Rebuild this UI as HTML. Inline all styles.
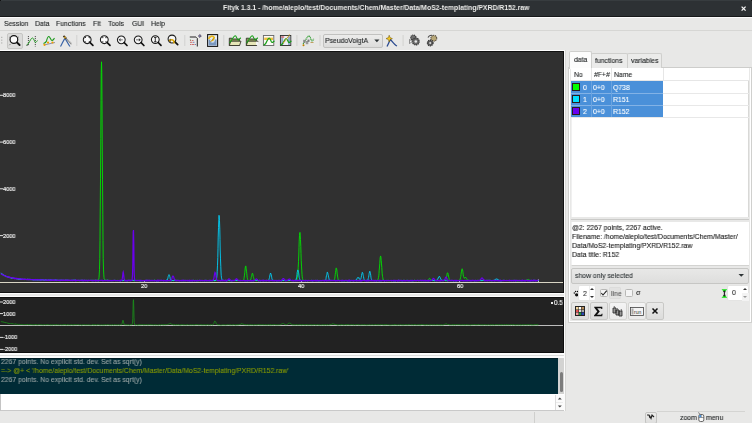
<!DOCTYPE html>
<html><head><meta charset="utf-8">
<style>
*{margin:0;padding:0;box-sizing:border-box}
html,body{-webkit-font-smoothing:antialiased;width:752px;height:423px;overflow:hidden;background:#e8e8e7;font-family:"Liberation Sans",sans-serif;font-size:7.4px;color:#1e2122}
.a{position:absolute}
.yl{position:absolute;white-space:nowrap;line-height:1;font-size:5.9px;color:#f6f6f6;-webkit-text-stroke:0.15px #f6f6f6;transform:scaleX(0.95);transform-origin:0 0;will-change:transform}
.t{position:absolute;white-space:nowrap;line-height:1;will-change:transform;-webkit-text-stroke:0.12px currentColor;transform:scaleX(0.927);transform-origin:0 0;margin-top:-0.55px}
</style></head><body>
<!-- title bar -->
<div class="a" style="left:0;top:0;width:752px;height:16px;background:#2d3134"></div>
<div class="a" style="left:0;top:0;width:752px;height:1px;background:#373c3f"></div>
<div class="a" style="left:0;top:0;width:1px;height:1px;background:#111"></div>
<div class="a" style="left:751px;top:0;width:1px;height:1px;background:#111"></div>
<div class="a" style="left:0;top:16px;width:752px;height:1px;background:#17191a"></div>
<div class="a" style="left:0;top:17px;width:752px;height:1px;background:#fbfbfb"></div>
<div class="t" style="left:222.7px;top:4.8px;font-weight:bold;font-size:7.3px;color:#eeeeec;-webkit-text-stroke:0;transform:scaleX(0.94)">Fityk 1.3.1 - /home/aleplo/test/Documents/Chem/Master/Data/MoS2-templating/PXRD/R152.raw</div>
<svg class="a" style="left:740px;top:5px" width="7" height="7" viewBox="0 0 7 7"><path d="M1.6,1.6 L5.6,5.6 M5.6,1.6 L1.6,5.6" stroke="#f4f4f4" stroke-width="1.3"/></svg>

<!-- menu bar -->
<div class="a" style="left:0;top:30px;width:752px;height:1px;background:#d6d6d4"></div>
<div class="t" style="left:3.8px;top:20.5px">Session</div>
<div class="t" style="left:35px;top:20.5px">Data</div>
<div class="t" style="left:56px;top:20.5px">Functions</div>
<div class="t" style="left:92.6px;top:20.5px">Fit</div>
<div class="t" style="left:107.9px;top:20.5px">Tools</div>
<div class="t" style="left:131.8px;top:20.5px">GUI</div>
<div class="t" style="left:150.8px;top:20.5px">Help</div>

<!-- toolbar -->
<div class="a" style="left:0;top:50px;width:564px;height:1px;background:#fdfdfd"></div>
<!-- grip -->
<svg class="a" style="left:0;top:35px" width="4" height="12"><g fill="#a8a8a6"><rect x="1.2" y="1.8" width="1.1" height="1.1"/><rect x="1.2" y="4.6" width="1.1" height="1.1"/><rect x="1.2" y="7.4" width="1.1" height="1.1"/></g></svg>
<!-- pressed zoom button -->
<div class="a" style="left:7px;top:33px;width:16px;height:16px;background:#dcdcdb;border:1px solid #c6c6c4;border-radius:2px"></div>
<svg class="a" style="left:0;top:30px" width="450" height="20">
 <defs>
  <g id="mag"><circle cx="0" cy="0" r="3.9" fill="#f6f6f6" stroke="#1a1a1a" stroke-width="1.05"/><path d="M2.9,2.9 L5.7,5.7" stroke="#111" stroke-width="1.7" stroke-linecap="round"/></g>
 </defs>
 <!-- 1 zoom -->
 <circle cx="13.9" cy="9.5" r="3.85" fill="#fbfbfb" stroke="#111" stroke-width="1.2"/>
 <path d="M17,12.5 L19.6,15" stroke="#111" stroke-width="1.9" stroke-linecap="round"/>
 <path d="M9.3,7.2 L10.6,7.6 M18.7,7 L17.6,7.6 M9.3,15.2 L10.3,14.2" stroke="#555" stroke-width="0.8"/>
 <!-- 2 sine w/ dashed -->
 <path d="M28.4,6 V15.5 M35.3,6 V16.5" stroke="#333" stroke-width="0.9" stroke-dasharray="1.1,0.9"/>
 <path d="M26.5,15 L28.5,13.5 C30,11 31,8 32.5,8 C34,8 34.5,12.5 35.5,12.5 C36.3,12.5 36.8,11 37.5,10.5" fill="none" stroke="#1c9a1c" stroke-width="0.95"/>
 <path d="M26.5,15.5 L28,15" stroke="#444" stroke-width="0.8"/>
 <!-- 3 peak with dots -->
 <path d="M43.5,13.5 C45,13 46,12.5 46.5,11 C47,9 47.7,6.5 48.8,6.5 C50,6.5 50.8,10.5 52,10.5 C53,10.5 53.8,9 54.5,8.2" fill="none" stroke="#1c9a1c" stroke-width="1.1"/>
 <path d="M44,15 L55,12.5" stroke="#6a6a90" stroke-width="0.7"/>
 <circle cx="44.5" cy="14.8" r="1.15" fill="#f0a000"/><circle cx="48" cy="12.6" r="1.1" fill="#f0a000"/><circle cx="52.5" cy="12.5" r="1.1" fill="#f0a000"/>
 <!-- 4 lambda pencil -->
 <path d="M60.5,16.5 C62,14 63.5,10 65,8.5 C66.5,10 68,14 70,16.5" fill="none" stroke="#3a64a8" stroke-width="1.2"/>
 <path d="M65,7.5 L71.5,14.2" stroke="#777" stroke-width="1.6" stroke-dasharray="0.8,0.5"/>
 <path d="M63.5,5.8 L66.2,8.6" stroke="#3a2a10" stroke-width="1.8"/>
 <circle cx="65" cy="7.5" r="0.9" fill="#e0b030"/>
 <!-- sep -->
 <rect x="76.3" y="5" width="1" height="11" fill="#d2d2d0"/>
 <!-- magnifiers -->
 <use href="#mag" x="87.2" y="9.7"/>
 <path d="M85,7.6 h1.5 v-1.2 h1.4 v1.2 h1.5 v1.4 h-1.5 v1.2 h-1.4 v-1.2 h-1.5z" fill="#fff"/>
 <path d="M84.5,8 L86,7.2 M90,8 L88.5,7.2 M84.5,11.4 L86,12.2 M90,11.4 L88.5,12.2" stroke="#333" stroke-width="1"/>
 <use href="#mag" x="104.3" y="9.7"/>
 <path d="M101.5,9 h5.6 v1.4 h-5.6z M103.6,7 h1.4 v5.4 h-1.4z" fill="#fff"/>
 <path d="M101.8,7.6 h1.6 M105.2,7.6 h1.6 M101.8,11.8 h1.6 M105.2,11.8 h1.6" stroke="#444" stroke-width="0.9"/>
 <use href="#mag" x="121.3" y="9.8"/>
 <path d="M118.6,9.8 L120.6,8.2 V11.4Z" fill="#333"/><path d="M120.5,9.8 H122.8" stroke="#888" stroke-width="1.2"/>
 <use href="#mag" x="138.2" y="9.8"/>
 <path d="M140.8,9.8 L138.8,8.2 V11.4Z" fill="#333"/><path d="M136,9.8 H138.9" stroke="#888" stroke-width="1.2"/>
 <use href="#mag" x="155.3" y="9.6"/>
 <path d="M155.3,7 V12.2 M154,7.4 H156.6 M154,11.8 H156.6" stroke="#222" stroke-width="0.9"/>
 <use href="#mag" x="172" y="9"/>
 <path d="M169.5,11.5 C170,9.5 172.5,9.3 173.8,11 L174,13.5" fill="none" stroke="#e0a800" stroke-width="1.5"/>
 <path d="M168.5,10.5 L170.5,9 L170.3,12Z" fill="#e0a800" stroke="#222" stroke-width="0.4"/>
 <!-- sep -->
 <rect x="184.3" y="5" width="1" height="11" fill="#d2d2d0"/>
 <!-- list icon -->
 <path d="M189.8,7 H196 M197.3,8.2 V16.5" stroke="#222" stroke-width="1"/>
 <path d="M196.2,7.2 L197.2,8.2" stroke="#222" stroke-width="0.8"/>
 <path d="M190,10.5 h1.2 M192,10.5 h1.5 M190,12.3 h2.5 M190,14.5 h1.5 M192,14.5 h2.5" stroke="#c86464" stroke-width="0.9"/>
 <path d="M193,12.3 h1.5 M195,14.5 h1" stroke="#6a7ab8" stroke-width="0.9"/>
 <path d="M190.4,9.5 v0.8" stroke="#3a9a3a" stroke-width="0.8"/>
 <path d="M198.4,6 L199.9,4.6 L201.3,5.9 L199.9,7.4Z" fill="#9080c8" stroke="#333" stroke-width="0.7"/>
 <!-- doc w arrow -->
 <rect x="207.6" y="4.6" width="10" height="11.8" fill="#e8eef6" stroke="#1a1a1a" stroke-width="1.1"/>
 <rect x="208.6" y="9.5" width="8" height="6" fill="#7a98c0"/>
 <circle cx="212.5" cy="10.5" r="2.3" fill="#d8e4f2"/>
 <path d="M208.6,9 C209.5,5.8 212.8,5.5 214.2,7.5 L212.3,11" fill="none" stroke="#e8b820" stroke-width="1.7"/>
 <path d="M210.5,12 L214,8.2" stroke="#c09010" stroke-width="1"/>
 <!-- sep -->
 <rect x="223.3" y="5" width="1" height="11" fill="#d2d2d0"/>
 <!-- folder 1 -->
 <path d="M229.3,15.5 V8.2 h2.5 l0.8,0.8 h6.8 v6.5z" fill="#8c9460" stroke="#2a2a20" stroke-width="0.8"/>
 <path d="M229.3,15.5 L230.8,11.2 H241 L239.6,15.5z" fill="#e6e6b8" stroke="#2a2a20" stroke-width="0.8"/>
 <path d="M229.5,13 L232,9.5 C233.5,7 234.5,5.8 235.3,5.8 C236.5,5.8 237,10 238.2,10 C239,10 239.8,8.5 240.8,7.8" fill="none" stroke="#16a016" stroke-width="1.1"/>
 <!-- folder 2 -->
 <path d="M246.3,15.5 V8.2 h2.5 l0.8,0.8 h6.8 v6.5z" fill="#8c9460" stroke="#2a2a20" stroke-width="0.8"/>
 <path d="M246.3,15.5 L247.8,11.2 H258 L256.6,15.5z" fill="#e6e6b8" stroke="#2a2a20" stroke-width="0.8"/>
 <path d="M246.5,13 L249,9.5 C250.5,7 251.5,5.8 252.3,5.8 C253.5,5.8 254,10 255.2,10 C256,10 256.8,8.5 257.8,7.8" fill="none" stroke="#16a016" stroke-width="1.1"/>
 <rect x="256" y="11.8" width="2.3" height="3.2" fill="#f4f4f4"/>
 <!-- frame -->
 <rect x="263.4" y="5.5" width="10.4" height="10" fill="#fbfbf6" stroke="#666" stroke-width="0.9"/>
 <rect x="264.2" y="7.6" width="8.8" height="2.4" fill="#f0c040"/>
 <path d="M263.6,15.3 L265.5,13.8 C267,11.5 268,8 269.2,8 C270.5,8 271,12.5 272,12.5 C272.8,12.5 273.5,11.5 274.5,11" fill="none" stroke="#16a016" stroke-width="1.2"/>
 <!-- frame pencil -->
 <rect x="280.4" y="5.5" width="10.4" height="10" fill="#eef0f6" stroke="#2a2a2a" stroke-width="0.9"/>
 <rect x="281.2" y="6.3" width="2" height="8.6" fill="#90a8c8"/><rect x="288" y="6.3" width="2" height="8.6" fill="#90a8c8"/>
 <rect x="281.2" y="6.3" width="3" height="1.4" fill="#e07070"/>
 <path d="M280.6,15.3 L282.5,13.8 C284,11.5 285,8.5 286.2,8.5 C287.5,8.5 288,12.5 289,12.5 C289.8,12.5 290.5,11.5 291.5,11" fill="none" stroke="#16a016" stroke-width="1.2"/>
 <path d="M283.3,13 L289.8,4.5" stroke="#c89a20" stroke-width="1.3" stroke-dasharray="1,0.6"/>
 <!-- sep -->
 <rect x="296.4" y="5" width="1" height="11" fill="#d2d2d0"/>
 <!-- curve with gear -->
 <path d="M303,14 C305,12 307,6 309,6 C310.5,6 311,11 312,11 C312.8,11 313.3,9.5 313.8,8.8" fill="none" stroke="#2a9a2a" stroke-width="1.1" stroke-dasharray="1.2,0.5"/>
 <rect x="303.2" y="9.8" width="2.3" height="3" fill="#8a8a8a"/><rect x="305.8" y="11" width="2.5" height="3.2" fill="#999"/><rect x="307.5" y="9.6" width="2" height="2.2" fill="#777"/>
 <circle cx="303.5" cy="15.3" r="1" fill="#c08000"/>
 <path d="M310.5,12.5 h3" stroke="#c0a060" stroke-width="1"/>
 <!-- sep -->
 <rect x="319.5" y="5" width="1" height="11" fill="#d2d2d0"/>
 <!-- lambda star -->
 <path d="M387,16.5 C388.5,13.5 389.5,11 390.5,9.5 C392,11 394.5,15 397,16" fill="none" stroke="#2a4a90" stroke-width="1.3"/>
 <path d="M389.2,5.2 L390,7.6 L392.4,8.6 L390,9.6 L389.2,12 L388.4,9.6 L386,8.6 L388.4,7.6Z" fill="#f4c820" stroke="#6a5000" stroke-width="0.5"/>
 <!-- sep -->
 <rect x="402.6" y="5" width="1" height="11" fill="#d2d2d0"/>
 <!-- gears -->
 <circle cx="413.3" cy="7.6" r="2.6" fill="#707070" stroke="#3a3a3a" stroke-width="1.2" stroke-dasharray="1.1,0.7"/>
 <circle cx="415.8" cy="11.5" r="3.4" fill="#6a6a6a" stroke="#3a3a3a" stroke-width="1.3" stroke-dasharray="1.2,0.7"/>
 <circle cx="415.8" cy="11.5" r="1.3" fill="#e8e8e8"/>
 <path d="M409.5,9.5 L412.5,11.5 L409.5,13.5Z" fill="#f0f0f0" stroke="#333" stroke-width="0.5"/>
 <!-- gears 2 -->
 <circle cx="433.8" cy="8.3" r="2.9" fill="#b8a878" stroke="#5a5040" stroke-width="1.2" stroke-dasharray="1.1,0.7"/>
 <circle cx="430.2" cy="13" r="2.8" fill="#606060" stroke="#303030" stroke-width="1.3" stroke-dasharray="1.1,0.7"/>
 <circle cx="430.2" cy="13" r="1" fill="#ddd"/>
 <path d="M428,7.5 C429,5.5 431,5 432.5,5.5" fill="none" stroke="#444" stroke-width="1.1"/>
</svg>
<!-- combo -->
<div class="a" style="left:323px;top:33.5px;width:60px;height:14px;background:linear-gradient(#ececeb,#dcdcdb);border:1px solid #c2c2c0;border-radius:2px"></div>
<div class="t" style="left:325px;top:37.5px">PseudoVoigtA</div>
<svg class="a" style="left:374px;top:39px" width="6" height="4"><path d="M0.3,0.5 L5.5,0.5 L2.9,3.2Z" fill="#2e3436"/></svg>


<!-- main plot -->
<div class="a" style="left:0;top:51px;width:564px;height:242px;background:#111;"></div>
<div class="a" style="left:0;top:52px;width:563px;height:240px;background:#303030"></div>
<div class="a" style="left:564px;top:50px;width:1px;height:361px;background:#fbfbfb"></div>
<div class="a" style="left:565px;top:50px;width:1px;height:361px;background:#d8d8d6"></div>
<div class="a" style="left:0;top:293px;width:564px;height:1px;background:#fbfbfb"></div>
<div class="a" style="left:0;top:296px;width:564px;height:1px;background:#fbfbfb"></div>
<svg class="a" style="left:0;top:0" width="564" height="423">
  <!-- y ticks -->
  <g stroke="#e0e0e0" stroke-width="1">
    <path d="M0,95.3 H3 M0,142.1 H3 M0,188.8 H3 M0,235.6 H3"/>
  </g>
  <line x1="0" y1="282.5" x2="563" y2="282.5" stroke="#d8d4c4" stroke-width="1"/>
  <path d="M144.5,280 V282 M301.5,280 V282 M459.5,280 V282 M538.5,279.5 V282" stroke="#ddd" stroke-width="1"/>
  <path d="M1.0,273.8 L1.2,273.9 L1.5,274.3 L1.8,274.2 L2.0,274.6 L2.2,274.6 L2.5,274.7 L2.8,275.0 L3.0,274.9 L3.2,275.2 L3.5,275.2 L3.8,275.3 L4.0,275.6 L4.2,275.9 L4.5,275.7 L4.8,275.9 L5.0,276.1 L5.2,276.4 L5.5,276.3 L5.8,276.3 L6.0,276.7 L6.2,276.4 L6.5,276.8 L6.8,276.6 L7.0,276.7 L7.2,276.7 L7.5,276.9 L7.8,277.2 L8.0,277.0 L8.2,277.2 L8.5,277.3 L8.8,277.3 L9.0,277.4 L9.2,277.3 L9.5,277.3 L9.8,277.5 L10.0,277.7 L10.2,277.7 L10.5,277.7 L10.8,277.8 L11.0,277.8 L11.2,277.8 L11.5,278.1 L11.8,278.1 L12.0,277.9 L12.2,278.1 L12.5,278.1 L12.8,278.3 L13.0,278.3 L13.2,278.2 L13.5,278.5 L13.8,278.2 L14.0,278.3 L14.2,278.5 L14.5,278.3 L14.8,278.5 L15.0,278.3 L15.2,278.6 L15.5,278.7 L15.8,278.6 L16.0,278.8 L16.2,278.6 L16.5,278.8 L16.8,278.8 L17.0,278.8 L17.2,278.8 L17.5,278.9 L17.8,279.0 L18.0,278.8 L18.2,278.9 L18.5,278.7 L18.8,279.0 L19.0,279.0 L19.2,279.2 L19.5,279.1 L19.8,278.9 L20.0,279.0 L20.2,279.1 L20.5,278.9 L20.8,279.1 L21.0,279.0 L21.2,279.0 L21.5,279.0 L21.8,279.3 L22.0,279.0 L22.2,279.1 L22.5,279.2 L22.8,279.4 L23.0,279.1 L23.2,279.3 L23.5,279.3 L23.8,279.5 L24.0,279.5 L24.2,279.5 L24.5,279.3 L24.8,279.3 L25.0,279.3 L25.2,279.5 L25.5,279.6 L25.8,279.3 L26.0,279.3 L26.2,279.3 L26.5,279.4 L26.8,279.5 L27.0,279.5 L27.2,279.4 L27.5,279.3 L27.8,279.5 L28.0,279.5 L28.2,279.6 L28.5,279.7 L28.8,279.6 L29.0,279.6 L29.2,279.6 L29.5,279.7 L29.8,279.4 L30.0,279.8 L30.2,279.7 L30.5,279.8 L30.8,279.8 L31.0,279.6 L31.2,279.6 L31.5,279.5 L31.8,279.7 L32.0,279.5 L32.2,279.5 L32.5,279.6 L32.8,279.6 L33.0,279.7 L33.2,279.6 L33.5,279.5 L33.8,279.6 L34.0,279.6 L34.2,279.7 L34.5,279.6 L34.8,279.9 L35.0,279.8 L35.2,279.7 L35.5,279.7 L35.8,279.8 L36.0,279.8 L36.2,279.7 L36.5,280.0 L36.8,280.0 L37.0,279.8 L37.2,279.9 L37.5,279.7 L37.8,279.7 L38.0,279.8 L38.2,279.8 L38.5,280.0 L38.8,279.8 L39.0,279.7 L39.2,280.1 L39.5,279.9 L39.8,279.8 L40.0,279.9 L40.2,279.7 L40.5,280.0 L40.8,280.1 L41.0,280.1 L41.2,280.0 L41.5,279.9 L41.8,279.9 L42.0,279.8 L42.2,280.1 L42.5,280.0 L42.8,280.1 L43.0,279.9 L43.2,279.9 L43.5,280.1 L43.8,280.2 L44.0,280.2 L44.2,280.1 L44.5,280.2 L44.8,280.1 L45.0,279.9 L45.2,280.0 L45.5,280.0 L45.8,279.9 L46.0,279.9 L46.2,280.0 L46.5,280.0 L46.8,280.1 L47.0,280.3 L47.2,280.1 L47.5,280.3 L47.8,280.3 L48.0,280.3 L48.2,280.0 L48.5,280.0 L48.8,280.0 L49.0,280.0 L49.2,280.0 L49.5,280.2 L49.8,280.3 L50.0,280.3 L50.2,280.1 L50.5,280.2 L50.8,280.3 L51.0,280.0 L51.2,280.2 L51.5,280.3 L51.8,280.3 L52.0,280.3 L52.2,280.2 L52.5,280.0 L52.8,280.3 L53.0,280.1 L53.2,280.3 L53.5,280.4 L53.8,280.1 L54.0,280.1 L54.2,280.4 L54.5,280.3 L54.8,280.1 L55.0,280.0 L55.2,280.1 L55.5,280.4 L55.8,280.3 L56.0,280.1 L56.2,280.3 L56.5,280.4 L56.8,280.3 L57.0,280.2 L57.2,280.2 L57.5,280.1 L57.8,280.0 L58.0,280.4 L58.2,280.3 L58.5,280.3 L58.8,280.4 L59.0,280.2 L59.2,280.4 L59.5,280.4 L59.8,280.1 L60.0,280.2 L60.2,280.2 L60.5,280.2 L60.8,280.3 L61.0,280.2 L61.2,280.2 L61.5,280.1 L61.8,280.4 L62.0,280.2 L62.2,280.3 L62.5,280.3 L62.8,280.4 L63.0,280.3 L63.2,280.5 L63.5,280.3 L63.8,280.3 L64.0,280.3 L64.2,280.1 L64.5,280.3 L64.8,280.2 L65.0,280.1 L65.2,280.4 L65.5,280.2 L65.8,280.3 L66.0,280.4 L66.2,280.3 L66.5,280.3 L66.8,280.3 L67.0,280.3 L67.2,280.4 L67.5,280.2 L67.8,280.4 L68.0,280.2 L68.2,280.2 L68.5,280.4 L68.8,280.3 L69.0,280.4 L69.2,280.4 L69.5,280.5 L69.8,280.3 L70.0,280.4 L70.2,280.4 L70.5,280.4 L70.8,280.4 L71.0,280.3 L71.2,280.4 L71.5,280.4 L71.8,280.5 L72.0,280.4 L72.2,280.5 L72.5,280.5 L72.8,280.3 L73.0,280.4 L73.2,280.6 L73.5,280.5 L73.8,280.2 L74.0,280.2 L74.2,280.4 L74.5,280.2 L74.8,280.3 L75.0,280.2 L75.2,280.5 L75.5,280.5 L75.8,280.5 L76.0,280.3 L76.2,280.5 L76.5,280.5 L76.8,280.3 L77.0,280.5 L77.2,280.6 L77.5,280.3 L77.8,280.6 L78.0,280.4 L78.2,280.4 L78.5,280.6 L78.8,280.5 L79.0,280.3 L79.2,280.4 L79.5,280.4 L79.8,280.3 L80.0,280.3 L80.2,280.3 L80.5,280.5 L80.8,280.2 L81.0,280.4 L81.2,280.4 L81.5,280.2 L81.8,280.3 L82.0,280.5 L82.2,280.4 L82.5,280.2 L82.8,280.6 L83.0,280.5 L83.2,280.6 L83.5,280.3 L83.8,280.3 L84.0,280.2 L84.2,280.5 L84.5,280.3 L84.8,280.3 L85.0,280.4 L85.2,280.6 L85.5,280.6 L85.8,280.3 L86.0,280.3 L86.2,280.6 L86.5,280.5 L86.8,280.5 L87.0,280.3 L87.2,280.2 L87.5,280.5 L87.8,280.4 L88.0,280.3 L88.2,280.6 L88.5,280.5 L88.8,280.5 L89.0,280.3 L89.2,280.6 L89.5,280.2 L89.8,280.6 L90.0,280.4 L90.2,280.4 L90.5,280.4 L90.8,280.6 L91.0,280.3 L91.2,280.3 L91.5,280.4 L91.8,280.3 L92.0,280.2 L92.2,280.3 L92.5,280.2 L92.8,280.3 L93.0,280.3 L93.2,280.3 L93.5,280.5 L93.8,280.3 L94.0,280.4 L94.2,280.2 L94.5,280.3 L94.8,280.1 L95.0,280.2 L95.2,280.1 L95.5,280.4 L95.8,280.3 L96.0,280.1 L96.2,280.2 L96.5,280.4 L96.8,280.0 L97.0,280.3 L97.2,280.1 L97.5,280.0 L97.8,280.1 L98.0,279.8 L98.2,279.8 L98.5,279.6 L98.8,279.1 L99.0,277.6 L99.2,275.0 L99.5,269.3 L99.8,258.6 L100.0,240.7 L100.2,214.0 L100.5,178.8 L100.8,138.7 L101.0,100.3 L101.2,72.4 L101.5,61.8 L101.8,72.2 L102.0,100.3 L102.2,139.0 L102.5,179.2 L102.8,214.2 L103.0,240.7 L103.2,258.5 L103.5,269.1 L103.8,274.9 L104.0,277.6 L104.2,278.9 L104.5,279.4 L104.8,280.0 L105.0,280.1 L105.2,280.0 L105.5,280.0 L105.8,280.3 L106.0,280.1 L106.2,280.1 L106.5,280.0 L106.8,280.2 L107.0,280.3 L107.2,280.3 L107.5,280.2 L107.8,280.3 L108.0,280.2 L108.2,280.3 L108.5,280.2 L108.8,280.3 L109.0,280.2 L109.2,280.2 L109.5,280.3 L109.8,280.3 L110.0,280.5 L110.2,280.4 L110.5,280.5 L110.8,280.5 L111.0,280.5 L111.2,280.6 L111.5,280.4 L111.8,280.4 L112.0,280.7 L112.2,280.3 L112.5,280.6 L112.8,280.5 L113.0,280.3 L113.2,280.6 L113.5,280.6 L113.8,280.5 L114.0,280.6 L114.2,280.6 L114.5,280.4 L114.8,280.5 L115.0,280.5 L115.2,280.6 L115.5,280.6 L115.8,280.6 L116.0,280.5 L116.2,280.7 L116.5,280.6 L116.8,280.6 L117.0,280.4 L117.2,280.3 L117.5,280.4 L117.8,280.5 L118.0,280.4 L118.2,280.7 L118.5,280.5 L118.8,280.6 L119.0,280.6 L119.2,280.6 L119.5,280.5 L119.8,280.3 L120.0,280.7 L120.2,280.6 L120.5,280.5 L120.8,280.5 L121.0,280.6 L121.2,280.4 L121.5,280.6 L121.8,280.4 L122.0,280.4 L122.2,280.4 L122.5,280.6 L122.8,280.4 L123.0,280.6 L123.2,280.7 L123.5,280.5 L123.8,280.5 L124.0,280.5 L124.2,280.6 L124.5,280.7 L124.8,280.6 L125.0,280.6 L125.2,280.4 L125.5,280.4 L125.8,280.5 L126.0,280.6 L126.2,280.5 L126.5,280.6 L126.8,280.4 L127.0,280.4 L127.2,280.5 L127.5,280.6 L127.8,280.6 L128.0,280.6 L128.2,280.5 L128.5,280.6 L128.8,280.5 L129.0,280.5 L129.2,280.4 L129.5,280.7 L129.8,280.4 L130.0,280.7 L130.2,280.7 L130.5,280.4 L130.8,280.5 L131.0,280.7 L131.2,280.7 L131.5,280.5 L131.8,280.5 L132.0,280.4 L132.2,280.7 L132.5,280.4 L132.8,280.6 L133.0,280.4 L133.2,280.6 L133.5,280.7 L133.8,280.4 L134.0,280.7 L134.2,280.6 L134.5,280.7 L134.8,280.6 L135.0,280.5 L135.2,280.7 L135.5,280.6 L135.8,280.4 L136.0,280.4 L136.2,280.6 L136.5,280.5 L136.8,280.5 L137.0,280.4 L137.2,280.5 L137.5,280.5 L137.8,280.7 L138.0,280.4 L138.2,280.7 L138.5,280.7 L138.8,280.4 L139.0,280.7 L139.2,280.7 L139.5,280.7 L139.8,280.5 L140.0,280.5 L140.2,280.5 L140.5,280.8 L140.8,280.6 L141.0,280.5 L141.2,280.5 L141.5,280.5 L141.8,280.4 L142.0,280.4 L142.2,280.7 L142.5,280.5 L142.8,280.7 L143.0,280.5 L143.2,280.5 L143.5,280.6 L143.8,280.5 L144.0,280.5 L144.2,280.8 L144.5,280.7 L144.8,280.7 L145.0,280.6 L145.2,280.7 L145.5,280.8 L145.8,280.6 L146.0,280.7 L146.2,280.4 L146.5,280.7 L146.8,280.6 L147.0,280.7 L147.2,280.6 L147.5,280.5 L147.8,280.4 L148.0,280.7 L148.2,280.4 L148.5,280.6 L148.8,280.5 L149.0,280.5 L149.2,280.7 L149.5,280.8 L149.8,280.5 L150.0,280.6 L150.2,280.5 L150.5,280.6 L150.8,280.5 L151.0,280.4 L151.2,280.4 L151.5,280.5 L151.8,280.7 L152.0,280.6 L152.2,280.5 L152.5,280.7 L152.8,280.8 L153.0,280.6 L153.2,280.4 L153.5,280.5 L153.8,280.4 L154.0,280.5 L154.2,280.4 L154.5,280.5 L154.8,280.5 L155.0,280.6 L155.2,280.7 L155.5,280.7 L155.8,280.5 L156.0,280.5 L156.2,280.6 L156.5,280.5 L156.8,280.5 L157.0,280.4 L157.2,280.5 L157.5,280.8 L157.8,280.4 L158.0,280.6 L158.2,280.6 L158.5,280.7 L158.8,280.5 L159.0,280.5 L159.2,280.5 L159.5,280.5 L159.8,280.6 L160.0,280.8 L160.2,280.7 L160.5,280.7 L160.8,280.4 L161.0,280.4 L161.2,280.7 L161.5,280.7 L161.8,280.6 L162.0,280.6 L162.2,280.4 L162.5,280.5 L162.8,280.8 L163.0,280.7 L163.2,280.7 L163.5,280.8 L163.8,280.5 L164.0,280.4 L164.2,280.4 L164.5,280.6 L164.8,280.7 L165.0,280.8 L165.2,280.7 L165.5,280.6 L165.8,280.7 L166.0,280.6 L166.2,280.6 L166.5,280.4 L166.8,280.7 L167.0,280.5 L167.2,280.8 L167.5,280.6 L167.8,280.5 L168.0,280.4 L168.2,280.5 L168.5,280.6 L168.8,280.7 L169.0,280.4 L169.2,280.4 L169.5,280.6 L169.8,280.6 L170.0,280.5 L170.2,280.5 L170.5,280.6 L170.8,280.4 L171.0,280.5 L171.2,280.6 L171.5,280.8 L171.8,280.6 L172.0,280.7 L172.2,280.6 L172.5,280.5 L172.8,280.5 L173.0,280.8 L173.2,280.7 L173.5,280.5 L173.8,280.4 L174.0,280.6 L174.2,280.7 L174.5,280.6 L174.8,280.5 L175.0,280.7 L175.2,280.8 L175.5,280.5 L175.8,280.4 L176.0,280.5 L176.2,280.6 L176.5,280.7 L176.8,280.5 L177.0,280.7 L177.2,280.7 L177.5,280.6 L177.8,280.5 L178.0,280.8 L178.2,280.5 L178.5,280.7 L178.8,280.5 L179.0,280.5 L179.2,280.7 L179.5,280.5 L179.8,280.8 L180.0,280.6 L180.2,280.5 L180.5,280.5 L180.8,280.6 L181.0,280.7 L181.2,280.8 L181.5,280.5 L181.8,280.5 L182.0,280.5 L182.2,280.8 L182.5,280.4 L182.8,280.4 L183.0,280.4 L183.2,280.6 L183.5,280.8 L183.8,280.7 L184.0,280.7 L184.2,280.8 L184.5,280.8 L184.8,280.5 L185.0,280.5 L185.2,280.8 L185.5,280.7 L185.8,280.4 L186.0,280.7 L186.2,280.5 L186.5,280.5 L186.8,280.5 L187.0,280.5 L187.2,280.4 L187.5,280.5 L187.8,280.5 L188.0,280.8 L188.2,280.4 L188.5,280.8 L188.8,280.5 L189.0,280.5 L189.2,280.7 L189.5,280.7 L189.8,280.6 L190.0,280.4 L190.2,280.6 L190.5,280.5 L190.8,280.8 L191.0,280.5 L191.2,280.5 L191.5,280.8 L191.8,280.4 L192.0,280.6 L192.2,280.7 L192.5,280.7 L192.8,280.4 L193.0,280.4 L193.2,280.4 L193.5,280.8 L193.8,280.5 L194.0,280.7 L194.2,280.8 L194.5,280.5 L194.8,280.5 L195.0,280.8 L195.2,280.6 L195.5,280.5 L195.8,280.7 L196.0,280.5 L196.2,280.5 L196.5,280.4 L196.8,280.7 L197.0,280.8 L197.2,280.6 L197.5,280.8 L197.8,280.4 L198.0,280.5 L198.2,280.6 L198.5,280.8 L198.8,280.8 L199.0,280.5 L199.2,280.5 L199.5,280.6 L199.8,280.6 L200.0,280.8 L200.2,280.5 L200.5,280.7 L200.8,280.7 L201.0,280.7 L201.2,280.7 L201.5,280.6 L201.8,280.5 L202.0,280.5 L202.2,280.5 L202.5,280.7 L202.8,280.4 L203.0,280.5 L203.2,280.7 L203.5,280.5 L203.8,280.4 L204.0,280.4 L204.2,280.6 L204.5,280.5 L204.8,280.8 L205.0,280.7 L205.2,280.8 L205.5,280.5 L205.8,280.4 L206.0,280.4 L206.2,280.6 L206.5,280.7 L206.8,280.6 L207.0,280.5 L207.2,280.6 L207.5,280.6 L207.8,280.7 L208.0,280.7 L208.2,280.7 L208.5,280.7 L208.8,280.4 L209.0,280.7 L209.2,280.5 L209.5,280.6 L209.8,280.5 L210.0,280.7 L210.2,280.5 L210.5,280.5 L210.8,280.5 L211.0,280.5 L211.2,280.7 L211.5,280.6 L211.8,280.5 L212.0,280.6 L212.2,280.8 L212.5,280.6 L212.8,280.5 L213.0,280.7 L213.2,280.7 L213.5,280.8 L213.8,280.4 L214.0,280.6 L214.2,280.7 L214.5,280.7 L214.8,280.8 L215.0,280.4 L215.2,280.5 L215.5,280.4 L215.8,280.5 L216.0,280.8 L216.2,280.6 L216.5,280.8 L216.8,280.5 L217.0,280.7 L217.2,280.6 L217.5,280.5 L217.8,280.7 L218.0,280.8 L218.2,280.4 L218.5,280.6 L218.8,280.6 L219.0,280.5 L219.2,280.5 L219.5,280.5 L219.8,280.5 L220.0,280.5 L220.2,280.6 L220.5,280.7 L220.8,280.5 L221.0,280.4 L221.2,280.5 L221.5,280.7 L221.8,280.5 L222.0,280.5 L222.2,280.5 L222.5,280.7 L222.8,280.6 L223.0,280.4 L223.2,280.4 L223.5,280.6 L223.8,280.6 L224.0,280.7 L224.2,280.4 L224.5,280.5 L224.8,280.7 L225.0,280.6 L225.2,280.5 L225.5,280.5 L225.8,280.8 L226.0,280.5 L226.2,280.6 L226.5,280.5 L226.8,280.6 L227.0,280.7 L227.2,280.8 L227.5,280.5 L227.8,280.5 L228.0,280.7 L228.2,280.5 L228.5,280.4 L228.8,280.8 L229.0,280.6 L229.2,280.7 L229.5,280.6 L229.8,280.7 L230.0,280.6 L230.2,280.5 L230.5,280.4 L230.8,280.6 L231.0,280.7 L231.2,280.8 L231.5,280.4 L231.8,280.6 L232.0,280.5 L232.2,280.6 L232.5,280.5 L232.8,280.5 L233.0,280.6 L233.2,280.8 L233.5,280.4 L233.8,280.6 L234.0,280.7 L234.2,280.8 L234.5,280.5 L234.8,280.4 L235.0,280.8 L235.2,280.8 L235.5,280.6 L235.8,280.4 L236.0,280.8 L236.2,280.5 L236.5,280.8 L236.8,280.6 L237.0,280.7 L237.2,280.5 L237.5,280.7 L237.8,280.5 L238.0,280.5 L238.2,280.7 L238.5,280.7 L238.8,280.5 L239.0,280.5 L239.2,280.5 L239.5,280.6 L239.8,280.5 L240.0,280.4 L240.2,280.5 L240.5,280.7 L240.8,280.7 L241.0,280.4 L241.2,280.6 L241.5,280.7 L241.8,280.4 L242.0,280.7 L242.2,280.4 L242.5,280.6 L242.8,280.5 L243.0,280.5 L243.2,280.2 L243.5,280.0 L243.8,279.5 L244.0,278.5 L244.2,277.2 L244.5,275.2 L244.8,272.8 L245.0,270.0 L245.2,268.0 L245.5,266.4 L245.8,265.9 L246.0,267.0 L246.2,268.9 L246.5,271.2 L246.8,273.7 L247.0,276.0 L247.2,277.6 L247.5,278.8 L247.8,279.7 L248.0,280.0 L248.2,280.3 L248.5,280.5 L248.8,280.3 L249.0,280.6 L249.2,280.4 L249.5,280.6 L249.8,280.6 L250.0,280.4 L250.2,280.1 L250.5,279.9 L250.8,279.4 L251.0,278.9 L251.2,277.5 L251.5,276.6 L251.8,275.3 L252.0,274.2 L252.2,273.5 L252.5,273.2 L252.8,274.1 L253.0,274.9 L253.2,276.4 L253.5,277.6 L253.8,278.4 L254.0,279.4 L254.2,280.0 L254.5,280.0 L254.8,280.3 L255.0,280.6 L255.2,280.4 L255.5,280.7 L255.8,280.5 L256.0,280.7 L256.2,280.4 L256.5,280.6 L256.8,280.7 L257.0,280.5 L257.2,280.5 L257.5,280.6 L257.8,280.5 L258.0,280.4 L258.2,280.5 L258.5,280.5 L258.8,280.8 L259.0,280.7 L259.2,280.7 L259.5,280.5 L259.8,280.7 L260.0,280.4 L260.2,280.6 L260.5,280.6 L260.8,280.5 L261.0,280.7 L261.2,280.6 L261.5,280.6 L261.8,280.7 L262.0,280.4 L262.2,280.8 L262.5,280.6 L262.8,280.6 L263.0,280.7 L263.2,280.5 L263.5,280.8 L263.8,280.6 L264.0,280.5 L264.2,280.7 L264.5,280.6 L264.8,280.5 L265.0,280.7 L265.2,280.4 L265.5,280.7 L265.8,280.5 L266.0,280.6 L266.2,280.8 L266.5,280.6 L266.8,280.7 L267.0,280.5 L267.2,280.4 L267.5,280.4 L267.8,280.5 L268.0,280.6 L268.2,280.6 L268.5,280.6 L268.8,280.8 L269.0,280.4 L269.2,280.5 L269.5,280.7 L269.8,280.4 L270.0,280.4 L270.2,280.5 L270.5,280.4 L270.8,280.5 L271.0,280.5 L271.2,280.6 L271.5,280.6 L271.8,280.5 L272.0,280.6 L272.2,280.6 L272.5,280.4 L272.8,280.8 L273.0,280.5 L273.2,280.5 L273.5,280.4 L273.8,280.6 L274.0,280.7 L274.2,280.7 L274.5,280.6 L274.8,280.5 L275.0,280.4 L275.2,280.7 L275.5,280.6 L275.8,280.5 L276.0,280.7 L276.2,280.6 L276.5,280.8 L276.8,280.7 L277.0,280.5 L277.2,280.8 L277.5,280.4 L277.8,280.6 L278.0,280.6 L278.2,280.5 L278.5,280.4 L278.8,280.7 L279.0,280.4 L279.2,280.6 L279.5,280.8 L279.8,280.4 L280.0,280.5 L280.2,280.6 L280.5,280.6 L280.8,280.6 L281.0,280.7 L281.2,280.5 L281.5,280.5 L281.8,280.5 L282.0,280.4 L282.2,280.7 L282.5,280.7 L282.8,280.7 L283.0,280.4 L283.2,280.7 L283.5,280.7 L283.8,280.6 L284.0,280.7 L284.2,280.6 L284.5,280.5 L284.8,280.4 L285.0,280.5 L285.2,280.4 L285.5,280.5 L285.8,280.7 L286.0,280.7 L286.2,280.7 L286.5,280.7 L286.8,280.5 L287.0,280.6 L287.2,280.6 L287.5,280.7 L287.8,280.6 L288.0,280.5 L288.2,280.6 L288.5,280.8 L288.8,280.5 L289.0,280.7 L289.2,280.4 L289.5,280.5 L289.8,280.5 L290.0,280.7 L290.2,280.7 L290.5,280.7 L290.8,280.5 L291.0,280.7 L291.2,280.5 L291.5,280.5 L291.8,280.7 L292.0,280.6 L292.2,280.6 L292.5,280.6 L292.8,280.7 L293.0,280.5 L293.2,280.7 L293.5,280.6 L293.8,280.7 L294.0,280.5 L294.2,280.6 L294.5,280.5 L294.8,280.4 L295.0,280.4 L295.2,280.5 L295.5,280.3 L295.8,280.6 L296.0,280.3 L296.2,280.1 L296.5,280.0 L296.8,280.1 L297.0,279.4 L297.2,278.5 L297.5,277.1 L297.8,274.9 L298.0,271.9 L298.2,267.4 L298.5,261.7 L298.8,255.0 L299.0,247.6 L299.2,241.1 L299.5,235.6 L299.8,232.7 L300.0,232.4 L300.2,235.0 L300.5,239.6 L300.8,246.5 L301.0,253.6 L301.2,260.5 L301.5,266.1 L301.8,270.9 L302.0,274.4 L302.2,276.7 L302.5,278.6 L302.8,279.5 L303.0,279.9 L303.2,280.3 L303.5,280.4 L303.8,280.3 L304.0,280.3 L304.2,280.3 L304.5,280.6 L304.8,280.4 L305.0,280.4 L305.2,280.5 L305.5,280.3 L305.8,280.4 L306.0,280.4 L306.2,280.6 L306.5,280.5 L306.8,280.5 L307.0,280.7 L307.2,280.5 L307.5,280.7 L307.8,280.6 L308.0,280.4 L308.2,280.5 L308.5,280.5 L308.8,280.7 L309.0,280.5 L309.2,280.6 L309.5,280.6 L309.8,280.5 L310.0,280.7 L310.2,280.4 L310.5,280.7 L310.8,280.4 L311.0,280.4 L311.2,280.5 L311.5,280.7 L311.8,280.8 L312.0,280.4 L312.2,280.6 L312.5,280.6 L312.8,280.7 L313.0,280.5 L313.2,280.6 L313.5,280.5 L313.8,280.7 L314.0,280.5 L314.2,280.8 L314.5,280.5 L314.8,280.5 L315.0,280.7 L315.2,280.6 L315.5,280.4 L315.8,280.6 L316.0,280.4 L316.2,280.7 L316.5,280.7 L316.8,280.7 L317.0,280.6 L317.2,280.5 L317.5,280.5 L317.8,280.5 L318.0,280.7 L318.2,280.4 L318.5,280.7 L318.8,280.4 L319.0,280.5 L319.2,280.5 L319.5,280.8 L319.8,280.6 L320.0,280.5 L320.2,280.7 L320.5,280.5 L320.8,280.6 L321.0,280.6 L321.2,280.7 L321.5,280.7 L321.8,280.6 L322.0,280.5 L322.2,280.5 L322.5,280.5 L322.8,280.7 L323.0,280.7 L323.2,280.7 L323.5,280.5 L323.8,280.6 L324.0,280.7 L324.2,280.6 L324.5,280.4 L324.8,280.6 L325.0,280.7 L325.2,280.5 L325.5,280.5 L325.8,280.5 L326.0,280.7 L326.2,280.7 L326.5,280.5 L326.8,280.5 L327.0,280.5 L327.2,280.5 L327.5,280.6 L327.8,280.5 L328.0,280.5 L328.2,280.5 L328.5,280.8 L328.8,280.7 L329.0,280.4 L329.2,280.8 L329.5,280.4 L329.8,280.5 L330.0,280.8 L330.2,280.7 L330.5,280.7 L330.8,280.6 L331.0,280.5 L331.2,280.6 L331.5,280.4 L331.8,280.5 L332.0,280.5 L332.2,280.4 L332.5,280.5 L332.8,280.7 L333.0,280.6 L333.2,280.5 L333.5,280.5 L333.8,280.4 L334.0,280.1 L334.2,279.9 L334.5,279.2 L334.8,278.3 L335.0,276.8 L335.2,274.7 L335.5,272.6 L335.8,270.5 L336.0,268.7 L336.2,267.9 L336.5,268.4 L336.8,269.8 L337.0,271.8 L337.2,273.9 L337.5,276.1 L337.8,277.7 L338.0,278.9 L338.2,279.6 L338.5,280.0 L338.8,280.4 L339.0,280.3 L339.2,280.5 L339.5,280.7 L339.8,280.6 L340.0,280.6 L340.2,280.5 L340.5,280.5 L340.8,280.6 L341.0,280.6 L341.2,280.5 L341.5,280.6 L341.8,280.8 L342.0,280.5 L342.2,280.6 L342.5,280.7 L342.8,280.5 L343.0,280.6 L343.2,280.8 L343.5,280.4 L343.8,280.6 L344.0,280.5 L344.2,280.7 L344.5,280.8 L344.8,280.6 L345.0,280.4 L345.2,280.6 L345.5,280.6 L345.8,280.7 L346.0,280.6 L346.2,280.6 L346.5,280.7 L346.8,280.6 L347.0,280.6 L347.2,280.8 L347.5,280.5 L347.8,280.7 L348.0,280.6 L348.2,280.7 L348.5,280.4 L348.8,280.8 L349.0,280.5 L349.2,280.4 L349.5,280.5 L349.8,280.6 L350.0,280.4 L350.2,280.6 L350.5,280.6 L350.8,280.7 L351.0,280.5 L351.2,280.5 L351.5,280.5 L351.8,280.7 L352.0,280.8 L352.2,280.6 L352.5,280.5 L352.8,280.7 L353.0,280.6 L353.2,280.5 L353.5,280.4 L353.8,280.7 L354.0,280.7 L354.2,280.6 L354.5,280.6 L354.8,280.6 L355.0,280.5 L355.2,280.8 L355.5,280.5 L355.8,280.7 L356.0,280.7 L356.2,280.7 L356.5,280.6 L356.8,280.5 L357.0,280.6 L357.2,280.4 L357.5,280.7 L357.8,280.5 L358.0,280.7 L358.2,280.5 L358.5,280.5 L358.8,280.5 L359.0,280.6 L359.2,280.5 L359.5,280.4 L359.8,280.7 L360.0,280.5 L360.2,280.5 L360.5,280.5 L360.8,280.6 L361.0,280.6 L361.2,280.6 L361.5,280.7 L361.8,280.5 L362.0,280.8 L362.2,280.7 L362.5,280.4 L362.8,280.7 L363.0,280.8 L363.2,280.7 L363.5,280.4 L363.8,280.7 L364.0,280.6 L364.2,280.4 L364.5,280.4 L364.8,280.8 L365.0,280.7 L365.2,280.5 L365.5,280.4 L365.8,280.4 L366.0,280.5 L366.2,280.7 L366.5,280.5 L366.8,280.5 L367.0,280.8 L367.2,280.7 L367.5,280.5 L367.8,280.7 L368.0,280.6 L368.2,280.7 L368.5,280.7 L368.8,280.7 L369.0,280.7 L369.2,280.7 L369.5,280.5 L369.8,280.7 L370.0,280.6 L370.2,280.7 L370.5,280.6 L370.8,280.7 L371.0,280.6 L371.2,280.5 L371.5,280.5 L371.8,280.4 L372.0,280.6 L372.2,280.4 L372.5,280.6 L372.8,280.4 L373.0,280.6 L373.2,280.6 L373.5,280.6 L373.8,280.7 L374.0,280.4 L374.2,280.7 L374.5,280.5 L374.8,280.6 L375.0,280.6 L375.2,280.7 L375.5,280.5 L375.8,280.5 L376.0,280.7 L376.2,280.4 L376.5,280.6 L376.8,280.5 L377.0,280.3 L377.2,280.4 L377.5,280.3 L377.8,280.1 L378.0,279.4 L378.2,278.9 L378.5,277.5 L378.8,275.8 L379.0,273.5 L379.2,270.2 L379.5,267.0 L379.8,263.3 L380.0,259.9 L380.2,257.6 L380.5,256.1 L380.8,256.3 L381.0,257.9 L381.2,260.7 L381.5,263.9 L381.8,267.6 L382.0,271.0 L382.2,273.9 L382.5,276.3 L382.8,277.7 L383.0,279.1 L383.2,279.6 L383.5,280.0 L383.8,280.2 L384.0,280.4 L384.2,280.7 L384.5,280.6 L384.8,280.6 L385.0,280.5 L385.2,280.5 L385.5,280.5 L385.8,280.6 L386.0,280.6 L386.2,280.7 L386.5,280.4 L386.8,280.7 L387.0,280.7 L387.2,280.6 L387.5,280.4 L387.8,280.5 L388.0,280.4 L388.2,280.5 L388.5,280.7 L388.8,280.6 L389.0,280.6 L389.2,280.7 L389.5,280.7 L389.8,280.6 L390.0,280.6 L390.2,280.6 L390.5,280.7 L390.8,280.6 L391.0,280.7 L391.2,280.5 L391.5,280.7 L391.8,280.6 L392.0,280.7 L392.2,280.4 L392.5,280.5 L392.8,280.4 L393.0,280.7 L393.2,280.8 L393.5,280.7 L393.8,280.5 L394.0,280.7 L394.2,280.7 L394.5,280.6 L394.8,280.5 L395.0,280.5 L395.2,280.6 L395.5,280.5 L395.8,280.6 L396.0,280.6 L396.2,280.8 L396.5,280.4 L396.8,280.6 L397.0,280.4 L397.2,280.4 L397.5,280.7 L397.8,280.6 L398.0,280.8 L398.2,280.6 L398.5,280.4 L398.8,280.5 L399.0,280.6 L399.2,280.8 L399.5,280.8 L399.8,280.6 L400.0,280.6 L400.2,280.4 L400.5,280.7 L400.8,280.5 L401.0,280.5 L401.2,280.4 L401.5,280.4 L401.8,280.7 L402.0,280.4 L402.2,280.8 L402.5,280.4 L402.8,280.7 L403.0,280.4 L403.2,280.4 L403.5,280.7 L403.8,280.5 L404.0,280.7 L404.2,280.5 L404.5,280.4 L404.8,280.7 L405.0,280.7 L405.2,280.7 L405.5,280.7 L405.8,280.4 L406.0,280.6 L406.2,280.7 L406.5,280.6 L406.8,280.8 L407.0,280.5 L407.2,280.8 L407.5,280.7 L407.8,280.4 L408.0,280.4 L408.2,280.7 L408.5,280.7 L408.8,280.4 L409.0,280.5 L409.2,280.7 L409.5,280.5 L409.8,280.7 L410.0,280.6 L410.2,280.4 L410.5,280.5 L410.8,280.6 L411.0,280.6 L411.2,280.7 L411.5,280.5 L411.8,280.7 L412.0,280.5 L412.2,280.7 L412.5,280.6 L412.8,280.6 L413.0,280.6 L413.2,280.7 L413.5,280.8 L413.8,280.7 L414.0,280.6 L414.2,280.5 L414.5,280.4 L414.8,280.8 L415.0,280.7 L415.2,280.7 L415.5,280.5 L415.8,280.6 L416.0,280.8 L416.2,280.7 L416.5,280.6 L416.8,280.5 L417.0,280.6 L417.2,280.8 L417.5,280.5 L417.8,280.7 L418.0,280.6 L418.2,280.8 L418.5,280.7 L418.8,280.5 L419.0,280.4 L419.2,280.5 L419.5,280.6 L419.8,280.6 L420.0,280.7 L420.2,280.8 L420.5,280.4 L420.8,280.7 L421.0,280.7 L421.2,280.7 L421.5,280.6 L421.8,280.5 L422.0,280.7 L422.2,280.7 L422.5,280.7 L422.8,280.8 L423.0,280.5 L423.2,280.4 L423.5,280.6 L423.8,280.7 L424.0,280.5 L424.2,280.7 L424.5,280.8 L424.8,280.5 L425.0,280.6 L425.2,280.7 L425.5,280.6 L425.8,280.5 L426.0,280.5 L426.2,280.7 L426.5,280.7 L426.8,280.6 L427.0,280.4 L427.2,280.6 L427.5,280.5 L427.8,280.2 L428.0,280.1 L428.2,279.9 L428.5,279.6 L428.8,279.0 L429.0,278.7 L429.2,278.6 L429.5,278.4 L429.8,278.5 L430.0,278.8 L430.2,279.4 L430.5,279.6 L430.8,280.0 L431.0,280.2 L431.2,280.4 L431.5,280.3 L431.8,280.4 L432.0,280.8 L432.2,280.5 L432.5,280.4 L432.8,280.6 L433.0,280.7 L433.2,280.5 L433.5,280.6 L433.8,280.5 L434.0,280.6 L434.2,280.4 L434.5,280.4 L434.8,280.8 L435.0,280.7 L435.2,280.6 L435.5,280.6 L435.8,280.5 L436.0,280.7 L436.2,280.6 L436.5,280.8 L436.8,280.7 L437.0,280.7 L437.2,280.8 L437.5,280.5 L437.8,280.4 L438.0,280.5 L438.2,280.5 L438.5,280.4 L438.8,280.4 L439.0,280.6 L439.2,280.7 L439.5,280.6 L439.8,280.8 L440.0,280.8 L440.2,280.4 L440.5,280.6 L440.8,280.5 L441.0,280.4 L441.2,280.8 L441.5,280.5 L441.8,280.6 L442.0,280.6 L442.2,280.8 L442.5,280.7 L442.8,280.5 L443.0,280.6 L443.2,280.4 L443.5,280.8 L443.8,280.8 L444.0,280.5 L444.2,280.4 L444.5,280.5 L444.8,280.5 L445.0,280.6 L445.2,280.5 L445.5,280.3 L445.8,279.6 L446.0,279.3 L446.2,278.4 L446.5,277.2 L446.8,276.0 L447.0,274.2 L447.2,273.1 L447.5,272.8 L447.8,272.9 L448.0,273.5 L448.2,274.6 L448.5,276.1 L448.8,277.5 L449.0,278.4 L449.2,279.3 L449.5,279.8 L449.8,280.1 L450.0,280.4 L450.2,280.4 L450.5,280.4 L450.8,280.4 L451.0,280.6 L451.2,280.4 L451.5,280.7 L451.8,280.5 L452.0,280.4 L452.2,280.7 L452.5,280.5 L452.8,280.8 L453.0,280.7 L453.2,280.7 L453.5,280.4 L453.8,280.6 L454.0,280.4 L454.2,280.8 L454.5,280.7 L454.8,280.6 L455.0,280.6 L455.2,280.5 L455.5,280.7 L455.8,280.6 L456.0,280.6 L456.2,280.4 L456.5,280.5 L456.8,280.4 L457.0,280.7 L457.2,280.6 L457.5,280.4 L457.8,280.7 L458.0,280.5 L458.2,280.5 L458.5,280.4 L458.8,280.4 L459.0,280.6 L459.2,280.4 L459.5,280.2 L459.8,280.0 L460.0,279.5 L460.2,279.0 L460.5,277.7 L460.8,276.6 L461.0,274.5 L461.2,273.0 L461.5,271.1 L461.8,269.5 L462.0,268.8 L462.2,268.8 L462.5,269.7 L462.8,271.1 L463.0,272.9 L463.2,274.9 L463.5,276.4 L463.8,277.4 L464.0,277.7 L464.2,278.1 L464.5,278.3 L464.8,277.7 L465.0,277.8 L465.2,277.4 L465.5,277.6 L465.8,277.3 L466.0,277.9 L466.2,278.1 L466.5,278.4 L466.8,278.8 L467.0,279.6 L467.2,279.8 L467.5,279.9 L467.8,280.2 L468.0,280.5 L468.2,280.3 L468.5,280.5 L468.8,280.4 L469.0,280.4 L469.2,280.7 L469.5,280.7 L469.8,280.5 L470.0,280.4 L470.2,280.4 L470.5,280.6 L470.8,280.6 L471.0,280.5 L471.2,280.5 L471.5,280.6 L471.8,280.7 L472.0,280.7 L472.2,280.6 L472.5,280.5 L472.8,280.4 L473.0,280.7 L473.2,280.6 L473.5,280.7 L473.8,280.4 L474.0,280.7 L474.2,280.5 L474.5,280.7 L474.8,280.7 L475.0,280.6 L475.2,280.4 L475.5,280.8 L475.8,280.6 L476.0,280.7 L476.2,280.5 L476.5,280.5 L476.8,280.7 L477.0,280.5 L477.2,280.5 L477.5,280.5 L477.8,280.6 L478.0,280.4 L478.2,280.6 L478.5,280.6 L478.8,280.6 L479.0,280.4 L479.2,280.7 L479.5,280.7 L479.8,280.7 L480.0,280.5 L480.2,280.7 L480.5,280.5 L480.8,280.7 L481.0,280.4 L481.2,280.7 L481.5,280.8 L481.8,280.6 L482.0,280.6 L482.2,280.6 L482.5,280.6 L482.8,280.4 L483.0,280.8 L483.2,280.5 L483.5,280.5 L483.8,280.4 L484.0,280.5 L484.2,280.7 L484.5,280.4 L484.8,280.4 L485.0,280.7 L485.2,280.5 L485.5,280.4 L485.8,280.6 L486.0,280.6 L486.2,280.6 L486.5,280.7 L486.8,280.4 L487.0,280.7 L487.2,280.7 L487.5,280.4 L487.8,280.4 L488.0,280.6 L488.2,280.6 L488.5,280.5 L488.8,280.4 L489.0,280.6 L489.2,280.5 L489.5,280.6 L489.8,280.7 L490.0,280.5 L490.2,280.6 L490.5,280.7 L490.8,280.5 L491.0,280.7 L491.2,280.8 L491.5,280.6 L491.8,280.6 L492.0,280.7 L492.2,280.6 L492.5,280.6 L492.8,280.8 L493.0,280.7 L493.2,280.5 L493.5,280.5 L493.8,280.5 L494.0,280.6 L494.2,280.8 L494.5,280.7 L494.8,280.8 L495.0,280.7 L495.2,280.7 L495.5,280.4 L495.8,280.6 L496.0,280.8 L496.2,280.8 L496.5,280.5 L496.8,280.6 L497.0,280.7 L497.2,280.5 L497.5,280.6 L497.8,280.4 L498.0,280.6 L498.2,280.6 L498.5,280.4 L498.8,280.5 L499.0,280.8 L499.2,280.7 L499.5,280.8 L499.8,280.7 L500.0,280.7 L500.2,280.8 L500.5,280.8 L500.8,280.4 L501.0,280.7 L501.2,280.5 L501.5,280.7 L501.8,280.5 L502.0,280.6 L502.2,280.8 L502.5,280.6 L502.8,280.5 L503.0,280.6 L503.2,280.6 L503.5,280.8 L503.8,280.5 L504.0,280.5 L504.2,280.7 L504.5,280.4 L504.8,280.6 L505.0,280.8 L505.2,280.6 L505.5,280.5 L505.8,280.6 L506.0,280.6 L506.2,280.5 L506.5,280.4 L506.8,280.5 L507.0,280.5 L507.2,280.6 L507.5,280.5 L507.8,280.5 L508.0,280.4 L508.2,280.6 L508.5,280.7 L508.8,280.6 L509.0,280.6 L509.2,280.7 L509.5,280.5 L509.8,280.7 L510.0,280.6 L510.2,280.6 L510.5,280.6 L510.8,280.6 L511.0,280.5 L511.2,280.5 L511.5,280.5 L511.8,280.6 L512.0,280.6 L512.2,280.6 L512.5,280.4 L512.8,280.5 L513.0,280.7 L513.2,280.5 L513.5,280.6 L513.8,280.6 L514.0,280.5 L514.2,280.8 L514.5,280.5 L514.8,280.7 L515.0,280.5 L515.2,280.4 L515.5,280.7 L515.8,280.6 L516.0,280.4 L516.2,280.6 L516.5,280.6 L516.8,280.7 L517.0,280.4 L517.2,280.5 L517.5,280.8 L517.8,280.7 L518.0,280.5 L518.2,280.5 L518.5,280.5 L518.8,280.7 L519.0,280.6 L519.2,280.7 L519.5,280.7 L519.8,280.6 L520.0,280.7 L520.2,280.7 L520.5,280.7 L520.8,280.6 L521.0,280.7 L521.2,280.7 L521.5,280.8 L521.8,280.4 L522.0,280.7 L522.2,280.4 L522.5,280.7 L522.8,280.6 L523.0,280.6 L523.2,280.8 L523.5,280.6 L523.8,280.6 L524.0,280.7 L524.2,280.7 L524.5,280.6 L524.8,280.5 L525.0,280.5 L525.2,280.5 L525.5,280.5 L525.8,280.3 L526.0,280.2 L526.2,280.2 L526.5,280.0 L526.8,279.8 L527.0,279.9 L527.2,279.8 L527.5,279.6 L527.8,279.5 L528.0,279.4 L528.2,279.4 L528.5,279.4 L528.8,279.7 L529.0,279.8 L529.2,279.8 L529.5,280.2 L529.8,280.1 L530.0,280.4 L530.2,280.5 L530.5,280.6 L530.8,280.4 L531.0,280.5 L531.2,280.7 L531.5,280.4 L531.8,280.4 L532.0,280.6 L532.2,280.6 L532.5,280.8 L532.8,280.7 L533.0,280.6 L533.2,280.8 L533.5,280.6 L533.8,280.6 L534.0,280.7 L534.2,280.6 L534.5,280.5 L534.8,280.6 L535.0,280.5 L535.2,280.8 L535.5,280.7 L535.8,280.6 L536.0,280.4 L536.2,280.5 L536.5,280.6 L536.8,280.6 L537.0,280.6 L537.2,280.8 L537.5,280.8 L537.8,280.6 L538.0,280.6 L538.2,280.6 L538.5,280.8" fill="none" stroke="#00e400" stroke-width="0.9"/>
  <path d="M1.0,272.8 L1.2,273.2 L1.5,273.6 L1.8,273.3 L2.0,273.6 L2.2,274.4 L2.5,274.4 L2.8,274.3 L3.0,274.1 L3.2,275.0 L3.5,275.0 L3.8,275.3 L4.0,275.6 L4.2,275.6 L4.5,275.4 L4.8,275.3 L5.0,275.5 L5.2,275.8 L5.5,276.0 L5.8,275.8 L6.0,275.9 L6.2,276.4 L6.5,276.5 L6.8,276.4 L7.0,277.1 L7.2,276.8 L7.5,276.4 L7.8,276.8 L8.0,277.2 L8.2,276.9 L8.5,277.3 L8.8,276.8 L9.0,277.1 L9.2,277.7 L9.5,277.5 L9.8,277.7 L10.0,277.3 L10.2,277.7 L10.5,277.8 L10.8,277.6 L11.0,278.0 L11.2,277.9 L11.5,278.4 L11.8,278.1 L12.0,278.0 L12.2,277.8 L12.5,277.9 L12.8,278.4 L13.0,277.9 L13.2,277.9 L13.5,278.0 L13.8,278.4 L14.0,278.7 L14.2,278.6 L14.5,278.8 L14.8,278.2 L15.0,278.1 L15.2,278.9 L15.5,278.5 L15.8,278.9 L16.0,278.6 L16.2,278.5 L16.5,278.6 L16.8,278.5 L17.0,279.2 L17.2,278.9 L17.5,278.8 L17.8,278.9 L18.0,278.8 L18.2,278.6 L18.5,279.4 L18.8,279.1 L19.0,279.5 L19.2,279.0 L19.5,279.2 L19.8,278.9 L20.0,278.7 L20.2,279.5 L20.5,279.5 L20.8,279.0 L21.0,279.6 L21.2,279.5 L21.5,279.1 L21.8,279.4 L22.0,279.7 L22.2,279.3 L22.5,279.7 L22.8,279.1 L23.0,279.3 L23.2,279.6 L23.5,279.1 L23.8,279.2 L24.0,279.8 L24.2,279.4 L24.5,279.7 L24.8,279.2 L25.0,279.2 L25.2,279.4 L25.5,279.2 L25.8,279.9 L26.0,279.3 L26.2,279.6 L26.5,279.2 L26.8,279.6 L27.0,279.5 L27.2,279.5 L27.5,279.2 L27.8,279.3 L28.0,279.9 L28.2,279.5 L28.5,279.4 L28.8,279.4 L29.0,279.5 L29.2,279.4 L29.5,279.3 L29.8,279.8 L30.0,279.6 L30.2,279.4 L30.5,279.9 L30.8,279.4 L31.0,279.5 L31.2,280.0 L31.5,279.4 L31.8,279.7 L32.0,280.1 L32.2,280.1 L32.5,279.5 L32.8,279.7 L33.0,280.0 L33.2,279.7 L33.5,280.2 L33.8,279.6 L34.0,280.2 L34.2,279.8 L34.5,279.6 L34.8,279.8 L35.0,279.5 L35.2,280.1 L35.5,279.7 L35.8,280.2 L36.0,280.0 L36.2,279.8 L36.5,279.7 L36.8,280.0 L37.0,279.7 L37.2,280.3 L37.5,279.6 L37.8,279.9 L38.0,280.0 L38.2,279.7 L38.5,280.2 L38.8,279.9 L39.0,280.1 L39.2,280.0 L39.5,279.8 L39.8,279.9 L40.0,279.6 L40.2,279.7 L40.5,280.3 L40.8,279.8 L41.0,280.2 L41.2,279.7 L41.5,280.1 L41.8,279.9 L42.0,280.0 L42.2,279.9 L42.5,279.6 L42.8,279.9 L43.0,279.8 L43.2,279.7 L43.5,280.3 L43.8,279.9 L44.0,280.0 L44.2,280.4 L44.5,280.3 L44.8,280.4 L45.0,280.4 L45.2,279.8 L45.5,279.9 L45.8,279.7 L46.0,280.3 L46.2,280.3 L46.5,280.0 L46.8,280.0 L47.0,280.3 L47.2,280.3 L47.5,279.9 L47.8,280.4 L48.0,280.0 L48.2,280.3 L48.5,279.9 L48.8,279.8 L49.0,280.5 L49.2,280.4 L49.5,280.4 L49.8,279.8 L50.0,279.8 L50.2,279.9 L50.5,279.9 L50.8,280.0 L51.0,280.1 L51.2,279.8 L51.5,280.0 L51.8,280.3 L52.0,279.9 L52.2,280.5 L52.5,280.3 L52.8,280.4 L53.0,280.0 L53.2,280.2 L53.5,280.4 L53.8,280.1 L54.0,279.8 L54.2,280.5 L54.5,280.5 L54.8,280.0 L55.0,279.8 L55.2,280.6 L55.5,280.3 L55.8,279.8 L56.0,280.0 L56.2,279.9 L56.5,280.5 L56.8,280.0 L57.0,280.6 L57.2,280.5 L57.5,279.9 L57.8,280.4 L58.0,280.2 L58.2,280.5 L58.5,280.6 L58.8,280.1 L59.0,279.9 L59.2,280.7 L59.5,280.2 L59.8,280.7 L60.0,280.5 L60.2,280.5 L60.5,280.6 L60.8,280.4 L61.0,280.3 L61.2,279.9 L61.5,280.5 L61.8,280.2 L62.0,280.3 L62.2,280.7 L62.5,280.0 L62.8,280.6 L63.0,279.9 L63.2,280.5 L63.5,280.6 L63.8,280.1 L64.0,280.4 L64.2,280.8 L64.5,280.5 L64.8,280.4 L65.0,280.1 L65.2,279.9 L65.5,280.2 L65.8,280.3 L66.0,280.1 L66.2,280.2 L66.5,280.0 L66.8,280.5 L67.0,280.5 L67.2,280.1 L67.5,280.1 L67.8,280.4 L68.0,280.3 L68.2,280.8 L68.5,280.2 L68.8,280.2 L69.0,280.7 L69.2,280.1 L69.5,280.4 L69.8,280.2 L70.0,280.7 L70.2,280.4 L70.5,280.6 L70.8,280.1 L71.0,280.5 L71.2,280.5 L71.5,280.4 L71.8,280.6 L72.0,280.7 L72.2,280.0 L72.5,280.2 L72.8,280.3 L73.0,280.1 L73.2,280.0 L73.5,280.2 L73.8,280.1 L74.0,280.6 L74.2,280.4 L74.5,280.1 L74.8,280.3 L75.0,280.4 L75.2,280.3 L75.5,280.1 L75.8,280.0 L76.0,280.0 L76.2,280.9 L76.5,280.6 L76.8,280.0 L77.0,280.6 L77.2,280.9 L77.5,280.5 L77.8,280.1 L78.0,280.4 L78.2,280.4 L78.5,280.2 L78.8,280.5 L79.0,280.0 L79.2,280.8 L79.5,280.6 L79.8,280.6 L80.0,280.8 L80.2,280.6 L80.5,280.2 L80.8,280.2 L81.0,280.1 L81.2,280.0 L81.5,280.7 L81.8,280.8 L82.0,280.3 L82.2,280.2 L82.5,280.6 L82.8,280.8 L83.0,280.8 L83.2,280.2 L83.5,280.7 L83.8,280.8 L84.0,280.7 L84.2,280.3 L84.5,280.2 L84.8,280.8 L85.0,280.3 L85.2,280.3 L85.5,280.5 L85.8,280.4 L86.0,280.8 L86.2,280.2 L86.5,280.1 L86.8,280.5 L87.0,280.6 L87.2,280.8 L87.5,280.7 L87.8,280.8 L88.0,280.9 L88.2,280.5 L88.5,280.5 L88.8,280.2 L89.0,280.3 L89.2,280.6 L89.5,280.1 L89.8,280.7 L90.0,280.2 L90.2,280.4 L90.5,280.9 L90.8,280.1 L91.0,280.1 L91.2,280.4 L91.5,280.2 L91.8,280.7 L92.0,280.0 L92.2,280.8 L92.5,280.8 L92.8,280.8 L93.0,280.4 L93.2,280.3 L93.5,280.6 L93.8,280.5 L94.0,280.4 L94.2,280.4 L94.5,280.4 L94.8,280.7 L95.0,280.8 L95.2,280.9 L95.5,280.2 L95.8,280.3 L96.0,280.5 L96.2,280.6 L96.5,280.4 L96.8,280.2 L97.0,280.1 L97.2,280.4 L97.5,280.5 L97.8,280.9 L98.0,280.9 L98.2,280.8 L98.5,280.9 L98.8,280.9 L99.0,280.6 L99.2,280.8 L99.5,280.1 L99.8,280.7 L100.0,280.6 L100.2,280.3 L100.5,280.6 L100.8,280.9 L101.0,280.5 L101.2,280.7 L101.5,280.3 L101.8,280.4 L102.0,280.9 L102.2,280.1 L102.5,280.2 L102.8,280.7 L103.0,280.5 L103.2,280.2 L103.5,280.7 L103.8,280.4 L104.0,280.6 L104.2,280.5 L104.5,280.6 L104.8,280.6 L105.0,280.4 L105.2,280.2 L105.5,280.2 L105.8,280.9 L106.0,280.6 L106.2,280.2 L106.5,280.9 L106.8,280.3 L107.0,280.2 L107.2,280.6 L107.5,280.3 L107.8,280.5 L108.0,280.6 L108.2,280.3 L108.5,280.6 L108.8,280.2 L109.0,280.6 L109.2,280.6 L109.5,280.2 L109.8,280.5 L110.0,280.2 L110.2,280.5 L110.5,280.9 L110.8,280.6 L111.0,280.7 L111.2,280.8 L111.5,280.2 L111.8,281.0 L112.0,280.7 L112.2,280.2 L112.5,280.8 L112.8,280.4 L113.0,280.3 L113.2,281.0 L113.5,280.6 L113.8,280.8 L114.0,280.2 L114.2,280.8 L114.5,280.2 L114.8,280.3 L115.0,280.4 L115.2,280.1 L115.5,280.6 L115.8,280.3 L116.0,280.4 L116.2,280.7 L116.5,280.5 L116.8,280.9 L117.0,280.7 L117.2,280.9 L117.5,280.6 L117.8,280.9 L118.0,280.9 L118.2,280.3 L118.5,280.8 L118.8,280.4 L119.0,280.8 L119.2,280.7 L119.5,280.9 L119.8,280.2 L120.0,280.4 L120.2,280.8 L120.5,281.0 L120.8,280.8 L121.0,280.1 L121.2,280.7 L121.5,280.2 L121.8,280.6 L122.0,280.8 L122.2,280.2 L122.5,280.9 L122.8,280.7 L123.0,280.3 L123.2,280.3 L123.5,280.5 L123.8,280.9 L124.0,280.6 L124.2,280.2 L124.5,280.1 L124.8,280.2 L125.0,280.8 L125.2,280.3 L125.5,280.6 L125.8,280.4 L126.0,280.7 L126.2,280.5 L126.5,280.2 L126.8,280.9 L127.0,280.6 L127.2,280.7 L127.5,280.8 L127.8,281.0 L128.0,280.1 L128.2,280.4 L128.5,280.3 L128.8,280.6 L129.0,280.9 L129.2,280.8 L129.5,280.2 L129.8,280.3 L130.0,280.9 L130.2,280.7 L130.5,280.5 L130.8,280.5 L131.0,280.3 L131.2,280.9 L131.5,280.5 L131.8,280.9 L132.0,280.7 L132.2,280.2 L132.5,280.4 L132.8,280.3 L133.0,280.9 L133.2,280.7 L133.5,280.2 L133.8,280.3 L134.0,280.4 L134.2,280.5 L134.5,280.6 L134.8,280.5 L135.0,280.4 L135.2,280.1 L135.5,280.6 L135.8,280.4 L136.0,280.1 L136.2,280.5 L136.5,281.0 L136.8,280.2 L137.0,280.3 L137.2,280.7 L137.5,280.4 L137.8,280.4 L138.0,280.6 L138.2,280.4 L138.5,280.6 L138.8,280.6 L139.0,281.0 L139.2,281.0 L139.5,280.2 L139.8,280.6 L140.0,280.8 L140.2,280.9 L140.5,280.8 L140.8,280.7 L141.0,280.7 L141.2,280.5 L141.5,280.4 L141.8,280.8 L142.0,280.9 L142.2,281.0 L142.5,280.7 L142.8,280.4 L143.0,280.8 L143.2,280.8 L143.5,280.6 L143.8,280.7 L144.0,280.4 L144.2,280.6 L144.5,280.5 L144.8,280.2 L145.0,280.4 L145.2,280.4 L145.5,281.0 L145.8,280.6 L146.0,280.5 L146.2,280.4 L146.5,280.3 L146.8,280.4 L147.0,280.3 L147.2,280.1 L147.5,280.9 L147.8,280.5 L148.0,280.5 L148.2,280.6 L148.5,280.4 L148.8,280.3 L149.0,280.2 L149.2,280.4 L149.5,280.4 L149.8,280.8 L150.0,280.6 L150.2,281.0 L150.5,280.4 L150.8,281.0 L151.0,280.7 L151.2,280.2 L151.5,280.3 L151.8,280.7 L152.0,281.0 L152.2,280.5 L152.5,280.8 L152.8,280.5 L153.0,280.9 L153.2,280.2 L153.5,280.6 L153.8,280.9 L154.0,280.4 L154.2,280.4 L154.5,280.2 L154.8,280.3 L155.0,280.4 L155.2,280.8 L155.5,280.3 L155.8,280.5 L156.0,280.3 L156.2,280.7 L156.5,280.9 L156.8,280.7 L157.0,280.3 L157.2,280.8 L157.5,281.0 L157.8,280.7 L158.0,280.2 L158.2,280.9 L158.5,280.9 L158.8,280.4 L159.0,280.3 L159.2,280.3 L159.5,280.6 L159.8,280.9 L160.0,280.7 L160.2,281.0 L160.5,280.3 L160.8,280.4 L161.0,280.8 L161.2,280.7 L161.5,280.5 L161.8,280.7 L162.0,280.4 L162.2,280.2 L162.5,280.5 L162.8,280.2 L163.0,280.7 L163.2,280.4 L163.5,280.6 L163.8,280.7 L164.0,280.4 L164.2,280.5 L164.5,280.1 L164.8,281.0 L165.0,280.6 L165.2,281.0 L165.5,280.2 L165.8,280.7 L166.0,280.8 L166.2,280.4 L166.5,280.1 L166.8,280.1 L167.0,279.9 L167.2,280.1 L167.5,278.9 L167.8,278.8 L168.0,277.5 L168.2,276.5 L168.5,275.6 L168.8,274.8 L169.0,274.6 L169.2,274.8 L169.5,275.3 L169.8,276.7 L170.0,277.3 L170.2,278.7 L170.5,279.5 L170.8,280.1 L171.0,280.0 L171.2,280.6 L171.5,280.9 L171.8,280.5 L172.0,280.4 L172.2,280.6 L172.5,281.0 L172.8,280.2 L173.0,280.1 L173.2,280.6 L173.5,280.7 L173.8,280.8 L174.0,280.5 L174.2,281.0 L174.5,280.3 L174.8,280.8 L175.0,280.2 L175.2,280.2 L175.5,280.3 L175.8,280.2 L176.0,280.6 L176.2,280.6 L176.5,280.3 L176.8,281.0 L177.0,280.5 L177.2,280.3 L177.5,280.3 L177.8,280.8 L178.0,281.0 L178.2,280.3 L178.5,280.2 L178.8,280.8 L179.0,280.4 L179.2,281.0 L179.5,280.6 L179.8,280.7 L180.0,280.4 L180.2,280.9 L180.5,280.6 L180.8,280.4 L181.0,281.0 L181.2,280.2 L181.5,280.8 L181.8,280.2 L182.0,280.7 L182.2,280.5 L182.5,280.9 L182.8,280.2 L183.0,280.6 L183.2,280.5 L183.5,281.0 L183.8,281.0 L184.0,280.7 L184.2,280.3 L184.5,280.4 L184.8,280.4 L185.0,280.5 L185.2,280.3 L185.5,280.3 L185.8,280.8 L186.0,280.7 L186.2,280.4 L186.5,281.0 L186.8,280.3 L187.0,280.7 L187.2,280.3 L187.5,280.9 L187.8,280.9 L188.0,280.4 L188.2,280.8 L188.5,280.9 L188.8,280.4 L189.0,280.4 L189.2,280.6 L189.5,280.9 L189.8,280.3 L190.0,280.8 L190.2,280.7 L190.5,280.5 L190.8,280.7 L191.0,280.9 L191.2,280.3 L191.5,280.9 L191.8,280.5 L192.0,280.8 L192.2,280.9 L192.5,280.3 L192.8,280.9 L193.0,281.0 L193.2,280.4 L193.5,280.2 L193.8,280.2 L194.0,281.0 L194.2,280.1 L194.5,281.0 L194.8,280.3 L195.0,280.8 L195.2,280.2 L195.5,280.3 L195.8,280.8 L196.0,280.2 L196.2,280.4 L196.5,281.0 L196.8,280.8 L197.0,280.9 L197.2,281.0 L197.5,280.2 L197.8,280.4 L198.0,280.9 L198.2,280.8 L198.5,280.2 L198.8,280.6 L199.0,280.3 L199.2,280.5 L199.5,280.2 L199.8,280.2 L200.0,281.0 L200.2,280.4 L200.5,280.9 L200.8,280.2 L201.0,280.6 L201.2,280.3 L201.5,280.5 L201.8,280.3 L202.0,280.8 L202.2,280.3 L202.5,280.8 L202.8,280.6 L203.0,280.2 L203.2,280.5 L203.5,280.6 L203.8,281.0 L204.0,280.4 L204.2,280.3 L204.5,281.0 L204.8,280.9 L205.0,280.8 L205.2,280.4 L205.5,280.3 L205.8,280.4 L206.0,280.2 L206.2,280.2 L206.5,280.6 L206.8,280.5 L207.0,280.6 L207.2,280.5 L207.5,280.1 L207.8,280.7 L208.0,280.7 L208.2,280.6 L208.5,280.6 L208.8,280.7 L209.0,281.0 L209.2,280.9 L209.5,280.8 L209.8,280.5 L210.0,280.4 L210.2,280.5 L210.5,281.0 L210.8,280.5 L211.0,280.4 L211.2,280.5 L211.5,280.2 L211.8,281.0 L212.0,280.1 L212.2,280.6 L212.5,280.9 L212.8,280.3 L213.0,280.6 L213.2,280.4 L213.5,280.3 L213.8,280.2 L214.0,280.1 L214.2,280.8 L214.5,280.7 L214.8,280.8 L215.0,280.0 L215.2,280.6 L215.5,280.2 L215.8,280.4 L216.0,280.1 L216.2,279.5 L216.5,279.3 L216.8,277.0 L217.0,275.2 L217.2,271.4 L217.5,265.2 L217.8,257.5 L218.0,248.2 L218.2,237.1 L218.5,227.5 L218.8,219.7 L219.0,215.3 L219.2,216.0 L219.5,220.7 L219.8,229.2 L220.0,239.5 L220.2,250.0 L220.5,258.9 L220.8,266.7 L221.0,272.0 L221.2,275.3 L221.5,277.9 L221.8,278.9 L222.0,280.1 L222.2,280.1 L222.5,280.5 L222.8,280.4 L223.0,280.4 L223.2,280.2 L223.5,280.1 L223.8,280.8 L224.0,280.5 L224.2,280.5 L224.5,280.5 L224.8,280.8 L225.0,280.3 L225.2,280.2 L225.5,280.8 L225.8,280.5 L226.0,280.7 L226.2,280.8 L226.5,280.9 L226.8,280.9 L227.0,280.1 L227.2,280.4 L227.5,280.9 L227.8,280.8 L228.0,280.2 L228.2,280.2 L228.5,280.3 L228.8,280.2 L229.0,280.4 L229.2,280.8 L229.5,280.6 L229.8,280.5 L230.0,280.2 L230.2,280.5 L230.5,281.0 L230.8,280.8 L231.0,280.5 L231.2,280.6 L231.5,280.8 L231.8,280.8 L232.0,280.3 L232.2,280.7 L232.5,280.5 L232.8,280.6 L233.0,280.3 L233.2,280.5 L233.5,280.4 L233.8,280.5 L234.0,280.2 L234.2,280.3 L234.5,280.6 L234.8,280.2 L235.0,280.3 L235.2,280.8 L235.5,280.4 L235.8,280.4 L236.0,280.4 L236.2,280.9 L236.5,280.2 L236.8,280.7 L237.0,280.9 L237.2,280.3 L237.5,280.5 L237.8,280.9 L238.0,280.7 L238.2,280.5 L238.5,280.2 L238.8,280.5 L239.0,280.5 L239.2,280.8 L239.5,280.4 L239.8,280.5 L240.0,280.7 L240.2,280.9 L240.5,280.5 L240.8,280.5 L241.0,280.7 L241.2,281.0 L241.5,280.3 L241.8,281.0 L242.0,280.8 L242.2,280.5 L242.5,280.7 L242.8,280.4 L243.0,280.2 L243.2,280.8 L243.5,280.5 L243.8,280.6 L244.0,280.6 L244.2,281.0 L244.5,280.8 L244.8,280.2 L245.0,280.7 L245.2,280.6 L245.5,280.6 L245.8,280.9 L246.0,280.5 L246.2,280.6 L246.5,280.9 L246.8,280.5 L247.0,280.6 L247.2,280.6 L247.5,280.9 L247.8,280.7 L248.0,280.8 L248.2,280.5 L248.5,280.2 L248.8,280.8 L249.0,280.6 L249.2,280.8 L249.5,280.8 L249.8,280.3 L250.0,280.3 L250.2,280.2 L250.5,280.9 L250.8,280.2 L251.0,280.2 L251.2,280.8 L251.5,280.7 L251.8,280.2 L252.0,280.8 L252.2,280.8 L252.5,280.6 L252.8,280.2 L253.0,280.8 L253.2,280.5 L253.5,280.7 L253.8,281.0 L254.0,280.9 L254.2,280.9 L254.5,280.3 L254.8,280.4 L255.0,280.6 L255.2,280.2 L255.5,281.0 L255.8,280.4 L256.0,280.4 L256.2,280.4 L256.5,280.4 L256.8,280.9 L257.0,280.6 L257.2,280.6 L257.5,280.5 L257.8,280.2 L258.0,280.4 L258.2,280.9 L258.5,280.9 L258.8,280.9 L259.0,280.4 L259.2,280.3 L259.5,280.2 L259.8,280.6 L260.0,280.5 L260.2,280.6 L260.5,280.6 L260.8,280.7 L261.0,280.5 L261.2,280.9 L261.5,280.3 L261.8,281.0 L262.0,280.6 L262.2,280.2 L262.5,280.4 L262.8,280.6 L263.0,280.5 L263.2,280.7 L263.5,280.4 L263.8,280.4 L264.0,280.9 L264.2,280.4 L264.5,280.8 L264.8,280.9 L265.0,280.7 L265.2,280.5 L265.5,281.0 L265.8,280.5 L266.0,280.9 L266.2,280.2 L266.5,280.5 L266.8,280.7 L267.0,280.2 L267.2,280.9 L267.5,280.2 L267.8,280.6 L268.0,280.2 L268.2,280.8 L268.5,280.3 L268.8,280.1 L269.0,279.3 L269.2,278.7 L269.5,277.6 L269.8,276.0 L270.0,274.7 L270.2,274.2 L270.5,273.0 L270.8,273.8 L271.0,273.8 L271.2,274.8 L271.5,276.1 L271.8,277.9 L272.0,279.1 L272.2,279.4 L272.5,280.1 L272.8,280.0 L273.0,280.8 L273.2,280.7 L273.5,280.2 L273.8,280.2 L274.0,280.7 L274.2,280.2 L274.5,280.9 L274.8,280.4 L275.0,280.3 L275.2,280.7 L275.5,280.4 L275.8,280.6 L276.0,280.3 L276.2,281.0 L276.5,280.4 L276.8,280.9 L277.0,280.3 L277.2,280.9 L277.5,281.0 L277.8,280.5 L278.0,280.2 L278.2,280.5 L278.5,280.7 L278.8,280.3 L279.0,280.6 L279.2,280.2 L279.5,280.6 L279.8,280.8 L280.0,280.5 L280.2,280.8 L280.5,280.2 L280.8,280.9 L281.0,280.3 L281.2,281.0 L281.5,281.0 L281.8,281.0 L282.0,280.6 L282.2,280.4 L282.5,280.5 L282.8,280.8 L283.0,280.6 L283.2,281.0 L283.5,280.2 L283.8,280.6 L284.0,280.9 L284.2,280.7 L284.5,280.6 L284.8,280.2 L285.0,280.3 L285.2,280.4 L285.5,280.9 L285.8,280.9 L286.0,280.3 L286.2,281.0 L286.5,280.2 L286.8,280.7 L287.0,281.0 L287.2,280.5 L287.5,281.0 L287.8,280.7 L288.0,280.2 L288.2,280.4 L288.5,280.5 L288.8,280.4 L289.0,280.8 L289.2,280.3 L289.5,280.9 L289.8,280.4 L290.0,280.2 L290.2,280.6 L290.5,280.2 L290.8,280.6 L291.0,280.8 L291.2,280.7 L291.5,280.6 L291.8,280.2 L292.0,280.6 L292.2,280.2 L292.5,280.7 L292.8,280.3 L293.0,280.7 L293.2,280.4 L293.5,280.5 L293.8,280.7 L294.0,280.3 L294.2,280.3 L294.5,281.0 L294.8,280.4 L295.0,280.8 L295.2,280.8 L295.5,280.3 L295.8,279.8 L296.0,279.3 L296.2,279.3 L296.5,277.5 L296.8,276.3 L297.0,274.6 L297.2,272.4 L297.5,271.1 L297.8,269.9 L298.0,270.1 L298.2,270.9 L298.5,272.2 L298.8,273.9 L299.0,275.9 L299.2,277.3 L299.5,278.4 L299.8,279.3 L300.0,280.4 L300.2,280.3 L300.5,280.8 L300.8,280.1 L301.0,280.9 L301.2,280.5 L301.5,280.8 L301.8,280.6 L302.0,280.7 L302.2,280.3 L302.5,280.8 L302.8,280.3 L303.0,280.4 L303.2,280.2 L303.5,280.5 L303.8,280.6 L304.0,280.4 L304.2,280.9 L304.5,280.2 L304.8,280.7 L305.0,280.4 L305.2,280.7 L305.5,280.8 L305.8,280.8 L306.0,280.2 L306.2,280.4 L306.5,280.7 L306.8,281.0 L307.0,280.2 L307.2,280.7 L307.5,280.8 L307.8,280.9 L308.0,280.5 L308.2,280.9 L308.5,280.6 L308.8,281.0 L309.0,280.2 L309.2,281.0 L309.5,280.5 L309.8,280.5 L310.0,280.2 L310.2,280.4 L310.5,280.8 L310.8,280.8 L311.0,280.3 L311.2,280.5 L311.5,280.3 L311.8,280.3 L312.0,280.3 L312.2,280.4 L312.5,281.0 L312.8,281.0 L313.0,280.9 L313.2,280.6 L313.5,280.6 L313.8,280.8 L314.0,281.0 L314.2,280.8 L314.5,280.7 L314.8,280.3 L315.0,280.7 L315.2,280.9 L315.5,280.9 L315.8,280.2 L316.0,280.8 L316.2,280.5 L316.5,280.3 L316.8,281.0 L317.0,280.8 L317.2,280.8 L317.5,280.3 L317.8,280.9 L318.0,281.0 L318.2,281.0 L318.5,280.8 L318.8,280.9 L319.0,280.9 L319.2,280.7 L319.5,280.5 L319.8,280.9 L320.0,280.8 L320.2,280.9 L320.5,280.4 L320.8,281.0 L321.0,280.6 L321.2,281.0 L321.5,280.2 L321.8,281.0 L322.0,280.8 L322.2,280.4 L322.5,280.9 L322.8,280.3 L323.0,280.3 L323.2,280.5 L323.5,280.3 L323.8,280.6 L324.0,280.9 L324.2,280.7 L324.5,280.7 L324.8,280.4 L325.0,280.7 L325.2,280.5 L325.5,280.0 L325.8,279.7 L326.0,278.7 L326.2,277.1 L326.5,275.4 L326.8,274.5 L327.0,273.4 L327.2,272.2 L327.5,272.3 L327.8,273.2 L328.0,274.3 L328.2,275.1 L328.5,277.0 L328.8,277.8 L329.0,278.8 L329.2,280.1 L329.5,280.1 L329.8,280.5 L330.0,280.4 L330.2,280.4 L330.5,280.3 L330.8,280.4 L331.0,280.9 L331.2,280.7 L331.5,280.4 L331.8,280.2 L332.0,280.4 L332.2,280.8 L332.5,280.5 L332.8,280.7 L333.0,280.9 L333.2,280.2 L333.5,280.8 L333.8,280.2 L334.0,280.9 L334.2,280.3 L334.5,280.4 L334.8,281.0 L335.0,280.5 L335.2,280.3 L335.5,280.9 L335.8,280.7 L336.0,280.9 L336.2,280.5 L336.5,280.6 L336.8,281.0 L337.0,280.6 L337.2,281.0 L337.5,280.3 L337.8,280.9 L338.0,280.3 L338.2,280.6 L338.5,280.1 L338.8,280.3 L339.0,281.0 L339.2,280.6 L339.5,280.9 L339.8,280.4 L340.0,280.5 L340.2,280.2 L340.5,280.6 L340.8,280.9 L341.0,280.6 L341.2,280.5 L341.5,281.0 L341.8,281.0 L342.0,280.7 L342.2,280.2 L342.5,280.7 L342.8,280.5 L343.0,281.0 L343.2,280.5 L343.5,280.7 L343.8,280.7 L344.0,280.5 L344.2,280.6 L344.5,280.8 L344.8,281.0 L345.0,280.6 L345.2,280.5 L345.5,281.0 L345.8,280.2 L346.0,280.9 L346.2,280.8 L346.5,280.6 L346.8,280.5 L347.0,280.8 L347.2,280.9 L347.5,280.8 L347.8,280.8 L348.0,280.2 L348.2,280.4 L348.5,280.3 L348.8,281.0 L349.0,280.9 L349.2,280.3 L349.5,280.7 L349.8,280.7 L350.0,280.2 L350.2,280.5 L350.5,280.8 L350.8,280.7 L351.0,280.4 L351.2,280.8 L351.5,280.4 L351.8,280.6 L352.0,280.5 L352.2,281.0 L352.5,280.7 L352.8,280.9 L353.0,280.7 L353.2,280.5 L353.5,281.0 L353.8,280.8 L354.0,280.8 L354.2,280.4 L354.5,280.3 L354.8,280.6 L355.0,280.8 L355.2,280.8 L355.5,280.3 L355.8,280.0 L356.0,280.2 L356.2,280.3 L356.5,279.4 L356.8,279.6 L357.0,278.7 L357.2,278.3 L357.5,277.7 L357.8,277.6 L358.0,277.4 L358.2,277.9 L358.5,278.0 L358.8,277.6 L359.0,278.1 L359.2,279.1 L359.5,278.8 L359.8,279.3 L360.0,279.6 L360.2,279.4 L360.5,279.3 L360.8,279.0 L361.0,278.2 L361.2,277.6 L361.5,275.6 L361.8,274.0 L362.0,273.4 L362.2,272.3 L362.5,272.5 L362.8,273.0 L363.0,274.3 L363.2,275.3 L363.5,276.6 L363.8,278.4 L364.0,279.1 L364.2,279.8 L364.5,280.3 L364.8,280.6 L365.0,280.3 L365.2,280.4 L365.5,280.9 L365.8,280.6 L366.0,280.4 L366.2,280.7 L366.5,280.3 L366.8,280.8 L367.0,280.1 L367.2,280.7 L367.5,280.4 L367.8,279.9 L368.0,280.0 L368.2,278.6 L368.5,277.5 L368.8,275.9 L369.0,274.7 L369.2,273.3 L369.5,272.0 L369.8,271.2 L370.0,271.8 L370.2,272.2 L370.5,273.8 L370.8,275.8 L371.0,277.6 L371.2,278.5 L371.5,279.5 L371.8,280.1 L372.0,280.1 L372.2,280.8 L372.5,280.7 L372.8,280.4 L373.0,280.5 L373.2,280.8 L373.5,280.4 L373.8,280.3 L374.0,280.9 L374.2,280.6 L374.5,280.6 L374.8,280.7 L375.0,280.9 L375.2,280.3 L375.5,280.4 L375.8,280.2 L376.0,280.5 L376.2,280.6 L376.5,280.9 L376.8,280.7 L377.0,280.7 L377.2,280.5 L377.5,280.7 L377.8,280.4 L378.0,280.9 L378.2,280.9 L378.5,280.9 L378.8,280.3 L379.0,280.7 L379.2,280.8 L379.5,280.6 L379.8,281.0 L380.0,281.0 L380.2,280.8 L380.5,280.9 L380.8,280.7 L381.0,280.9 L381.2,280.3 L381.5,280.8 L381.8,280.8 L382.0,280.7 L382.2,280.4 L382.5,280.2 L382.8,280.7 L383.0,280.9 L383.2,280.4 L383.5,280.3 L383.8,280.3 L384.0,280.2 L384.2,280.8 L384.5,281.0 L384.8,280.9 L385.0,280.5 L385.2,280.8 L385.5,280.2 L385.8,280.9 L386.0,280.4 L386.2,280.2 L386.5,280.7 L386.8,280.3 L387.0,280.4 L387.2,280.2 L387.5,280.5 L387.8,280.6 L388.0,280.9 L388.2,280.2 L388.5,280.9 L388.8,280.2 L389.0,280.3 L389.2,280.7 L389.5,280.5 L389.8,280.4 L390.0,280.7 L390.2,280.3 L390.5,280.9 L390.8,280.3 L391.0,280.9 L391.2,280.9 L391.5,280.6 L391.8,280.2 L392.0,280.8 L392.2,280.2 L392.5,280.6 L392.8,280.5 L393.0,280.2 L393.2,280.7 L393.5,280.8 L393.8,280.7 L394.0,280.5 L394.2,280.6 L394.5,280.7 L394.8,280.4 L395.0,280.9 L395.2,281.0 L395.5,280.9 L395.8,281.0 L396.0,280.4 L396.2,281.0 L396.5,280.2 L396.8,280.6 L397.0,280.3 L397.2,280.6 L397.5,280.8 L397.8,280.8 L398.0,280.6 L398.2,280.5 L398.5,280.3 L398.8,280.5 L399.0,280.4 L399.2,280.3 L399.5,280.8 L399.8,280.6 L400.0,280.5 L400.2,280.3 L400.5,280.8 L400.8,280.3 L401.0,280.4 L401.2,280.7 L401.5,280.8 L401.8,281.0 L402.0,280.8 L402.2,281.0 L402.5,281.0 L402.8,280.8 L403.0,280.8 L403.2,280.2 L403.5,280.3 L403.8,280.2 L404.0,280.9 L404.2,280.8 L404.5,280.7 L404.8,280.4 L405.0,280.5 L405.2,280.3 L405.5,280.7 L405.8,281.0 L406.0,280.4 L406.2,280.2 L406.5,280.3 L406.8,280.5 L407.0,281.0 L407.2,280.9 L407.5,280.6 L407.8,280.2 L408.0,280.2 L408.2,280.3 L408.5,280.8 L408.8,280.6 L409.0,281.0 L409.2,281.0 L409.5,280.9 L409.8,280.6 L410.0,280.9 L410.2,280.3 L410.5,280.2 L410.8,280.7 L411.0,280.6 L411.2,280.3 L411.5,280.4 L411.8,280.2 L412.0,281.0 L412.2,280.8 L412.5,281.0 L412.8,281.0 L413.0,280.5 L413.2,280.8 L413.5,280.5 L413.8,280.9 L414.0,280.9 L414.2,280.3 L414.5,280.2 L414.8,280.3 L415.0,280.7 L415.2,280.5 L415.5,280.2 L415.8,280.9 L416.0,280.9 L416.2,280.6 L416.5,280.2 L416.8,280.9 L417.0,280.6 L417.2,280.2 L417.5,280.4 L417.8,280.7 L418.0,280.9 L418.2,280.6 L418.5,280.7 L418.8,280.3 L419.0,280.4 L419.2,281.0 L419.5,280.5 L419.8,280.2 L420.0,280.7 L420.2,280.3 L420.5,280.3 L420.8,280.6 L421.0,280.7 L421.2,280.7 L421.5,280.8 L421.8,280.5 L422.0,280.2 L422.2,280.8 L422.5,280.2 L422.8,280.6 L423.0,280.5 L423.2,280.8 L423.5,280.8 L423.8,280.4 L424.0,280.7 L424.2,280.8 L424.5,280.6 L424.8,280.3 L425.0,281.0 L425.2,280.7 L425.5,280.2 L425.8,280.4 L426.0,281.0 L426.2,280.4 L426.5,280.5 L426.8,280.9 L427.0,280.9 L427.2,280.7 L427.5,280.8 L427.8,280.2 L428.0,280.2 L428.2,281.0 L428.5,280.9 L428.8,280.2 L429.0,280.2 L429.2,280.4 L429.5,281.0 L429.8,280.3 L430.0,280.8 L430.2,281.0 L430.5,280.7 L430.8,281.0 L431.0,280.4 L431.2,280.3 L431.5,280.2 L431.8,280.8 L432.0,280.2 L432.2,281.0 L432.5,280.8 L432.8,280.3 L433.0,280.9 L433.2,280.3 L433.5,280.6 L433.8,280.2 L434.0,280.8 L434.2,280.9 L434.5,281.0 L434.8,280.1 L435.0,280.9 L435.2,280.6 L435.5,280.9 L435.8,280.6 L436.0,280.7 L436.2,280.6 L436.5,280.7 L436.8,280.0 L437.0,279.8 L437.2,280.0 L437.5,279.4 L437.8,279.1 L438.0,278.2 L438.2,278.3 L438.5,277.1 L438.8,277.3 L439.0,276.9 L439.2,276.5 L439.5,276.2 L439.8,277.0 L440.0,277.0 L440.2,277.8 L440.5,278.1 L440.8,279.4 L441.0,279.5 L441.2,279.7 L441.5,279.7 L441.8,280.5 L442.0,280.7 L442.2,280.8 L442.5,280.2 L442.8,280.4 L443.0,280.4 L443.2,280.8 L443.5,280.3 L443.8,280.7 L444.0,281.0 L444.2,280.8 L444.5,280.1 L444.8,280.2 L445.0,280.2 L445.2,280.8 L445.5,280.7 L445.8,280.6 L446.0,280.6 L446.2,280.5 L446.5,280.7 L446.8,280.7 L447.0,281.0 L447.2,280.8 L447.5,280.9 L447.8,281.0 L448.0,280.9 L448.2,280.8 L448.5,280.2 L448.8,280.8 L449.0,280.9 L449.2,280.5 L449.5,280.9 L449.8,280.3 L450.0,281.0 L450.2,280.5 L450.5,280.8 L450.8,280.4 L451.0,280.4 L451.2,280.5 L451.5,280.4 L451.8,280.2 L452.0,280.5 L452.2,281.0 L452.5,280.7 L452.8,281.0 L453.0,280.8 L453.2,280.9 L453.5,281.0 L453.8,280.8 L454.0,280.4 L454.2,280.4 L454.5,280.5 L454.8,280.2 L455.0,280.4 L455.2,280.9 L455.5,281.0 L455.8,280.4 L456.0,280.8 L456.2,280.8 L456.5,280.9 L456.8,280.9 L457.0,280.6 L457.2,280.2 L457.5,280.9 L457.8,280.4 L458.0,280.7 L458.2,280.5 L458.5,280.6 L458.8,281.0 L459.0,280.3 L459.2,280.6 L459.5,280.7 L459.8,280.6 L460.0,281.0 L460.2,280.5 L460.5,281.0 L460.8,280.8 L461.0,281.0 L461.2,280.2 L461.5,280.3 L461.8,280.4 L462.0,281.0 L462.2,280.2 L462.5,280.4 L462.8,280.8 L463.0,281.0 L463.2,280.3 L463.5,280.5 L463.8,280.8 L464.0,280.8 L464.2,280.8 L464.5,280.8 L464.8,280.4 L465.0,280.4 L465.2,280.2 L465.5,280.8 L465.8,280.3 L466.0,280.4 L466.2,281.0 L466.5,280.7 L466.8,280.7 L467.0,280.7 L467.2,280.7 L467.5,280.8 L467.8,280.4 L468.0,280.2 L468.2,280.2 L468.5,280.2 L468.8,280.5 L469.0,280.3 L469.2,280.3 L469.5,280.6 L469.8,281.0 L470.0,280.8 L470.2,280.4 L470.5,280.8 L470.8,280.3 L471.0,280.2 L471.2,280.4 L471.5,280.5 L471.8,280.8 L472.0,280.5 L472.2,280.8 L472.5,280.2 L472.8,281.0 L473.0,280.5 L473.2,280.9 L473.5,280.2 L473.8,280.9 L474.0,280.4 L474.2,280.9 L474.5,280.9 L474.8,280.8 L475.0,280.4 L475.2,280.2 L475.5,280.3 L475.8,281.0 L476.0,280.3 L476.2,280.7 L476.5,280.7 L476.8,280.7 L477.0,280.3 L477.2,280.3 L477.5,280.2 L477.8,281.0 L478.0,280.5 L478.2,280.7 L478.5,280.7 L478.8,280.4 L479.0,280.2 L479.2,280.2 L479.5,280.9 L479.8,280.3 L480.0,281.0 L480.2,280.5 L480.5,280.8 L480.8,280.3 L481.0,280.9 L481.2,280.4 L481.5,280.5 L481.8,280.6 L482.0,280.2 L482.2,280.4 L482.5,280.9 L482.8,280.4 L483.0,280.5 L483.2,280.8 L483.5,280.4 L483.8,280.3 L484.0,280.3 L484.2,280.5 L484.5,280.5 L484.8,280.7 L485.0,280.6 L485.2,280.9 L485.5,280.2 L485.8,280.7 L486.0,280.9 L486.2,280.4 L486.5,280.2 L486.8,280.5 L487.0,280.3 L487.2,280.6 L487.5,280.8 L487.8,280.2 L488.0,280.3 L488.2,280.6 L488.5,280.3 L488.8,280.4 L489.0,280.5 L489.2,280.3 L489.5,280.2 L489.8,280.5 L490.0,280.6 L490.2,281.0 L490.5,280.6 L490.8,280.2 L491.0,280.3 L491.2,280.8 L491.5,280.7 L491.8,280.9 L492.0,281.0 L492.2,280.9 L492.5,280.2 L492.8,281.0 L493.0,280.6 L493.2,280.3 L493.5,280.2 L493.8,280.8 L494.0,280.1 L494.2,279.9 L494.5,279.9 L494.8,280.4 L495.0,279.8 L495.2,279.8 L495.5,279.0 L495.8,279.2 L496.0,279.0 L496.2,278.8 L496.5,279.1 L496.8,278.9 L497.0,278.8 L497.2,279.7 L497.5,279.4 L497.8,279.3 L498.0,279.4 L498.2,280.1 L498.5,280.1 L498.8,279.8 L499.0,280.3 L499.2,280.7 L499.5,280.5 L499.8,280.3 L500.0,280.6 L500.2,280.7 L500.5,280.7 L500.8,280.3 L501.0,280.9 L501.2,281.0 L501.5,280.8 L501.8,280.9 L502.0,280.5 L502.2,281.0 L502.5,280.3 L502.8,280.4 L503.0,280.7 L503.2,281.0 L503.5,280.2 L503.8,280.3 L504.0,280.2 L504.2,280.5 L504.5,280.3 L504.8,280.3 L505.0,280.8 L505.2,280.7 L505.5,281.0 L505.8,280.5 L506.0,280.8 L506.2,280.2 L506.5,281.0 L506.8,280.4 L507.0,280.6 L507.2,280.6 L507.5,281.0 L507.8,280.6 L508.0,281.0 L508.2,280.7 L508.5,280.3 L508.8,280.9 L509.0,280.3 L509.2,281.0 L509.5,280.6 L509.8,280.4 L510.0,281.0 L510.2,280.4 L510.5,280.5 L510.8,280.5 L511.0,280.8 L511.2,280.2 L511.5,280.5 L511.8,280.3 L512.0,280.9 L512.2,280.1 L512.5,280.7 L512.8,280.4 L513.0,280.6 L513.2,280.7 L513.5,280.8 L513.8,280.3 L514.0,280.4 L514.2,280.3 L514.5,281.0 L514.8,280.3 L515.0,280.3 L515.2,280.6 L515.5,280.7 L515.8,280.9 L516.0,280.2 L516.2,280.4 L516.5,280.3 L516.8,280.7 L517.0,280.6 L517.2,280.5 L517.5,280.9 L517.8,280.7 L518.0,280.9 L518.2,281.0 L518.5,280.4 L518.8,281.0 L519.0,280.5 L519.2,280.2 L519.5,281.0 L519.8,280.2 L520.0,280.2 L520.2,280.4 L520.5,280.4 L520.8,281.0 L521.0,280.9 L521.2,280.5 L521.5,280.6 L521.8,280.9 L522.0,280.9 L522.2,280.7 L522.5,280.6 L522.8,280.3 L523.0,280.4 L523.2,280.7 L523.5,280.7 L523.8,280.9 L524.0,281.0 L524.2,281.0 L524.5,280.3 L524.8,280.2 L525.0,281.0 L525.2,280.7 L525.5,280.3 L525.8,280.8 L526.0,280.4 L526.2,280.4 L526.5,280.5 L526.8,280.6 L527.0,280.8 L527.2,280.2 L527.5,280.8 L527.8,280.7 L528.0,280.6 L528.2,280.8 L528.5,280.9 L528.8,280.2 L529.0,280.6 L529.2,280.8 L529.5,280.8 L529.8,280.7 L530.0,280.3 L530.2,281.0 L530.5,280.9 L530.8,280.4 L531.0,280.5 L531.2,281.0 L531.5,280.3 L531.8,280.5 L532.0,281.0 L532.2,281.0 L532.5,280.4 L532.8,280.8 L533.0,280.5 L533.2,280.7 L533.5,280.8 L533.8,280.3 L534.0,280.4 L534.2,280.3 L534.5,280.4 L534.8,280.2 L535.0,280.3 L535.2,280.5 L535.5,280.5 L535.8,280.2 L536.0,280.7 L536.2,281.0 L536.5,280.7 L536.8,280.5 L537.0,280.8 L537.2,280.5 L537.5,280.3 L537.8,280.6 L538.0,280.2 L538.2,280.8 L538.5,280.3" fill="none" stroke="#00d0f8" stroke-width="0.9"/>
  <path d="M1.0,273.5 L1.2,274.0 L1.5,274.1 L1.8,274.3 L2.0,274.3 L2.2,274.5 L2.5,274.7 L2.8,274.9 L3.0,274.8 L3.2,275.1 L3.5,275.1 L3.8,275.2 L4.0,275.5 L4.2,275.6 L4.5,275.8 L4.8,275.9 L5.0,275.9 L5.2,275.9 L5.5,275.9 L5.8,276.2 L6.0,276.4 L6.2,276.3 L6.5,276.3 L6.8,276.4 L7.0,276.5 L7.2,276.8 L7.5,276.6 L7.8,276.8 L8.0,276.9 L8.2,277.1 L8.5,277.3 L8.8,277.0 L9.0,277.1 L9.2,277.5 L9.5,277.6 L9.8,277.3 L10.0,277.4 L10.2,277.6 L10.5,277.5 L10.8,277.6 L11.0,277.7 L11.2,277.7 L11.5,277.7 L11.8,277.7 L12.0,277.8 L12.2,277.8 L12.5,278.1 L12.8,278.1 L13.0,278.0 L13.2,278.3 L13.5,278.3 L13.8,278.2 L14.0,278.3 L14.2,278.2 L14.5,278.5 L14.8,278.4 L15.0,278.2 L15.2,278.3 L15.5,278.6 L15.8,278.5 L16.0,278.6 L16.2,278.5 L16.5,278.7 L16.8,278.8 L17.0,278.5 L17.2,278.7 L17.5,278.6 L17.8,278.8 L18.0,278.9 L18.2,278.9 L18.5,278.7 L18.8,278.7 L19.0,278.9 L19.2,278.9 L19.5,278.8 L19.8,278.8 L20.0,279.0 L20.2,278.8 L20.5,279.1 L20.8,278.9 L21.0,279.0 L21.2,279.0 L21.5,279.1 L21.8,279.2 L22.0,278.9 L22.2,279.2 L22.5,279.1 L22.8,279.1 L23.0,279.3 L23.2,279.3 L23.5,279.3 L23.8,279.4 L24.0,279.2 L24.2,279.2 L24.5,279.4 L24.8,279.2 L25.0,279.2 L25.2,279.2 L25.5,279.5 L25.8,279.5 L26.0,279.5 L26.2,279.6 L26.5,279.5 L26.8,279.4 L27.0,279.4 L27.2,279.5 L27.5,279.3 L27.8,279.5 L28.0,279.3 L28.2,279.3 L28.5,279.5 L28.8,279.4 L29.0,279.7 L29.2,279.7 L29.5,279.5 L29.8,279.4 L30.0,279.4 L30.2,279.6 L30.5,279.6 L30.8,279.6 L31.0,279.7 L31.2,279.6 L31.5,279.7 L31.8,279.5 L32.0,279.5 L32.2,279.6 L32.5,279.7 L32.8,279.6 L33.0,279.8 L33.2,279.6 L33.5,279.6 L33.8,279.7 L34.0,279.8 L34.2,279.8 L34.5,279.7 L34.8,279.7 L35.0,279.9 L35.2,279.9 L35.5,279.8 L35.8,279.6 L36.0,279.8 L36.2,279.9 L36.5,279.7 L36.8,279.6 L37.0,280.0 L37.2,280.0 L37.5,279.7 L37.8,279.8 L38.0,279.9 L38.2,279.8 L38.5,279.7 L38.8,280.0 L39.0,280.0 L39.2,279.9 L39.5,279.7 L39.8,279.9 L40.0,279.7 L40.2,280.1 L40.5,279.7 L40.8,279.8 L41.0,280.0 L41.2,279.8 L41.5,279.8 L41.8,279.8 L42.0,279.8 L42.2,280.0 L42.5,280.1 L42.8,279.8 L43.0,279.8 L43.2,280.1 L43.5,280.0 L43.8,279.9 L44.0,279.8 L44.2,279.9 L44.5,280.2 L44.8,279.9 L45.0,279.9 L45.2,280.1 L45.5,280.2 L45.8,280.2 L46.0,280.0 L46.2,280.2 L46.5,280.1 L46.8,280.0 L47.0,280.0 L47.2,280.1 L47.5,280.2 L47.8,279.9 L48.0,280.0 L48.2,280.3 L48.5,279.9 L48.8,280.2 L49.0,280.0 L49.2,280.0 L49.5,280.0 L49.8,280.1 L50.0,280.3 L50.2,280.0 L50.5,280.3 L50.8,280.0 L51.0,280.0 L51.2,280.2 L51.5,280.1 L51.8,280.0 L52.0,280.1 L52.2,280.3 L52.5,280.3 L52.8,280.2 L53.0,280.0 L53.2,280.3 L53.5,280.2 L53.8,280.3 L54.0,280.4 L54.2,280.1 L54.5,280.3 L54.8,280.3 L55.0,280.1 L55.2,280.1 L55.5,280.1 L55.8,280.1 L56.0,280.1 L56.2,280.0 L56.5,280.1 L56.8,280.4 L57.0,280.2 L57.2,280.3 L57.5,280.4 L57.8,280.3 L58.0,280.1 L58.2,280.4 L58.5,280.4 L58.8,280.4 L59.0,280.3 L59.2,280.3 L59.5,280.4 L59.8,280.1 L60.0,280.3 L60.2,280.2 L60.5,280.4 L60.8,280.1 L61.0,280.3 L61.2,280.2 L61.5,280.4 L61.8,280.2 L62.0,280.4 L62.2,280.4 L62.5,280.4 L62.8,280.1 L63.0,280.5 L63.2,280.4 L63.5,280.4 L63.8,280.4 L64.0,280.1 L64.2,280.4 L64.5,280.3 L64.8,280.3 L65.0,280.2 L65.2,280.4 L65.5,280.4 L65.8,280.5 L66.0,280.2 L66.2,280.3 L66.5,280.2 L66.8,280.2 L67.0,280.3 L67.2,280.1 L67.5,280.4 L67.8,280.2 L68.0,280.2 L68.2,280.2 L68.5,280.4 L68.8,280.2 L69.0,280.3 L69.2,280.3 L69.5,280.5 L69.8,280.5 L70.0,280.3 L70.2,280.4 L70.5,280.5 L70.8,280.3 L71.0,280.5 L71.2,280.5 L71.5,280.3 L71.8,280.5 L72.0,280.4 L72.2,280.2 L72.5,280.4 L72.8,280.5 L73.0,280.4 L73.2,280.4 L73.5,280.3 L73.8,280.5 L74.0,280.4 L74.2,280.3 L74.5,280.3 L74.8,280.3 L75.0,280.6 L75.2,280.5 L75.5,280.2 L75.8,280.6 L76.0,280.2 L76.2,280.4 L76.5,280.4 L76.8,280.5 L77.0,280.4 L77.2,280.2 L77.5,280.4 L77.8,280.5 L78.0,280.5 L78.2,280.4 L78.5,280.3 L78.8,280.5 L79.0,280.5 L79.2,280.3 L79.5,280.6 L79.8,280.6 L80.0,280.4 L80.2,280.4 L80.5,280.5 L80.8,280.6 L81.0,280.3 L81.2,280.3 L81.5,280.4 L81.8,280.5 L82.0,280.3 L82.2,280.5 L82.5,280.4 L82.8,280.5 L83.0,280.3 L83.2,280.6 L83.5,280.6 L83.8,280.5 L84.0,280.6 L84.2,280.3 L84.5,280.6 L84.8,280.5 L85.0,280.6 L85.2,280.6 L85.5,280.4 L85.8,280.6 L86.0,280.3 L86.2,280.3 L86.5,280.5 L86.8,280.6 L87.0,280.6 L87.2,280.6 L87.5,280.5 L87.8,280.6 L88.0,280.5 L88.2,280.3 L88.5,280.5 L88.8,280.6 L89.0,280.4 L89.2,280.5 L89.5,280.4 L89.8,280.4 L90.0,280.4 L90.2,280.5 L90.5,280.5 L90.8,280.3 L91.0,280.3 L91.2,280.4 L91.5,280.6 L91.8,280.6 L92.0,280.4 L92.2,280.4 L92.5,280.5 L92.8,280.4 L93.0,280.5 L93.2,280.6 L93.5,280.4 L93.8,280.5 L94.0,280.6 L94.2,280.6 L94.5,280.6 L94.8,280.6 L95.0,280.4 L95.2,280.6 L95.5,280.7 L95.8,280.3 L96.0,280.7 L96.2,280.5 L96.5,280.3 L96.8,280.3 L97.0,280.6 L97.2,280.6 L97.5,280.4 L97.8,280.5 L98.0,280.6 L98.2,280.7 L98.5,280.4 L98.8,280.6 L99.0,280.4 L99.2,280.4 L99.5,280.4 L99.8,280.5 L100.0,280.6 L100.2,280.4 L100.5,280.4 L100.8,280.4 L101.0,280.3 L101.2,280.4 L101.5,280.4 L101.8,280.5 L102.0,280.4 L102.2,280.5 L102.5,280.5 L102.8,280.7 L103.0,280.5 L103.2,280.7 L103.5,280.5 L103.8,280.4 L104.0,280.6 L104.2,280.4 L104.5,280.4 L104.8,280.3 L105.0,280.6 L105.2,280.7 L105.5,280.5 L105.8,280.5 L106.0,280.5 L106.2,280.5 L106.5,280.6 L106.8,280.5 L107.0,280.4 L107.2,280.7 L107.5,280.6 L107.8,280.3 L108.0,280.7 L108.2,280.6 L108.5,280.5 L108.8,280.6 L109.0,280.7 L109.2,280.5 L109.5,280.5 L109.8,280.5 L110.0,280.6 L110.2,280.6 L110.5,280.6 L110.8,280.7 L111.0,280.4 L111.2,280.5 L111.5,280.7 L111.8,280.7 L112.0,280.6 L112.2,280.6 L112.5,280.5 L112.8,280.7 L113.0,280.6 L113.2,280.5 L113.5,280.4 L113.8,280.4 L114.0,280.7 L114.2,280.7 L114.5,280.4 L114.8,280.5 L115.0,280.5 L115.2,280.5 L115.5,280.5 L115.8,280.7 L116.0,280.5 L116.2,280.6 L116.5,280.7 L116.8,280.6 L117.0,280.5 L117.2,280.5 L117.5,280.5 L117.8,280.6 L118.0,280.7 L118.2,280.4 L118.5,280.5 L118.8,280.5 L119.0,280.5 L119.2,280.7 L119.5,280.6 L119.8,280.4 L120.0,280.5 L120.2,280.7 L120.5,280.4 L120.8,280.6 L121.0,280.3 L121.2,280.4 L121.5,280.3 L121.8,280.5 L122.0,279.8 L122.2,278.9 L122.5,277.0 L122.8,274.6 L123.0,272.7 L123.2,272.1 L123.5,273.5 L123.8,275.9 L124.0,278.0 L124.2,279.6 L124.5,280.0 L124.8,280.6 L125.0,280.5 L125.2,280.4 L125.5,280.6 L125.8,280.7 L126.0,280.5 L126.2,280.4 L126.5,280.7 L126.8,280.6 L127.0,280.6 L127.2,280.7 L127.5,280.4 L127.8,280.4 L128.0,280.4 L128.2,280.3 L128.5,280.6 L128.8,280.6 L129.0,280.4 L129.2,280.4 L129.5,280.4 L129.8,280.6 L130.0,280.6 L130.2,280.7 L130.5,280.4 L130.8,280.7 L131.0,280.5 L131.2,280.4 L131.5,280.3 L131.8,280.3 L132.0,280.3 L132.2,279.2 L132.5,274.9 L132.8,264.2 L133.0,247.2 L133.2,231.7 L133.5,230.1 L133.8,243.8 L134.0,261.2 L134.2,273.3 L134.5,278.5 L134.8,279.8 L135.0,280.3 L135.2,280.5 L135.5,280.5 L135.8,280.5 L136.0,280.6 L136.2,280.5 L136.5,280.5 L136.8,280.5 L137.0,280.7 L137.2,280.7 L137.5,280.7 L137.8,280.6 L138.0,280.4 L138.2,280.4 L138.5,280.5 L138.8,280.6 L139.0,280.4 L139.2,280.7 L139.5,280.7 L139.8,280.6 L140.0,280.4 L140.2,280.7 L140.5,280.5 L140.8,280.6 L141.0,280.6 L141.2,280.7 L141.5,280.5 L141.8,280.8 L142.0,280.8 L142.2,280.7 L142.5,280.6 L142.8,280.5 L143.0,280.5 L143.2,280.5 L143.5,280.7 L143.8,280.7 L144.0,280.7 L144.2,280.7 L144.5,280.8 L144.8,280.6 L145.0,280.5 L145.2,280.7 L145.5,280.5 L145.8,280.6 L146.0,280.4 L146.2,280.7 L146.5,280.6 L146.8,280.5 L147.0,280.7 L147.2,280.4 L147.5,280.7 L147.8,280.7 L148.0,280.4 L148.2,280.7 L148.5,280.6 L148.8,280.7 L149.0,280.6 L149.2,280.6 L149.5,280.8 L149.8,280.4 L150.0,280.7 L150.2,280.4 L150.5,280.5 L150.8,280.4 L151.0,280.7 L151.2,280.6 L151.5,280.7 L151.8,280.5 L152.0,280.7 L152.2,280.6 L152.5,280.4 L152.8,280.6 L153.0,280.7 L153.2,280.5 L153.5,280.6 L153.8,280.5 L154.0,280.5 L154.2,280.8 L154.5,280.8 L154.8,280.8 L155.0,280.6 L155.2,280.6 L155.5,280.7 L155.8,280.7 L156.0,280.6 L156.2,280.7 L156.5,280.5 L156.8,280.8 L157.0,280.6 L157.2,280.4 L157.5,280.7 L157.8,280.4 L158.0,280.7 L158.2,280.4 L158.5,280.8 L158.8,280.6 L159.0,280.7 L159.2,280.4 L159.5,280.6 L159.8,280.5 L160.0,280.5 L160.2,280.7 L160.5,280.4 L160.8,280.6 L161.0,280.4 L161.2,280.7 L161.5,280.7 L161.8,280.4 L162.0,280.6 L162.2,280.6 L162.5,280.7 L162.8,280.7 L163.0,280.5 L163.2,280.8 L163.5,280.5 L163.8,280.4 L164.0,280.7 L164.2,280.4 L164.5,280.5 L164.8,280.6 L165.0,280.5 L165.2,280.5 L165.5,280.8 L165.8,280.6 L166.0,280.7 L166.2,280.5 L166.5,280.8 L166.8,280.5 L167.0,280.7 L167.2,280.6 L167.5,280.8 L167.8,280.7 L168.0,280.6 L168.2,280.6 L168.5,280.7 L168.8,280.6 L169.0,280.4 L169.2,280.7 L169.5,280.7 L169.8,280.6 L170.0,280.7 L170.2,280.4 L170.5,280.5 L170.8,280.6 L171.0,280.5 L171.2,280.2 L171.5,279.5 L171.8,279.1 L172.0,278.3 L172.2,277.4 L172.5,276.6 L172.8,276.0 L173.0,276.0 L173.2,276.2 L173.5,276.6 L173.8,277.4 L174.0,278.3 L174.2,279.1 L174.5,279.6 L174.8,279.9 L175.0,280.4 L175.2,280.4 L175.5,280.7 L175.8,280.7 L176.0,280.4 L176.2,280.6 L176.5,280.8 L176.8,280.5 L177.0,280.6 L177.2,280.5 L177.5,280.4 L177.8,280.5 L178.0,280.4 L178.2,280.5 L178.5,280.6 L178.8,280.6 L179.0,280.8 L179.2,280.7 L179.5,280.5 L179.8,280.8 L180.0,280.6 L180.2,280.6 L180.5,280.7 L180.8,280.7 L181.0,280.5 L181.2,280.6 L181.5,280.5 L181.8,280.8 L182.0,280.5 L182.2,280.8 L182.5,280.4 L182.8,280.4 L183.0,280.6 L183.2,280.5 L183.5,280.6 L183.8,280.4 L184.0,280.7 L184.2,280.7 L184.5,280.7 L184.8,280.8 L185.0,280.8 L185.2,280.7 L185.5,280.7 L185.8,280.4 L186.0,280.4 L186.2,280.6 L186.5,280.8 L186.8,280.5 L187.0,280.6 L187.2,280.4 L187.5,280.6 L187.8,280.8 L188.0,280.6 L188.2,280.7 L188.5,280.4 L188.8,280.5 L189.0,280.5 L189.2,280.7 L189.5,280.4 L189.8,280.8 L190.0,280.5 L190.2,280.7 L190.5,280.6 L190.8,280.5 L191.0,280.8 L191.2,280.6 L191.5,280.7 L191.8,280.4 L192.0,280.7 L192.2,280.8 L192.5,280.4 L192.8,280.7 L193.0,280.5 L193.2,280.5 L193.5,280.5 L193.8,280.7 L194.0,280.8 L194.2,280.8 L194.5,280.8 L194.8,280.6 L195.0,280.7 L195.2,280.5 L195.5,280.7 L195.8,280.6 L196.0,280.5 L196.2,280.8 L196.5,280.5 L196.8,280.5 L197.0,280.5 L197.2,280.5 L197.5,280.6 L197.8,280.7 L198.0,280.5 L198.2,280.6 L198.5,280.6 L198.8,280.6 L199.0,280.6 L199.2,280.6 L199.5,280.4 L199.8,280.4 L200.0,280.6 L200.2,280.5 L200.5,280.7 L200.8,280.5 L201.0,280.7 L201.2,280.5 L201.5,280.4 L201.8,280.6 L202.0,280.5 L202.2,280.5 L202.5,280.7 L202.8,280.5 L203.0,280.7 L203.2,280.7 L203.5,280.6 L203.8,280.6 L204.0,280.8 L204.2,280.6 L204.5,280.5 L204.8,280.4 L205.0,280.4 L205.2,280.5 L205.5,280.4 L205.8,280.7 L206.0,280.6 L206.2,280.5 L206.5,280.6 L206.8,280.8 L207.0,280.5 L207.2,280.5 L207.5,280.5 L207.8,280.5 L208.0,280.8 L208.2,280.7 L208.5,280.6 L208.8,280.5 L209.0,280.4 L209.2,280.4 L209.5,280.7 L209.8,280.6 L210.0,280.4 L210.2,280.6 L210.5,280.4 L210.8,280.6 L211.0,280.5 L211.2,280.4 L211.5,280.7 L211.8,280.7 L212.0,280.6 L212.2,280.4 L212.5,280.6 L212.8,280.5 L213.0,280.4 L213.2,279.9 L213.5,279.8 L213.8,278.6 L214.0,277.5 L214.2,276.1 L214.5,274.4 L214.8,273.0 L215.0,272.4 L215.2,272.7 L215.5,273.3 L215.8,274.7 L216.0,276.5 L216.2,277.8 L216.5,279.0 L216.8,279.8 L217.0,280.1 L217.2,280.3 L217.5,280.3 L217.8,280.6 L218.0,280.8 L218.2,280.7 L218.5,280.4 L218.8,280.6 L219.0,280.6 L219.2,280.5 L219.5,280.7 L219.8,280.6 L220.0,280.7 L220.2,280.5 L220.5,280.8 L220.8,280.7 L221.0,280.6 L221.2,280.4 L221.5,280.6 L221.8,280.4 L222.0,280.7 L222.2,280.7 L222.5,280.6 L222.8,280.8 L223.0,280.4 L223.2,280.7 L223.5,280.7 L223.8,280.4 L224.0,280.5 L224.2,280.4 L224.5,280.6 L224.8,280.7 L225.0,280.5 L225.2,280.7 L225.5,280.5 L225.8,280.7 L226.0,280.5 L226.2,280.8 L226.5,280.5 L226.8,280.3 L227.0,280.3 L227.2,280.5 L227.5,280.4 L227.8,280.1 L228.0,279.7 L228.2,279.7 L228.5,279.3 L228.8,278.9 L229.0,278.9 L229.2,279.1 L229.5,279.1 L229.8,279.3 L230.0,279.7 L230.2,280.2 L230.5,280.5 L230.8,280.3 L231.0,280.7 L231.2,280.7 L231.5,280.7 L231.8,280.6 L232.0,280.8 L232.2,280.6 L232.5,280.8 L232.8,280.6 L233.0,280.5 L233.2,280.6 L233.5,280.6 L233.8,280.5 L234.0,280.5 L234.2,280.6 L234.5,280.5 L234.8,280.3 L235.0,280.2 L235.2,280.1 L235.5,279.8 L235.8,279.5 L236.0,279.3 L236.2,278.8 L236.5,278.8 L236.8,278.7 L237.0,279.1 L237.2,279.3 L237.5,279.7 L237.8,279.9 L238.0,280.0 L238.2,280.5 L238.5,280.4 L238.8,280.5 L239.0,280.5 L239.2,280.5 L239.5,280.7 L239.8,280.7 L240.0,280.6 L240.2,280.7 L240.5,280.5 L240.8,280.6 L241.0,280.5 L241.2,280.5 L241.5,280.5 L241.8,280.7 L242.0,280.7 L242.2,280.5 L242.5,280.5 L242.8,280.7 L243.0,280.7 L243.2,280.7 L243.5,280.7 L243.8,280.7 L244.0,280.5 L244.2,280.4 L244.5,280.5 L244.8,280.4 L245.0,280.8 L245.2,280.6 L245.5,280.7 L245.8,280.8 L246.0,280.7 L246.2,280.5 L246.5,280.5 L246.8,280.4 L247.0,280.7 L247.2,280.7 L247.5,280.6 L247.8,280.5 L248.0,280.5 L248.2,280.6 L248.5,280.7 L248.8,280.8 L249.0,280.7 L249.2,280.7 L249.5,280.6 L249.8,280.6 L250.0,280.5 L250.2,280.8 L250.5,280.5 L250.8,280.5 L251.0,280.5 L251.2,280.8 L251.5,280.7 L251.8,280.5 L252.0,280.7 L252.2,280.8 L252.5,280.6 L252.8,280.5 L253.0,280.7 L253.2,280.5 L253.5,280.4 L253.8,280.7 L254.0,280.5 L254.2,280.5 L254.5,280.5 L254.8,280.3 L255.0,280.1 L255.2,280.0 L255.5,279.8 L255.8,279.3 L256.0,279.2 L256.2,279.2 L256.5,278.9 L256.8,279.1 L257.0,279.3 L257.2,279.4 L257.5,279.6 L257.8,280.1 L258.0,280.3 L258.2,280.3 L258.5,280.4 L258.8,280.7 L259.0,280.7 L259.2,280.5 L259.5,280.6 L259.8,280.6 L260.0,280.5 L260.2,280.4 L260.5,280.5 L260.8,280.7 L261.0,280.6 L261.2,280.6 L261.5,280.4 L261.8,280.5 L262.0,280.5 L262.2,280.6 L262.5,280.5 L262.8,280.8 L263.0,280.4 L263.2,280.8 L263.5,280.5 L263.8,280.7 L264.0,280.5 L264.2,280.6 L264.5,280.5 L264.8,280.4 L265.0,280.7 L265.2,280.7 L265.5,280.5 L265.8,280.7 L266.0,280.6 L266.2,280.8 L266.5,280.4 L266.8,280.6 L267.0,280.5 L267.2,280.6 L267.5,280.7 L267.8,280.7 L268.0,280.6 L268.2,280.6 L268.5,280.7 L268.8,280.4 L269.0,280.5 L269.2,280.7 L269.5,280.6 L269.8,280.8 L270.0,280.4 L270.2,280.6 L270.5,280.5 L270.8,280.4 L271.0,280.4 L271.2,280.4 L271.5,280.5 L271.8,280.6 L272.0,280.6 L272.2,280.5 L272.5,280.7 L272.8,280.6 L273.0,280.8 L273.2,280.5 L273.5,280.6 L273.8,280.6 L274.0,280.5 L274.2,280.7 L274.5,280.5 L274.8,280.7 L275.0,280.5 L275.2,280.5 L275.5,280.6 L275.8,280.6 L276.0,280.5 L276.2,280.4 L276.5,280.8 L276.8,280.5 L277.0,280.4 L277.2,280.7 L277.5,280.6 L277.8,280.5 L278.0,280.5 L278.2,280.7 L278.5,280.5 L278.8,280.6 L279.0,280.8 L279.2,280.5 L279.5,280.6 L279.8,280.5 L280.0,280.7 L280.2,280.7 L280.5,280.6 L280.8,280.5 L281.0,280.4 L281.2,280.6 L281.5,280.3 L281.8,280.3 L282.0,279.9 L282.2,279.7 L282.5,279.1 L282.8,278.8 L283.0,278.8 L283.2,278.6 L283.5,278.6 L283.8,278.8 L284.0,279.1 L284.2,279.4 L284.5,279.7 L284.8,280.2 L285.0,280.4 L285.2,280.3 L285.5,280.6 L285.8,280.4 L286.0,280.6 L286.2,280.4 L286.5,280.6 L286.8,280.5 L287.0,280.6 L287.2,280.4 L287.5,280.4 L287.8,280.3 L288.0,280.0 L288.2,279.8 L288.5,279.6 L288.8,279.3 L289.0,279.1 L289.2,279.1 L289.5,279.1 L289.8,279.1 L290.0,279.4 L290.2,279.9 L290.5,280.0 L290.8,280.3 L291.0,280.3 L291.2,280.5 L291.5,280.7 L291.8,280.7 L292.0,280.6 L292.2,280.4 L292.5,280.6 L292.8,280.4 L293.0,280.8 L293.2,280.8 L293.5,280.7 L293.8,280.5 L294.0,280.7 L294.2,280.5 L294.5,280.7 L294.8,280.6 L295.0,280.4 L295.2,280.8 L295.5,280.6 L295.8,280.7 L296.0,280.7 L296.2,280.6 L296.5,280.7 L296.8,280.5 L297.0,280.8 L297.2,280.5 L297.5,280.4 L297.8,280.5 L298.0,280.4 L298.2,280.4 L298.5,280.6 L298.8,280.4 L299.0,280.5 L299.2,280.5 L299.5,280.5 L299.8,280.8 L300.0,280.8 L300.2,280.7 L300.5,280.8 L300.8,280.6 L301.0,280.7 L301.2,280.5 L301.5,280.8 L301.8,280.7 L302.0,280.7 L302.2,280.5 L302.5,280.4 L302.8,280.8 L303.0,280.6 L303.2,280.6 L303.5,280.7 L303.8,280.5 L304.0,280.7 L304.2,280.6 L304.5,280.7 L304.8,280.6 L305.0,280.5 L305.2,280.8 L305.5,280.5 L305.8,280.7 L306.0,280.7 L306.2,280.5 L306.5,280.7 L306.8,280.6 L307.0,280.5 L307.2,280.5 L307.5,280.8 L307.8,280.5 L308.0,280.6 L308.2,280.6 L308.5,280.4 L308.8,280.7 L309.0,280.7 L309.2,280.7 L309.5,280.5 L309.8,280.5 L310.0,280.5 L310.2,280.7 L310.5,280.7 L310.8,280.6 L311.0,280.6 L311.2,280.5 L311.5,280.8 L311.8,280.6 L312.0,280.6 L312.2,280.7 L312.5,280.5 L312.8,280.7 L313.0,280.5 L313.2,280.7 L313.5,280.4 L313.8,280.5 L314.0,280.7 L314.2,280.6 L314.5,280.6 L314.8,280.6 L315.0,280.5 L315.2,280.6 L315.5,280.4 L315.8,280.7 L316.0,280.5 L316.2,280.7 L316.5,280.6 L316.8,280.6 L317.0,280.7 L317.2,280.4 L317.5,280.7 L317.8,280.5 L318.0,280.7 L318.2,280.7 L318.5,280.7 L318.8,280.7 L319.0,280.6 L319.2,280.7 L319.5,280.8 L319.8,280.5 L320.0,280.4 L320.2,280.6 L320.5,280.6 L320.8,280.5 L321.0,280.5 L321.2,280.7 L321.5,280.6 L321.8,280.5 L322.0,280.5 L322.2,280.6 L322.5,280.5 L322.8,280.6 L323.0,280.6 L323.2,280.6 L323.5,280.6 L323.8,280.7 L324.0,280.4 L324.2,280.8 L324.5,280.5 L324.8,280.4 L325.0,280.7 L325.2,280.6 L325.5,280.6 L325.8,280.5 L326.0,280.7 L326.2,280.5 L326.5,280.7 L326.8,280.5 L327.0,280.6 L327.2,280.7 L327.5,280.5 L327.8,280.6 L328.0,280.4 L328.2,280.7 L328.5,280.7 L328.8,280.5 L329.0,280.6 L329.2,280.7 L329.5,280.4 L329.8,280.7 L330.0,280.7 L330.2,280.4 L330.5,280.5 L330.8,280.4 L331.0,280.5 L331.2,280.4 L331.5,280.6 L331.8,280.5 L332.0,280.5 L332.2,280.6 L332.5,280.5 L332.8,280.7 L333.0,280.7 L333.2,280.4 L333.5,280.5 L333.8,280.4 L334.0,280.5 L334.2,280.4 L334.5,280.7 L334.8,280.7 L335.0,280.8 L335.2,280.5 L335.5,280.4 L335.8,280.7 L336.0,280.6 L336.2,280.8 L336.5,280.6 L336.8,280.5 L337.0,280.4 L337.2,280.8 L337.5,280.6 L337.8,280.6 L338.0,280.6 L338.2,280.7 L338.5,280.7 L338.8,280.6 L339.0,280.5 L339.2,280.6 L339.5,280.8 L339.8,280.6 L340.0,280.7 L340.2,280.6 L340.5,280.6 L340.8,280.6 L341.0,280.5 L341.2,280.6 L341.5,280.7 L341.8,280.4 L342.0,280.5 L342.2,280.8 L342.5,280.8 L342.8,280.4 L343.0,280.7 L343.2,280.7 L343.5,280.7 L343.8,280.6 L344.0,280.5 L344.2,280.5 L344.5,280.7 L344.8,280.7 L345.0,280.5 L345.2,280.7 L345.5,280.7 L345.8,280.7 L346.0,280.4 L346.2,280.6 L346.5,280.5 L346.8,280.6 L347.0,280.5 L347.2,280.5 L347.5,280.7 L347.8,280.5 L348.0,280.7 L348.2,280.5 L348.5,280.6 L348.8,280.7 L349.0,280.4 L349.2,280.7 L349.5,280.4 L349.8,280.8 L350.0,280.4 L350.2,280.7 L350.5,280.5 L350.8,280.5 L351.0,280.6 L351.2,280.6 L351.5,280.6 L351.8,280.4 L352.0,280.6 L352.2,280.5 L352.5,280.8 L352.8,280.6 L353.0,280.6 L353.2,280.5 L353.5,280.8 L353.8,280.5 L354.0,280.7 L354.2,280.7 L354.5,280.6 L354.8,280.7 L355.0,280.5 L355.2,280.4 L355.5,280.4 L355.8,280.6 L356.0,280.7 L356.2,280.5 L356.5,280.6 L356.8,280.7 L357.0,280.5 L357.2,280.5 L357.5,280.6 L357.8,280.6 L358.0,280.8 L358.2,280.8 L358.5,280.5 L358.8,280.6 L359.0,280.6 L359.2,280.4 L359.5,280.6 L359.8,280.8 L360.0,280.5 L360.2,280.6 L360.5,280.7 L360.8,280.4 L361.0,280.8 L361.2,280.4 L361.5,280.5 L361.8,280.7 L362.0,280.4 L362.2,280.6 L362.5,280.5 L362.8,280.6 L363.0,280.4 L363.2,280.5 L363.5,280.5 L363.8,280.4 L364.0,280.4 L364.2,280.5 L364.5,280.6 L364.8,280.5 L365.0,280.7 L365.2,280.6 L365.5,280.5 L365.8,280.5 L366.0,280.7 L366.2,280.4 L366.5,280.7 L366.8,280.4 L367.0,280.8 L367.2,280.6 L367.5,280.6 L367.8,280.7 L368.0,280.4 L368.2,280.4 L368.5,280.7 L368.8,280.6 L369.0,280.7 L369.2,280.5 L369.5,280.6 L369.8,280.5 L370.0,280.6 L370.2,280.5 L370.5,280.6 L370.8,280.5 L371.0,280.5 L371.2,280.7 L371.5,280.4 L371.8,280.7 L372.0,280.6 L372.2,280.5 L372.5,280.4 L372.8,280.6 L373.0,280.6 L373.2,280.7 L373.5,280.5 L373.8,280.6 L374.0,280.8 L374.2,280.5 L374.5,280.8 L374.8,280.8 L375.0,280.8 L375.2,280.8 L375.5,280.5 L375.8,280.7 L376.0,280.6 L376.2,280.5 L376.5,280.8 L376.8,280.7 L377.0,280.7 L377.2,280.6 L377.5,280.4 L377.8,280.7 L378.0,280.5 L378.2,280.5 L378.5,280.6 L378.8,280.5 L379.0,280.6 L379.2,280.7 L379.5,280.4 L379.8,280.7 L380.0,280.4 L380.2,280.6 L380.5,280.7 L380.8,280.7 L381.0,280.4 L381.2,280.5 L381.5,280.8 L381.8,280.6 L382.0,280.6 L382.2,280.5 L382.5,280.7 L382.8,280.7 L383.0,280.7 L383.2,280.6 L383.5,280.6 L383.8,280.6 L384.0,280.5 L384.2,280.8 L384.5,280.8 L384.8,280.7 L385.0,280.8 L385.2,280.6 L385.5,280.7 L385.8,280.5 L386.0,280.7 L386.2,280.7 L386.5,280.8 L386.8,280.7 L387.0,280.8 L387.2,280.5 L387.5,280.7 L387.8,280.6 L388.0,280.5 L388.2,280.5 L388.5,280.7 L388.8,280.7 L389.0,280.7 L389.2,280.7 L389.5,280.5 L389.8,280.5 L390.0,280.6 L390.2,280.5 L390.5,280.5 L390.8,280.4 L391.0,280.5 L391.2,280.7 L391.5,280.5 L391.8,280.7 L392.0,280.5 L392.2,280.7 L392.5,280.5 L392.8,280.5 L393.0,280.6 L393.2,280.4 L393.5,280.6 L393.8,280.6 L394.0,280.4 L394.2,280.7 L394.5,280.5 L394.8,280.4 L395.0,280.8 L395.2,280.5 L395.5,280.5 L395.8,280.4 L396.0,280.4 L396.2,280.7 L396.5,280.6 L396.8,280.6 L397.0,280.5 L397.2,280.5 L397.5,280.8 L397.8,280.5 L398.0,280.8 L398.2,280.8 L398.5,280.4 L398.8,280.7 L399.0,280.4 L399.2,280.7 L399.5,280.7 L399.8,280.7 L400.0,280.6 L400.2,280.7 L400.5,280.5 L400.8,280.6 L401.0,280.5 L401.2,280.6 L401.5,280.5 L401.8,280.7 L402.0,280.6 L402.2,280.7 L402.5,280.7 L402.8,280.6 L403.0,280.8 L403.2,280.7 L403.5,280.6 L403.8,280.5 L404.0,280.8 L404.2,280.5 L404.5,280.4 L404.8,280.5 L405.0,280.7 L405.2,280.8 L405.5,280.7 L405.8,280.7 L406.0,280.8 L406.2,280.7 L406.5,280.6 L406.8,280.6 L407.0,280.7 L407.2,280.5 L407.5,280.4 L407.8,280.6 L408.0,280.7 L408.2,280.5 L408.5,280.7 L408.8,280.8 L409.0,280.5 L409.2,280.5 L409.5,280.6 L409.8,280.5 L410.0,280.8 L410.2,280.8 L410.5,280.6 L410.8,280.7 L411.0,280.7 L411.2,280.5 L411.5,280.8 L411.8,280.5 L412.0,280.4 L412.2,280.6 L412.5,280.4 L412.8,280.6 L413.0,280.6 L413.2,280.8 L413.5,280.6 L413.8,280.7 L414.0,280.7 L414.2,280.6 L414.5,280.5 L414.8,280.5 L415.0,280.6 L415.2,280.6 L415.5,280.7 L415.8,280.6 L416.0,280.5 L416.2,280.6 L416.5,280.8 L416.8,280.5 L417.0,280.5 L417.2,280.4 L417.5,280.4 L417.8,280.4 L418.0,280.6 L418.2,280.7 L418.5,280.7 L418.8,280.8 L419.0,280.7 L419.2,280.6 L419.5,280.6 L419.8,280.4 L420.0,280.6 L420.2,280.5 L420.5,280.6 L420.8,280.4 L421.0,280.6 L421.2,280.5 L421.5,280.6 L421.8,280.6 L422.0,280.4 L422.2,280.7 L422.5,280.7 L422.8,280.6 L423.0,280.4 L423.2,280.6 L423.5,280.7 L423.8,280.8 L424.0,280.7 L424.2,280.4 L424.5,280.7 L424.8,280.7 L425.0,280.5 L425.2,280.8 L425.5,280.7 L425.8,280.8 L426.0,280.5 L426.2,280.6 L426.5,280.5 L426.8,280.5 L427.0,280.7 L427.2,280.6 L427.5,280.5 L427.8,280.6 L428.0,280.8 L428.2,280.6 L428.5,280.8 L428.8,280.6 L429.0,280.8 L429.2,280.4 L429.5,280.6 L429.8,280.6 L430.0,280.7 L430.2,280.8 L430.5,280.6 L430.8,280.6 L431.0,280.6 L431.2,280.5 L431.5,280.5 L431.8,280.5 L432.0,280.0 L432.2,279.8 L432.5,279.7 L432.8,279.0 L433.0,279.0 L433.2,278.4 L433.5,278.6 L433.8,278.7 L434.0,278.7 L434.2,279.1 L434.5,279.4 L434.8,280.0 L435.0,280.2 L435.2,280.4 L435.5,280.4 L435.8,280.6 L436.0,280.7 L436.2,280.7 L436.5,280.8 L436.8,280.5 L437.0,280.6 L437.2,280.5 L437.5,280.5 L437.8,280.7 L438.0,280.5 L438.2,280.6 L438.5,280.7 L438.8,280.8 L439.0,280.4 L439.2,280.5 L439.5,280.6 L439.8,280.8 L440.0,280.5 L440.2,280.7 L440.5,280.6 L440.8,280.6 L441.0,280.8 L441.2,280.4 L441.5,280.5 L441.8,280.5 L442.0,280.4 L442.2,280.5 L442.5,280.7 L442.8,280.6 L443.0,280.4 L443.2,280.7 L443.5,280.5 L443.8,280.3 L444.0,280.5 L444.2,280.3 L444.5,279.7 L444.8,279.5 L445.0,278.9 L445.2,278.1 L445.5,277.4 L445.8,277.3 L446.0,277.1 L446.2,277.0 L446.5,277.7 L446.8,278.3 L447.0,278.9 L447.2,279.5 L447.5,280.0 L447.8,280.1 L448.0,280.5 L448.2,280.6 L448.5,280.5 L448.8,280.6 L449.0,280.7 L449.2,280.7 L449.5,280.6 L449.8,280.5 L450.0,280.5 L450.2,280.6 L450.5,280.4 L450.8,280.7 L451.0,280.7 L451.2,280.5 L451.5,280.7 L451.8,280.7 L452.0,280.4 L452.2,280.7 L452.5,280.7 L452.8,280.5 L453.0,280.4 L453.2,280.5 L453.5,280.7 L453.8,280.6 L454.0,280.7 L454.2,280.5 L454.5,280.4 L454.8,280.5 L455.0,280.7 L455.2,280.5 L455.5,280.4 L455.8,280.7 L456.0,280.4 L456.2,280.7 L456.5,280.4 L456.8,280.5 L457.0,280.7 L457.2,280.7 L457.5,280.6 L457.8,280.6 L458.0,280.4 L458.2,280.5 L458.5,280.5 L458.8,280.7 L459.0,280.7 L459.2,280.7 L459.5,280.6 L459.8,280.7 L460.0,280.4 L460.2,280.6 L460.5,280.5 L460.8,280.5 L461.0,280.7 L461.2,280.5 L461.5,280.5 L461.8,280.5 L462.0,280.7 L462.2,280.7 L462.5,280.6 L462.8,280.6 L463.0,280.8 L463.2,280.8 L463.5,280.6 L463.8,280.6 L464.0,280.7 L464.2,280.5 L464.5,280.5 L464.8,280.4 L465.0,280.6 L465.2,280.7 L465.5,280.5 L465.8,280.6 L466.0,280.8 L466.2,280.6 L466.5,280.6 L466.8,280.7 L467.0,280.8 L467.2,280.5 L467.5,280.4 L467.8,280.7 L468.0,280.7 L468.2,280.8 L468.5,280.7 L468.8,280.5 L469.0,280.6 L469.2,280.5 L469.5,280.6 L469.8,280.6 L470.0,280.8 L470.2,280.8 L470.5,280.8 L470.8,280.6 L471.0,280.8 L471.2,280.5 L471.5,280.8 L471.8,280.7 L472.0,280.7 L472.2,280.6 L472.5,280.8 L472.8,280.4 L473.0,280.7 L473.2,280.7 L473.5,280.5 L473.8,280.7 L474.0,280.5 L474.2,280.7 L474.5,280.6 L474.8,280.6 L475.0,280.5 L475.2,280.7 L475.5,280.7 L475.8,280.4 L476.0,280.8 L476.2,280.5 L476.5,280.5 L476.8,280.6 L477.0,280.6 L477.2,280.7 L477.5,280.8 L477.8,280.6 L478.0,280.5 L478.2,280.4 L478.5,280.4 L478.8,280.6 L479.0,280.6 L479.2,280.5 L479.5,280.6 L479.8,280.3 L480.0,280.1 L480.2,279.9 L480.5,279.5 L480.8,279.5 L481.0,279.0 L481.2,278.6 L481.5,278.2 L481.8,278.0 L482.0,277.9 L482.2,278.1 L482.5,278.3 L482.8,278.8 L483.0,279.0 L483.2,279.2 L483.5,279.5 L483.8,279.8 L484.0,280.1 L484.2,280.4 L484.5,280.6 L484.8,280.4 L485.0,280.7 L485.2,280.5 L485.5,280.6 L485.8,280.6 L486.0,280.4 L486.2,280.4 L486.5,280.7 L486.8,280.7 L487.0,280.5 L487.2,280.8 L487.5,280.7 L487.8,280.5 L488.0,280.4 L488.2,280.6 L488.5,280.7 L488.8,280.5 L489.0,280.4 L489.2,280.6 L489.5,280.4 L489.8,280.7 L490.0,280.6 L490.2,280.5 L490.5,280.6 L490.8,280.5 L491.0,280.5 L491.2,280.5 L491.5,280.7 L491.8,280.6 L492.0,280.7 L492.2,280.5 L492.5,280.7 L492.8,280.6 L493.0,280.7 L493.2,280.6 L493.5,280.6 L493.8,280.5 L494.0,280.8 L494.2,280.7 L494.5,280.6 L494.8,280.7 L495.0,280.4 L495.2,280.5 L495.5,280.5 L495.8,280.7 L496.0,280.4 L496.2,280.6 L496.5,280.7 L496.8,280.7 L497.0,280.7 L497.2,280.5 L497.5,280.5 L497.8,280.7 L498.0,280.5 L498.2,280.7 L498.5,280.5 L498.8,280.7 L499.0,280.6 L499.2,280.7 L499.5,280.8 L499.8,280.6 L500.0,280.8 L500.2,280.4 L500.5,280.8 L500.8,280.4 L501.0,280.6 L501.2,280.6 L501.5,280.7 L501.8,280.5 L502.0,280.5 L502.2,280.7 L502.5,280.6 L502.8,280.7 L503.0,280.6 L503.2,280.4 L503.5,280.7 L503.8,280.5 L504.0,280.6 L504.2,280.4 L504.5,280.5 L504.8,280.7 L505.0,280.7 L505.2,280.7 L505.5,280.6 L505.8,280.7 L506.0,280.7 L506.2,280.5 L506.5,280.6 L506.8,280.6 L507.0,280.7 L507.2,280.5 L507.5,280.5 L507.8,280.5 L508.0,280.4 L508.2,280.5 L508.5,280.7 L508.8,280.6 L509.0,280.5 L509.2,280.7 L509.5,280.4 L509.8,280.7 L510.0,280.5 L510.2,280.4 L510.5,280.5 L510.8,280.6 L511.0,280.5 L511.2,280.8 L511.5,280.8 L511.8,280.5 L512.0,280.7 L512.2,280.7 L512.5,280.6 L512.8,280.5 L513.0,280.8 L513.2,280.8 L513.5,280.4 L513.8,280.5 L514.0,280.5 L514.2,280.5 L514.5,280.6 L514.8,280.8 L515.0,280.4 L515.2,280.7 L515.5,280.5 L515.8,280.4 L516.0,280.8 L516.2,280.5 L516.5,280.5 L516.8,280.4 L517.0,280.5 L517.2,280.4 L517.5,280.5 L517.8,280.5 L518.0,280.6 L518.2,280.6 L518.5,280.5 L518.8,280.6 L519.0,280.7 L519.2,280.7 L519.5,280.5 L519.8,280.8 L520.0,280.7 L520.2,280.6 L520.5,280.6 L520.8,280.5 L521.0,280.5 L521.2,280.8 L521.5,280.6 L521.8,280.4 L522.0,280.8 L522.2,280.8 L522.5,280.4 L522.8,280.7 L523.0,280.5 L523.2,280.6 L523.5,280.7 L523.8,280.5 L524.0,280.6 L524.2,280.7 L524.5,280.5 L524.8,280.7 L525.0,280.6 L525.2,280.8 L525.5,280.5 L525.8,280.7 L526.0,280.4 L526.2,280.5 L526.5,280.4 L526.8,280.5 L527.0,280.6 L527.2,280.5 L527.5,280.7 L527.8,280.4 L528.0,280.6 L528.2,280.7 L528.5,280.5 L528.8,280.5 L529.0,280.7 L529.2,280.6 L529.5,280.8 L529.8,280.5 L530.0,280.6 L530.2,280.8 L530.5,280.5 L530.8,280.8 L531.0,280.8 L531.2,280.5 L531.5,280.6 L531.8,280.8 L532.0,280.4 L532.2,280.7 L532.5,280.7 L532.8,280.7 L533.0,280.6 L533.2,280.4 L533.5,280.8 L533.8,280.4 L534.0,280.7 L534.2,280.7 L534.5,280.5 L534.8,280.7 L535.0,280.6 L535.2,280.7 L535.5,280.4 L535.8,280.8 L536.0,280.6 L536.2,280.7 L536.5,280.6 L536.8,280.7 L537.0,280.5 L537.2,280.6 L537.5,280.4 L537.8,280.6 L538.0,280.4 L538.2,280.7 L538.5,280.7" fill="none" stroke="#6a00ee" stroke-width="1.2"/>
  <!-- residual -->
  <rect x="0" y="297" width="564" height="56" fill="#0d0d0d"/>
  <rect x="0" y="298" width="563" height="54" fill="#222222"/>
  <line x1="0" y1="325.5" x2="563" y2="325.5" stroke="#bdbdbd" stroke-width="1"/>
  <path d="M1.0,321.4 L1.2,321.7 L1.5,321.8 L1.8,321.9 L2.0,321.5 L2.2,321.9 L2.5,322.0 L2.8,322.0 L3.0,321.8 L3.2,322.3 L3.5,322.1 L3.8,322.3 L4.0,322.5 L4.2,322.3 L4.5,322.2 L4.8,322.7 L5.0,322.4 L5.2,322.4 L5.5,322.5 L5.8,323.0 L6.0,322.9 L6.2,322.7 L6.5,322.7 L6.8,323.1 L7.0,323.1 L7.2,323.1 L7.5,322.9 L7.8,323.1 L8.0,323.4 L8.2,323.0 L8.5,323.2 L8.8,323.1 L9.0,323.6 L9.2,323.2 L9.5,323.6 L9.8,323.6 L10.0,323.6 L10.2,323.3 L10.5,323.6 L10.8,323.6 L11.0,323.6 L11.2,323.5 L11.5,323.7 L11.8,323.9 L12.0,323.6 L12.2,324.0 L12.5,323.8 L12.8,323.7 L13.0,323.7 L13.2,323.9 L13.5,324.0 L13.8,324.0 L14.0,324.1 L14.2,324.0 L14.5,324.0 L14.8,324.3 L15.0,323.9 L15.2,323.8 L15.5,324.0 L15.8,324.0 L16.0,323.9 L16.2,324.1 L16.5,323.9 L16.8,324.4 L17.0,324.2 L17.2,324.4 L17.5,324.3 L17.8,324.4 L18.0,324.4 L18.2,324.2 L18.5,324.4 L18.8,324.2 L19.0,324.3 L19.2,324.4 L19.5,324.5 L19.8,324.2 L20.0,324.3 L20.2,324.6 L20.5,324.6 L20.8,324.7 L21.0,324.2 L21.2,324.3 L21.5,324.3 L21.8,324.6 L22.0,324.6 L22.2,324.6 L22.5,324.6 L22.8,324.5 L23.0,324.5 L23.2,324.7 L23.5,324.6 L23.8,324.6 L24.0,324.6 L24.2,324.6 L24.5,324.7 L24.8,324.6 L25.0,324.4 L25.2,324.6 L25.5,324.6 L25.8,324.6 L26.0,324.6 L26.2,324.6 L26.5,324.6 L26.8,324.6 L27.0,324.6 L27.2,324.9 L27.5,324.4 L27.8,324.4 L28.0,324.8 L28.2,324.6 L28.5,324.7 L28.8,324.7 L29.0,324.6 L29.2,324.6 L29.5,324.5 L29.8,324.9 L30.0,324.9 L30.2,324.6 L30.5,324.7 L30.8,324.6 L31.0,324.5 L31.2,324.9 L31.5,324.9 L31.8,324.6 L32.0,324.6 L32.2,324.8 L32.5,324.9 L32.8,324.7 L33.0,324.7 L33.2,324.6 L33.5,324.9 L33.8,324.9 L34.0,324.9 L34.2,324.6 L34.5,324.8 L34.8,325.0 L35.0,324.9 L35.2,324.8 L35.5,324.6 L35.8,324.6 L36.0,324.9 L36.2,324.6 L36.5,325.0 L36.8,324.9 L37.0,324.8 L37.2,325.0 L37.5,325.0 L37.8,324.9 L38.0,324.6 L38.2,324.9 L38.5,324.8 L38.8,324.7 L39.0,325.0 L39.2,324.9 L39.5,324.6 L39.8,324.7 L40.0,324.8 L40.2,324.9 L40.5,324.7 L40.8,324.8 L41.0,325.0 L41.2,324.7 L41.5,324.9 L41.8,324.8 L42.0,325.1 L42.2,325.1 L42.5,324.8 L42.8,324.9 L43.0,324.7 L43.2,324.8 L43.5,324.9 L43.8,324.9 L44.0,324.8 L44.2,324.6 L44.5,324.7 L44.8,324.9 L45.0,324.7 L45.2,324.8 L45.5,324.9 L45.8,325.1 L46.0,324.9 L46.2,324.7 L46.5,324.9 L46.8,324.8 L47.0,325.0 L47.2,324.7 L47.5,324.7 L47.8,324.8 L48.0,325.1 L48.2,324.7 L48.5,324.7 L48.8,324.7 L49.0,324.7 L49.2,324.8 L49.5,324.8 L49.8,325.0 L50.0,324.8 L50.2,324.9 L50.5,324.8 L50.8,325.0 L51.0,325.1 L51.2,324.8 L51.5,325.1 L51.8,324.8 L52.0,325.1 L52.2,324.9 L52.5,325.0 L52.8,324.8 L53.0,324.8 L53.2,324.7 L53.5,325.1 L53.8,324.8 L54.0,325.0 L54.2,324.9 L54.5,324.9 L54.8,324.7 L55.0,324.7 L55.2,324.8 L55.5,325.0 L55.8,324.9 L56.0,324.6 L56.2,325.0 L56.5,324.9 L56.8,324.7 L57.0,324.8 L57.2,324.7 L57.5,325.0 L57.8,324.9 L58.0,324.8 L58.2,324.8 L58.5,324.8 L58.8,324.8 L59.0,324.8 L59.2,325.0 L59.5,325.0 L59.8,325.0 L60.0,325.1 L60.2,325.0 L60.5,324.7 L60.8,324.7 L61.0,324.7 L61.2,324.8 L61.5,324.9 L61.8,325.1 L62.0,324.9 L62.2,324.9 L62.5,324.8 L62.8,325.1 L63.0,325.0 L63.2,324.8 L63.5,324.7 L63.8,325.1 L64.0,324.8 L64.2,325.1 L64.5,324.7 L64.8,325.0 L65.0,324.8 L65.2,325.1 L65.5,324.8 L65.8,324.7 L66.0,324.7 L66.2,325.0 L66.5,325.1 L66.8,325.0 L67.0,325.0 L67.2,324.8 L67.5,324.8 L67.8,324.7 L68.0,325.1 L68.2,324.7 L68.5,325.0 L68.8,324.8 L69.0,324.7 L69.2,324.9 L69.5,325.1 L69.8,324.8 L70.0,324.7 L70.2,325.0 L70.5,325.0 L70.8,324.9 L71.0,324.7 L71.2,325.1 L71.5,324.7 L71.8,324.7 L72.0,324.8 L72.2,324.9 L72.5,324.9 L72.8,324.9 L73.0,325.0 L73.2,325.1 L73.5,324.9 L73.8,324.7 L74.0,325.1 L74.2,324.7 L74.5,324.8 L74.8,324.7 L75.0,324.9 L75.2,325.0 L75.5,324.7 L75.8,324.8 L76.0,325.1 L76.2,325.0 L76.5,324.7 L76.8,325.0 L77.0,325.0 L77.2,324.9 L77.5,324.7 L77.8,325.0 L78.0,324.8 L78.2,324.7 L78.5,324.7 L78.8,324.8 L79.0,324.7 L79.2,324.8 L79.5,324.9 L79.8,324.9 L80.0,324.9 L80.2,325.0 L80.5,324.7 L80.8,324.8 L81.0,325.1 L81.2,325.1 L81.5,325.1 L81.8,325.0 L82.0,324.9 L82.2,325.0 L82.5,324.9 L82.8,324.7 L83.0,324.8 L83.2,324.7 L83.5,325.1 L83.8,324.8 L84.0,324.9 L84.2,324.9 L84.5,324.7 L84.8,325.0 L85.0,325.0 L85.2,325.0 L85.5,325.1 L85.8,324.8 L86.0,324.7 L86.2,325.0 L86.5,325.0 L86.8,324.8 L87.0,324.8 L87.2,324.7 L87.5,325.1 L87.8,324.9 L88.0,325.1 L88.2,324.8 L88.5,324.8 L88.8,324.9 L89.0,325.0 L89.2,325.1 L89.5,324.8 L89.8,325.0 L90.0,324.9 L90.2,325.1 L90.5,325.0 L90.8,324.9 L91.0,324.8 L91.2,324.8 L91.5,325.1 L91.8,325.0 L92.0,324.8 L92.2,324.7 L92.5,324.7 L92.8,325.1 L93.0,324.7 L93.2,325.1 L93.5,324.9 L93.8,324.9 L94.0,324.9 L94.2,324.9 L94.5,324.9 L94.8,324.7 L95.0,325.1 L95.2,324.7 L95.5,324.7 L95.8,325.0 L96.0,325.0 L96.2,325.1 L96.5,325.0 L96.8,325.1 L97.0,324.7 L97.2,324.7 L97.5,324.8 L97.8,325.0 L98.0,324.7 L98.2,324.9 L98.5,325.0 L98.8,324.7 L99.0,324.9 L99.2,325.1 L99.5,325.0 L99.8,324.8 L100.0,324.9 L100.2,324.8 L100.5,325.1 L100.8,325.0 L101.0,325.0 L101.2,324.8 L101.5,325.0 L101.8,324.9 L102.0,325.0 L102.2,324.8 L102.5,325.1 L102.8,325.0 L103.0,324.9 L103.2,324.9 L103.5,325.1 L103.8,324.9 L104.0,325.1 L104.2,324.7 L104.5,325.1 L104.8,325.0 L105.0,324.9 L105.2,325.1 L105.5,324.7 L105.8,324.8 L106.0,325.0 L106.2,325.1 L106.5,324.8 L106.8,325.1 L107.0,325.0 L107.2,324.7 L107.5,324.7 L107.8,324.7 L108.0,324.9 L108.2,324.8 L108.5,324.8 L108.8,324.9 L109.0,324.7 L109.2,325.1 L109.5,325.1 L109.8,324.9 L110.0,324.9 L110.2,324.8 L110.5,325.0 L110.8,324.8 L111.0,325.1 L111.2,325.1 L111.5,325.0 L111.8,325.1 L112.0,324.7 L112.2,324.7 L112.5,324.8 L112.8,324.7 L113.0,324.9 L113.2,325.1 L113.5,325.1 L113.8,325.1 L114.0,324.8 L114.2,324.8 L114.5,324.7 L114.8,324.8 L115.0,324.7 L115.2,324.9 L115.5,324.8 L115.8,325.0 L116.0,324.9 L116.2,324.9 L116.5,324.8 L116.8,325.0 L117.0,325.0 L117.2,325.0 L117.5,324.9 L117.8,324.9 L118.0,324.8 L118.2,324.7 L118.5,324.9 L118.8,325.0 L119.0,324.7 L119.2,325.1 L119.5,325.1 L119.8,325.1 L120.0,325.0 L120.2,324.9 L120.5,324.7 L120.8,324.8 L121.0,325.0 L121.2,325.1 L121.5,324.6 L121.8,324.4 L122.0,324.1 L122.2,323.2 L122.5,321.9 L122.8,320.4 L123.0,320.2 L123.2,320.5 L123.5,322.1 L123.8,323.1 L124.0,324.1 L124.2,324.5 L124.5,325.0 L124.8,324.9 L125.0,325.0 L125.2,324.7 L125.5,324.9 L125.8,325.0 L126.0,325.1 L126.2,325.1 L126.5,324.7 L126.8,324.8 L127.0,325.1 L127.2,324.9 L127.5,325.1 L127.8,324.8 L128.0,324.7 L128.2,325.1 L128.5,324.8 L128.8,324.9 L129.0,324.8 L129.2,324.9 L129.5,325.1 L129.8,325.1 L130.0,325.1 L130.2,324.8 L130.5,325.0 L130.8,324.6 L131.0,324.8 L131.2,325.1 L131.5,324.7 L131.8,324.8 L132.0,324.8 L132.2,324.4 L132.5,323.2 L132.8,318.8 L133.0,309.7 L133.2,301.2 L133.5,299.7 L133.8,308.0 L134.0,317.2 L134.2,322.4 L134.5,324.1 L134.8,325.0 L135.0,325.0 L135.2,324.8 L135.5,325.0 L135.8,325.1 L136.0,325.1 L136.2,324.9 L136.5,324.8 L136.8,324.9 L137.0,325.1 L137.2,325.0 L137.5,325.0 L137.8,325.1 L138.0,324.8 L138.2,324.9 L138.5,325.1 L138.8,324.7 L139.0,325.1 L139.2,324.7 L139.5,324.9 L139.8,324.9 L140.0,324.7 L140.2,325.1 L140.5,324.9 L140.8,324.7 L141.0,324.9 L141.2,324.9 L141.5,324.9 L141.8,324.6 L142.0,324.7 L142.2,325.0 L142.5,324.7 L142.8,324.8 L143.0,325.1 L143.2,325.1 L143.5,325.1 L143.8,324.7 L144.0,324.7 L144.2,325.0 L144.5,324.9 L144.8,324.8 L145.0,324.7 L145.2,324.9 L145.5,324.8 L145.8,324.9 L146.0,325.1 L146.2,324.8 L146.5,324.7 L146.8,325.0 L147.0,324.7 L147.2,324.8 L147.5,324.9 L147.8,325.1 L148.0,324.8 L148.2,324.8 L148.5,324.9 L148.8,324.7 L149.0,324.8 L149.2,325.0 L149.5,324.8 L149.8,325.0 L150.0,324.7 L150.2,324.7 L150.5,325.0 L150.8,324.9 L151.0,325.1 L151.2,324.7 L151.5,325.0 L151.8,325.0 L152.0,324.8 L152.2,324.7 L152.5,325.0 L152.8,325.0 L153.0,324.9 L153.2,324.9 L153.5,325.0 L153.8,325.0 L154.0,324.9 L154.2,324.7 L154.5,324.9 L154.8,324.9 L155.0,325.1 L155.2,325.1 L155.5,324.9 L155.8,324.8 L156.0,324.8 L156.2,325.0 L156.5,325.0 L156.8,324.8 L157.0,325.0 L157.2,325.1 L157.5,324.8 L157.8,325.1 L158.0,324.9 L158.2,325.0 L158.5,325.1 L158.8,324.8 L159.0,324.8 L159.2,325.1 L159.5,324.7 L159.8,324.8 L160.0,324.9 L160.2,325.0 L160.5,325.0 L160.8,325.1 L161.0,325.0 L161.2,324.6 L161.5,324.7 L161.8,324.7 L162.0,324.9 L162.2,324.7 L162.5,324.9 L162.8,325.0 L163.0,324.7 L163.2,325.1 L163.5,324.9 L163.8,325.1 L164.0,324.8 L164.2,325.0 L164.5,324.9 L164.8,324.8 L165.0,325.0 L165.2,324.6 L165.5,324.8 L165.8,324.8 L166.0,325.1 L166.2,324.9 L166.5,324.6 L166.8,324.7 L167.0,324.9 L167.2,324.9 L167.5,324.5 L167.8,324.7 L168.0,324.4 L168.2,324.4 L168.5,324.2 L168.8,324.0 L169.0,324.1 L169.2,323.9 L169.5,323.8 L169.8,323.6 L170.0,323.6 L170.2,323.3 L170.5,323.4 L170.8,323.9 L171.0,324.0 L171.2,324.1 L171.5,324.1 L171.8,324.2 L172.0,324.7 L172.2,324.6 L172.5,324.4 L172.8,324.7 L173.0,324.7 L173.2,324.6 L173.5,325.1 L173.8,325.1 L174.0,325.0 L174.2,324.6 L174.5,324.9 L174.8,324.7 L175.0,325.0 L175.2,325.0 L175.5,325.0 L175.8,325.0 L176.0,324.7 L176.2,324.7 L176.5,324.7 L176.8,325.1 L177.0,325.1 L177.2,324.9 L177.5,324.8 L177.8,325.1 L178.0,324.7 L178.2,324.8 L178.5,324.6 L178.8,325.1 L179.0,324.9 L179.2,325.0 L179.5,325.0 L179.8,324.9 L180.0,325.1 L180.2,325.0 L180.5,325.1 L180.8,325.1 L181.0,324.7 L181.2,325.0 L181.5,324.8 L181.8,324.8 L182.0,324.8 L182.2,325.1 L182.5,324.7 L182.8,324.9 L183.0,324.7 L183.2,325.1 L183.5,324.9 L183.8,325.0 L184.0,324.9 L184.2,325.0 L184.5,324.8 L184.8,324.9 L185.0,325.0 L185.2,325.0 L185.5,325.1 L185.8,324.8 L186.0,325.1 L186.2,325.0 L186.5,324.9 L186.8,324.9 L187.0,324.9 L187.2,324.7 L187.5,324.7 L187.8,324.8 L188.0,324.7 L188.2,324.7 L188.5,325.0 L188.8,325.0 L189.0,325.0 L189.2,324.8 L189.5,325.0 L189.8,325.1 L190.0,325.0 L190.2,324.8 L190.5,324.9 L190.8,324.8 L191.0,324.8 L191.2,324.7 L191.5,325.1 L191.8,325.0 L192.0,325.1 L192.2,324.7 L192.5,324.8 L192.8,324.9 L193.0,324.7 L193.2,324.8 L193.5,324.9 L193.8,324.9 L194.0,325.1 L194.2,324.9 L194.5,325.0 L194.8,324.9 L195.0,325.0 L195.2,324.8 L195.5,324.6 L195.8,325.1 L196.0,325.0 L196.2,324.7 L196.5,324.7 L196.8,324.8 L197.0,325.0 L197.2,324.7 L197.5,324.7 L197.8,324.9 L198.0,324.7 L198.2,324.8 L198.5,324.8 L198.8,324.8 L199.0,324.7 L199.2,324.8 L199.5,324.8 L199.8,324.8 L200.0,324.9 L200.2,324.8 L200.5,324.8 L200.8,324.7 L201.0,325.1 L201.2,325.0 L201.5,324.9 L201.8,324.7 L202.0,324.8 L202.2,325.1 L202.5,324.9 L202.8,324.8 L203.0,325.1 L203.2,325.1 L203.5,324.7 L203.8,324.9 L204.0,324.9 L204.2,324.7 L204.5,324.8 L204.8,325.0 L205.0,325.0 L205.2,325.0 L205.5,325.0 L205.8,324.8 L206.0,324.7 L206.2,324.7 L206.5,325.1 L206.8,325.1 L207.0,325.1 L207.2,324.7 L207.5,325.0 L207.8,324.7 L208.0,324.8 L208.2,324.7 L208.5,325.1 L208.8,325.1 L209.0,325.1 L209.2,324.8 L209.5,325.1 L209.8,324.8 L210.0,324.9 L210.2,325.0 L210.5,324.8 L210.8,324.8 L211.0,324.7 L211.2,325.0 L211.5,324.7 L211.8,324.7 L212.0,324.8 L212.2,324.9 L212.5,324.9 L212.8,324.8 L213.0,324.8 L213.2,324.5 L213.5,323.9 L213.8,323.6 L214.0,322.8 L214.2,322.1 L214.5,321.5 L214.8,321.0 L215.0,320.9 L215.2,321.4 L215.5,321.7 L215.8,322.1 L216.0,322.8 L216.2,323.6 L216.5,324.1 L216.8,324.2 L217.0,324.4 L217.2,324.8 L217.5,324.9 L217.8,324.7 L218.0,325.0 L218.2,324.8 L218.5,324.9 L218.8,324.9 L219.0,324.8 L219.2,325.1 L219.5,324.8 L219.8,324.9 L220.0,324.9 L220.2,325.1 L220.5,325.1 L220.8,325.0 L221.0,324.9 L221.2,325.0 L221.5,325.0 L221.8,325.1 L222.0,325.1 L222.2,325.0 L222.5,324.8 L222.8,324.9 L223.0,324.9 L223.2,324.8 L223.5,325.0 L223.8,324.8 L224.0,325.0 L224.2,324.9 L224.5,324.9 L224.8,325.0 L225.0,325.0 L225.2,325.1 L225.5,325.1 L225.8,325.0 L226.0,324.8 L226.2,325.0 L226.5,324.9 L226.8,325.1 L227.0,324.9 L227.2,324.8 L227.5,324.7 L227.8,324.9 L228.0,324.9 L228.2,324.8 L228.5,324.7 L228.8,324.9 L229.0,324.7 L229.2,324.7 L229.5,324.9 L229.8,324.8 L230.0,324.9 L230.2,324.9 L230.5,324.8 L230.8,324.7 L231.0,324.7 L231.2,324.9 L231.5,325.1 L231.8,324.8 L232.0,324.8 L232.2,324.8 L232.5,325.0 L232.8,324.9 L233.0,325.0 L233.2,324.7 L233.5,324.7 L233.8,324.8 L234.0,324.8 L234.2,324.8 L234.5,324.8 L234.8,325.1 L235.0,324.9 L235.2,324.9 L235.5,325.1 L235.8,325.0 L236.0,324.9 L236.2,325.1 L236.5,324.8 L236.8,324.7 L237.0,325.1 L237.2,324.9 L237.5,324.9 L237.8,324.7 L238.0,325.0 L238.2,324.8 L238.5,324.9 L238.8,324.7 L239.0,325.0 L239.2,324.7 L239.5,324.6 L239.8,324.9 L240.0,324.4 L240.2,324.4 L240.5,324.3 L240.8,324.5 L241.0,323.9 L241.2,323.8 L241.5,324.0 L241.8,323.6 L242.0,323.8 L242.2,324.0 L242.5,324.0 L242.8,324.1 L243.0,323.9 L243.2,324.4 L243.5,324.3 L243.8,324.6 L244.0,324.6 L244.2,324.9 L244.5,324.7 L244.8,324.7 L245.0,324.7 L245.2,324.8 L245.5,324.6 L245.8,324.7 L246.0,325.1 L246.2,324.9 L246.5,325.1 L246.8,324.7 L247.0,324.9 L247.2,324.9 L247.5,324.7 L247.8,324.8 L248.0,325.1 L248.2,325.0 L248.5,324.9 L248.8,325.0 L249.0,325.1 L249.2,325.1 L249.5,324.9 L249.8,324.7 L250.0,325.1 L250.2,324.7 L250.5,324.8 L250.8,324.7 L251.0,324.9 L251.2,324.9 L251.5,324.9 L251.8,324.9 L252.0,324.7 L252.2,325.0 L252.5,324.9 L252.8,324.8 L253.0,325.1 L253.2,325.1 L253.5,325.1 L253.8,325.1 L254.0,324.7 L254.2,324.8 L254.5,324.9 L254.8,324.8 L255.0,325.0 L255.2,325.1 L255.5,324.7 L255.8,324.9 L256.0,325.1 L256.2,325.1 L256.5,324.9 L256.8,324.7 L257.0,324.9 L257.2,324.9 L257.5,325.0 L257.8,324.7 L258.0,324.8 L258.2,325.1 L258.5,324.7 L258.8,325.0 L259.0,324.7 L259.2,325.0 L259.5,324.9 L259.8,325.1 L260.0,324.8 L260.2,325.1 L260.5,324.8 L260.8,324.7 L261.0,324.7 L261.2,324.7 L261.5,324.8 L261.8,325.1 L262.0,324.8 L262.2,325.0 L262.5,324.7 L262.8,324.9 L263.0,324.9 L263.2,324.7 L263.5,324.9 L263.8,324.9 L264.0,324.8 L264.2,325.1 L264.5,325.0 L264.8,324.7 L265.0,324.7 L265.2,324.7 L265.5,324.8 L265.8,325.0 L266.0,325.1 L266.2,325.1 L266.5,325.1 L266.8,324.7 L267.0,325.0 L267.2,325.0 L267.5,324.9 L267.8,325.1 L268.0,324.9 L268.2,324.7 L268.5,324.8 L268.8,324.7 L269.0,325.0 L269.2,325.0 L269.5,325.1 L269.8,324.7 L270.0,324.7 L270.2,325.1 L270.5,324.8 L270.8,324.8 L271.0,325.1 L271.2,324.7 L271.5,325.0 L271.8,325.1 L272.0,324.9 L272.2,325.0 L272.5,324.7 L272.8,325.0 L273.0,325.0 L273.2,325.0 L273.5,324.9 L273.8,324.7 L274.0,324.8 L274.2,325.0 L274.5,324.7 L274.8,324.7 L275.0,324.8 L275.2,325.0 L275.5,324.9 L275.8,324.8 L276.0,325.1 L276.2,324.9 L276.5,324.8 L276.8,324.9 L277.0,325.1 L277.2,324.8 L277.5,324.9 L277.8,324.9 L278.0,325.1 L278.2,325.0 L278.5,324.7 L278.8,324.9 L279.0,324.8 L279.2,324.9 L279.5,325.0 L279.8,324.6 L280.0,324.8 L280.2,324.7 L280.5,324.7 L280.8,324.8 L281.0,324.5 L281.2,324.4 L281.5,324.1 L281.8,323.9 L282.0,323.9 L282.2,323.7 L282.5,323.5 L282.8,323.7 L283.0,323.5 L283.2,323.5 L283.5,323.5 L283.8,323.9 L284.0,324.1 L284.2,324.2 L284.5,324.1 L284.8,324.1 L285.0,324.5 L285.2,324.3 L285.5,324.8 L285.8,324.8 L286.0,324.7 L286.2,324.7 L286.5,324.8 L286.8,324.5 L287.0,324.5 L287.2,324.6 L287.5,324.4 L287.8,324.2 L288.0,323.7 L288.2,323.6 L288.5,323.4 L288.8,323.1 L289.0,323.2 L289.2,323.1 L289.5,323.2 L289.8,323.1 L290.0,323.3 L290.2,323.3 L290.5,323.5 L290.8,323.6 L291.0,323.9 L291.2,324.4 L291.5,324.3 L291.8,324.2 L292.0,324.5 L292.2,324.6 L292.5,324.8 L292.8,324.8 L293.0,324.8 L293.2,325.1 L293.5,325.0 L293.8,324.7 L294.0,324.7 L294.2,325.0 L294.5,324.9 L294.8,325.0 L295.0,324.9 L295.2,324.7 L295.5,324.9 L295.8,325.1 L296.0,324.9 L296.2,324.7 L296.5,324.7 L296.8,325.1 L297.0,324.9 L297.2,324.7 L297.5,325.0 L297.8,325.1 L298.0,325.1 L298.2,325.0 L298.5,325.1 L298.8,324.7 L299.0,324.9 L299.2,325.1 L299.5,324.8 L299.8,324.7 L300.0,325.1 L300.2,325.0 L300.5,324.7 L300.8,324.7 L301.0,324.9 L301.2,325.1 L301.5,325.0 L301.8,325.1 L302.0,324.7 L302.2,324.9 L302.5,324.7 L302.8,324.8 L303.0,324.7 L303.2,324.9 L303.5,324.7 L303.8,325.0 L304.0,325.0 L304.2,325.1 L304.5,325.0 L304.8,324.7 L305.0,325.1 L305.2,324.9 L305.5,325.1 L305.8,324.9 L306.0,324.7 L306.2,325.0 L306.5,324.7 L306.8,325.1 L307.0,324.9 L307.2,325.1 L307.5,324.9 L307.8,324.8 L308.0,325.0 L308.2,325.0 L308.5,324.9 L308.8,324.8 L309.0,324.9 L309.2,325.0 L309.5,324.8 L309.8,324.7 L310.0,324.9 L310.2,325.0 L310.5,324.7 L310.8,324.8 L311.0,325.1 L311.2,324.8 L311.5,325.0 L311.8,324.8 L312.0,324.7 L312.2,324.9 L312.5,325.1 L312.8,325.0 L313.0,324.7 L313.2,325.0 L313.5,325.0 L313.8,324.9 L314.0,325.0 L314.2,324.9 L314.5,324.7 L314.8,325.0 L315.0,324.7 L315.2,324.8 L315.5,325.1 L315.8,324.9 L316.0,324.9 L316.2,325.0 L316.5,324.9 L316.8,324.8 L317.0,324.9 L317.2,324.7 L317.5,324.8 L317.8,324.7 L318.0,325.1 L318.2,325.1 L318.5,325.0 L318.8,324.7 L319.0,325.1 L319.2,324.8 L319.5,325.1 L319.8,325.0 L320.0,325.0 L320.2,325.0 L320.5,324.8 L320.8,325.1 L321.0,324.9 L321.2,325.0 L321.5,325.1 L321.8,324.8 L322.0,324.9 L322.2,324.8 L322.5,324.7 L322.8,325.1 L323.0,325.0 L323.2,324.9 L323.5,324.9 L323.8,325.1 L324.0,324.7 L324.2,324.8 L324.5,325.0 L324.8,324.9 L325.0,324.9 L325.2,324.8 L325.5,324.8 L325.8,325.0 L326.0,324.8 L326.2,325.1 L326.5,325.1 L326.8,325.1 L327.0,324.8 L327.2,324.9 L327.5,324.7 L327.8,324.8 L328.0,324.7 L328.2,324.9 L328.5,325.1 L328.8,325.0 L329.0,324.8 L329.2,324.8 L329.5,325.1 L329.8,324.6 L330.0,325.0 L330.2,325.0 L330.5,324.5 L330.8,324.9 L331.0,324.6 L331.2,324.4 L331.5,324.3 L331.8,324.3 L332.0,324.1 L332.2,324.2 L332.5,324.1 L332.8,323.7 L333.0,323.6 L333.2,324.0 L333.5,324.0 L333.8,324.1 L334.0,323.9 L334.2,324.0 L334.5,324.5 L334.8,324.4 L335.0,324.6 L335.2,324.9 L335.5,324.6 L335.8,324.9 L336.0,324.6 L336.2,324.9 L336.5,325.0 L336.8,324.7 L337.0,325.0 L337.2,325.1 L337.5,325.1 L337.8,325.0 L338.0,325.1 L338.2,325.0 L338.5,324.9 L338.8,325.1 L339.0,325.1 L339.2,325.0 L339.5,325.0 L339.8,324.7 L340.0,324.8 L340.2,324.8 L340.5,325.1 L340.8,325.0 L341.0,324.8 L341.2,325.1 L341.5,324.7 L341.8,324.7 L342.0,324.8 L342.2,324.7 L342.5,325.1 L342.8,324.8 L343.0,324.8 L343.2,325.1 L343.5,324.9 L343.8,325.0 L344.0,324.9 L344.2,324.9 L344.5,325.1 L344.8,324.8 L345.0,324.9 L345.2,324.9 L345.5,324.7 L345.8,324.7 L346.0,324.9 L346.2,325.0 L346.5,324.9 L346.8,324.7 L347.0,325.1 L347.2,324.7 L347.5,325.1 L347.8,324.7 L348.0,325.0 L348.2,324.7 L348.5,324.8 L348.8,324.9 L349.0,325.0 L349.2,324.9 L349.5,324.9 L349.8,324.9 L350.0,324.9 L350.2,324.8 L350.5,325.1 L350.8,324.7 L351.0,324.7 L351.2,324.9 L351.5,324.8 L351.8,325.0 L352.0,324.7 L352.2,325.0 L352.5,324.8 L352.8,325.1 L353.0,324.8 L353.2,324.9 L353.5,324.8 L353.8,324.9 L354.0,324.8 L354.2,325.0 L354.5,324.9 L354.8,325.0 L355.0,324.8 L355.2,324.9 L355.5,324.9 L355.8,325.0 L356.0,325.0 L356.2,324.9 L356.5,324.7 L356.8,324.7 L357.0,324.7 L357.2,324.7 L357.5,324.7 L357.8,325.0 L358.0,324.8 L358.2,325.1 L358.5,324.8 L358.8,324.8 L359.0,324.7 L359.2,324.7 L359.5,325.0 L359.8,324.9 L360.0,324.8 L360.2,325.1 L360.5,325.0 L360.8,324.9 L361.0,325.0 L361.2,325.0 L361.5,324.9 L361.8,324.7 L362.0,324.8 L362.2,325.1 L362.5,324.8 L362.8,325.0 L363.0,324.7 L363.2,325.0 L363.5,325.1 L363.8,324.8 L364.0,324.8 L364.2,324.9 L364.5,324.8 L364.8,324.8 L365.0,324.7 L365.2,325.0 L365.5,324.9 L365.8,325.1 L366.0,325.1 L366.2,325.1 L366.5,325.1 L366.8,325.1 L367.0,324.7 L367.2,324.7 L367.5,325.1 L367.8,325.1 L368.0,325.0 L368.2,325.0 L368.5,324.9 L368.8,324.9 L369.0,324.7 L369.2,324.9 L369.5,324.8 L369.8,324.7 L370.0,325.1 L370.2,324.9 L370.5,325.1 L370.8,324.8 L371.0,324.9 L371.2,324.8 L371.5,325.1 L371.8,324.8 L372.0,325.0 L372.2,324.9 L372.5,324.8 L372.8,324.7 L373.0,324.9 L373.2,324.9 L373.5,325.1 L373.8,324.8 L374.0,324.7 L374.2,324.8 L374.5,325.1 L374.8,324.8 L375.0,325.0 L375.2,324.7 L375.5,324.7 L375.8,325.0 L376.0,324.9 L376.2,324.7 L376.5,324.9 L376.8,325.1 L377.0,324.8 L377.2,324.9 L377.5,324.9 L377.8,324.9 L378.0,324.7 L378.2,325.1 L378.5,324.9 L378.8,324.8 L379.0,324.8 L379.2,324.7 L379.5,325.1 L379.8,325.1 L380.0,324.8 L380.2,325.0 L380.5,324.9 L380.8,324.7 L381.0,324.7 L381.2,325.0 L381.5,324.7 L381.8,324.9 L382.0,324.7 L382.2,324.7 L382.5,324.7 L382.8,325.0 L383.0,325.0 L383.2,325.1 L383.5,325.0 L383.8,324.9 L384.0,324.7 L384.2,325.1 L384.5,324.9 L384.8,325.1 L385.0,324.7 L385.2,325.1 L385.5,324.9 L385.8,324.8 L386.0,324.9 L386.2,324.7 L386.5,324.9 L386.8,324.8 L387.0,325.0 L387.2,324.7 L387.5,325.0 L387.8,325.0 L388.0,325.0 L388.2,325.1 L388.5,324.8 L388.8,325.0 L389.0,324.8 L389.2,325.1 L389.5,325.1 L389.8,325.0 L390.0,324.9 L390.2,324.8 L390.5,325.1 L390.8,325.1 L391.0,325.1 L391.2,324.8 L391.5,325.1 L391.8,325.0 L392.0,325.1 L392.2,325.1 L392.5,324.9 L392.8,324.8 L393.0,325.0 L393.2,325.0 L393.5,324.9 L393.8,325.1 L394.0,324.7 L394.2,324.7 L394.5,324.9 L394.8,324.7 L395.0,325.1 L395.2,324.7 L395.5,325.1 L395.8,324.8 L396.0,324.7 L396.2,325.0 L396.5,325.0 L396.8,324.9 L397.0,324.9 L397.2,324.9 L397.5,325.1 L397.8,324.9 L398.0,324.9 L398.2,324.9 L398.5,324.9 L398.8,325.0 L399.0,324.7 L399.2,325.0 L399.5,325.1 L399.8,325.0 L400.0,324.9 L400.2,324.8 L400.5,324.7 L400.8,324.7 L401.0,324.9 L401.2,325.1 L401.5,325.1 L401.8,324.7 L402.0,325.0 L402.2,325.1 L402.5,324.9 L402.8,325.1 L403.0,324.7 L403.2,324.8 L403.5,324.9 L403.8,325.0 L404.0,324.9 L404.2,324.8 L404.5,325.1 L404.8,324.8 L405.0,324.9 L405.2,324.8 L405.5,324.9 L405.8,325.0 L406.0,324.8 L406.2,325.0 L406.5,324.9 L406.8,324.7 L407.0,325.1 L407.2,324.8 L407.5,324.9 L407.8,325.1 L408.0,324.8 L408.2,324.7 L408.5,324.8 L408.8,324.7 L409.0,325.1 L409.2,324.9 L409.5,324.7 L409.8,324.8 L410.0,324.9 L410.2,324.7 L410.5,324.8 L410.8,325.1 L411.0,324.9 L411.2,324.8 L411.5,324.9 L411.8,324.7 L412.0,324.9 L412.2,325.0 L412.5,324.7 L412.8,324.9 L413.0,324.8 L413.2,325.0 L413.5,325.0 L413.8,325.1 L414.0,325.0 L414.2,324.7 L414.5,324.7 L414.8,325.0 L415.0,325.1 L415.2,324.7 L415.5,324.9 L415.8,324.8 L416.0,324.9 L416.2,325.1 L416.5,324.9 L416.8,325.0 L417.0,325.0 L417.2,324.8 L417.5,325.0 L417.8,324.8 L418.0,324.9 L418.2,324.9 L418.5,325.0 L418.8,324.7 L419.0,325.1 L419.2,324.7 L419.5,324.8 L419.8,325.1 L420.0,325.1 L420.2,324.8 L420.5,325.1 L420.8,324.7 L421.0,325.1 L421.2,324.8 L421.5,324.7 L421.8,325.0 L422.0,324.7 L422.2,325.0 L422.5,324.7 L422.8,324.7 L423.0,324.8 L423.2,324.7 L423.5,324.9 L423.8,324.8 L424.0,325.0 L424.2,324.9 L424.5,325.1 L424.8,325.1 L425.0,324.7 L425.2,325.1 L425.5,325.1 L425.8,324.9 L426.0,324.9 L426.2,324.7 L426.5,324.8 L426.8,324.8 L427.0,324.7 L427.2,325.0 L427.5,324.8 L427.8,325.0 L428.0,324.9 L428.2,325.1 L428.5,324.7 L428.8,325.1 L429.0,324.9 L429.2,325.0 L429.5,324.8 L429.8,325.0 L430.0,324.9 L430.2,325.0 L430.5,324.9 L430.8,324.7 L431.0,324.8 L431.2,325.0 L431.5,324.7 L431.8,325.0 L432.0,324.9 L432.2,325.0 L432.5,324.8 L432.8,324.9 L433.0,324.9 L433.2,325.0 L433.5,324.7 L433.8,324.9 L434.0,324.8 L434.2,324.9 L434.5,324.8 L434.8,324.8 L435.0,324.8 L435.2,325.1 L435.5,324.8 L435.8,325.1 L436.0,325.0 L436.2,324.8 L436.5,324.9 L436.8,324.7 L437.0,325.1 L437.2,325.0 L437.5,324.7 L437.8,324.9 L438.0,324.9 L438.2,325.0 L438.5,324.8 L438.8,325.1 L439.0,325.0 L439.2,324.7 L439.5,325.1 L439.8,325.1 L440.0,324.8 L440.2,325.0 L440.5,325.1 L440.8,325.1 L441.0,324.7 L441.2,325.1 L441.5,324.8 L441.8,325.0 L442.0,325.0 L442.2,324.9 L442.5,325.1 L442.8,325.0 L443.0,325.1 L443.2,325.0 L443.5,324.8 L443.8,324.8 L444.0,324.7 L444.2,324.4 L444.5,324.3 L444.8,324.2 L445.0,324.0 L445.2,323.9 L445.5,324.1 L445.8,324.0 L446.0,323.9 L446.2,323.9 L446.5,323.9 L446.8,324.0 L447.0,324.2 L447.2,324.0 L447.5,324.3 L447.8,324.7 L448.0,324.4 L448.2,324.6 L448.5,324.5 L448.8,324.7 L449.0,325.0 L449.2,324.6 L449.5,325.0 L449.8,325.0 L450.0,325.1 L450.2,324.8 L450.5,325.1 L450.8,324.8 L451.0,324.9 L451.2,325.1 L451.5,324.9 L451.8,325.0 L452.0,324.7 L452.2,324.6 L452.5,324.8 L452.8,324.7 L453.0,325.1 L453.2,324.8 L453.5,325.1 L453.8,325.0 L454.0,324.7 L454.2,325.0 L454.5,324.8 L454.8,324.9 L455.0,324.7 L455.2,325.1 L455.5,325.0 L455.8,324.9 L456.0,325.0 L456.2,324.8 L456.5,324.7 L456.8,324.8 L457.0,325.0 L457.2,324.9 L457.5,324.7 L457.8,324.8 L458.0,324.9 L458.2,324.7 L458.5,324.7 L458.8,324.9 L459.0,324.7 L459.2,325.1 L459.5,324.7 L459.8,325.0 L460.0,325.0 L460.2,324.8 L460.5,324.9 L460.8,325.1 L461.0,325.0 L461.2,324.8 L461.5,325.1 L461.8,324.8 L462.0,325.1 L462.2,324.8 L462.5,324.9 L462.8,324.8 L463.0,325.0 L463.2,325.1 L463.5,325.0 L463.8,324.7 L464.0,325.1 L464.2,325.0 L464.5,324.9 L464.8,325.1 L465.0,324.7 L465.2,324.9 L465.5,325.0 L465.8,325.0 L466.0,325.0 L466.2,324.7 L466.5,324.9 L466.8,324.8 L467.0,325.0 L467.2,324.8 L467.5,324.9 L467.8,324.9 L468.0,324.9 L468.2,325.1 L468.5,324.8 L468.8,324.8 L469.0,324.7 L469.2,324.7 L469.5,325.1 L469.8,325.1 L470.0,324.7 L470.2,324.8 L470.5,325.1 L470.8,325.1 L471.0,325.1 L471.2,325.1 L471.5,324.8 L471.8,324.7 L472.0,324.8 L472.2,324.9 L472.5,324.7 L472.8,324.8 L473.0,324.9 L473.2,325.0 L473.5,324.7 L473.8,324.7 L474.0,324.8 L474.2,324.7 L474.5,324.7 L474.8,324.7 L475.0,325.0 L475.2,325.1 L475.5,324.7 L475.8,325.1 L476.0,325.1 L476.2,325.0 L476.5,324.8 L476.8,325.1 L477.0,324.7 L477.2,324.7 L477.5,325.1 L477.8,324.8 L478.0,325.1 L478.2,325.0 L478.5,324.7 L478.8,324.7 L479.0,325.0 L479.2,324.7 L479.5,325.0 L479.8,325.0 L480.0,324.8 L480.2,324.9 L480.5,324.8 L480.8,325.1 L481.0,325.0 L481.2,325.0 L481.5,325.0 L481.8,324.7 L482.0,325.1 L482.2,325.0 L482.5,324.9 L482.8,324.9 L483.0,324.9 L483.2,325.0 L483.5,324.9 L483.8,324.8 L484.0,324.9 L484.2,324.8 L484.5,324.7 L484.8,324.9 L485.0,325.1 L485.2,325.0 L485.5,324.8 L485.8,324.9 L486.0,324.9 L486.2,324.9 L486.5,324.9 L486.8,324.9 L487.0,325.0 L487.2,325.1 L487.5,324.9 L487.8,325.0 L488.0,325.0 L488.2,324.7 L488.5,324.8 L488.8,324.8 L489.0,324.8 L489.2,324.9 L489.5,324.8 L489.8,325.1 L490.0,325.0 L490.2,324.8 L490.5,325.0 L490.8,325.1 L491.0,324.7 L491.2,325.0 L491.5,325.1 L491.8,324.8 L492.0,325.1 L492.2,325.1 L492.5,324.8 L492.8,324.7 L493.0,325.1 L493.2,324.9 L493.5,324.8 L493.8,324.9 L494.0,325.0 L494.2,325.1 L494.5,325.1 L494.8,325.0 L495.0,324.7 L495.2,324.8 L495.5,324.7 L495.8,324.8 L496.0,324.8 L496.2,324.7 L496.5,324.9 L496.8,324.7 L497.0,325.0 L497.2,324.9 L497.5,324.8 L497.8,325.0 L498.0,324.8 L498.2,324.7 L498.5,325.1 L498.8,325.0 L499.0,325.1 L499.2,324.8 L499.5,324.8 L499.8,325.0 L500.0,324.7 L500.2,325.1 L500.5,325.0 L500.8,324.9 L501.0,324.7 L501.2,324.8 L501.5,324.9 L501.8,325.1 L502.0,324.7 L502.2,324.9 L502.5,324.7 L502.8,325.1 L503.0,325.0 L503.2,325.1 L503.5,325.0 L503.8,324.7 L504.0,324.8 L504.2,324.7 L504.5,324.9 L504.8,324.7 L505.0,324.7 L505.2,324.7 L505.5,325.1 L505.8,325.0 L506.0,324.8 L506.2,325.1 L506.5,324.7 L506.8,324.7 L507.0,324.8 L507.2,325.1 L507.5,324.7 L507.8,325.0 L508.0,324.9 L508.2,325.0 L508.5,324.8 L508.8,324.7 L509.0,324.7 L509.2,325.0 L509.5,324.9 L509.8,325.0 L510.0,324.7 L510.2,324.8 L510.5,324.8 L510.8,325.1 L511.0,325.0 L511.2,324.7 L511.5,325.0 L511.8,324.7 L512.0,324.9 L512.2,324.8 L512.5,325.0 L512.8,325.0 L513.0,325.0 L513.2,324.7 L513.5,324.7 L513.8,325.0 L514.0,325.0 L514.2,324.7 L514.5,325.1 L514.8,325.1 L515.0,324.8 L515.2,324.9 L515.5,325.0 L515.8,325.1 L516.0,325.0 L516.2,324.9 L516.5,325.0 L516.8,324.9 L517.0,324.7 L517.2,324.9 L517.5,324.9 L517.8,324.8 L518.0,324.8 L518.2,324.8 L518.5,324.8 L518.8,325.0 L519.0,325.1 L519.2,324.9 L519.5,325.1 L519.8,324.7 L520.0,324.9 L520.2,325.0 L520.5,325.0 L520.8,324.8 L521.0,324.7 L521.2,325.1 L521.5,325.0 L521.8,325.0 L522.0,324.8 L522.2,324.7 L522.5,324.9 L522.8,324.9 L523.0,325.1 L523.2,325.0 L523.5,325.0 L523.8,324.9 L524.0,325.0 L524.2,324.7 L524.5,325.1 L524.8,324.9 L525.0,324.9 L525.2,324.7 L525.5,324.7 L525.8,325.0 L526.0,325.0 L526.2,325.0 L526.5,324.8 L526.8,324.9 L527.0,325.0 L527.2,325.0 L527.5,325.1 L527.8,324.7 L528.0,325.0 L528.2,324.7 L528.5,325.0 L528.8,324.9 L529.0,324.7 L529.2,324.9 L529.5,325.0 L529.8,325.1 L530.0,324.7 L530.2,324.9 L530.5,325.0 L530.8,324.7 L531.0,325.1 L531.2,325.1 L531.5,324.8 L531.8,324.8 L532.0,324.7 L532.2,324.8 L532.5,324.9 L532.8,325.0 L533.0,325.1 L533.2,324.9 L533.5,325.1 L533.8,324.9 L534.0,325.0 L534.2,324.7 L534.5,324.9 L534.8,324.7 L535.0,324.7 L535.2,325.1 L535.5,324.7 L535.8,324.8 L536.0,324.9 L536.2,324.9 L536.5,324.7 L536.8,324.7 L537.0,325.0 L537.2,324.9 L537.5,324.7 L537.8,324.9 L538.0,324.8 L538.2,325.1 L538.5,324.7" fill="none" stroke="#1a9a1a" stroke-width="0.75"/>
  <g stroke="#e0e0e0" stroke-width="1">
    <path d="M0,302 H3 M0,313.6 H3 M0,337.4 H3 M0,349.4 H3"/>
  </g>
</svg>
<div class="yl" style="left:2.8px;top:93.1px">8000</div>
<div class="yl" style="left:2.6px;top:140.1px">6000</div>
<div class="yl" style="left:2.6px;top:187.0px">4000</div>
<div class="yl" style="left:2.6px;top:233.9px">2000</div>
<div class="yl" style="left:140.8px;top:283.7px">20</div>
<div class="yl" style="left:298.4px;top:283.7px">40</div>
<div class="yl" style="left:456.7px;top:283.7px">60</div>
<div class="yl" style="left:2.6px;top:299.9px">2000</div>
<div class="yl" style="left:2.6px;top:311.8px">1000</div>
<div class="yl" style="left:2.8px;top:334.7px">-1000</div>
<div class="yl" style="left:2.6px;top:346.6px">-2000</div>
<div class="a" style="left:550.6px;top:301.8px;width:2px;height:2px;background:#e8e8e8"></div>
<div class="yl" style="left:553.6px;top:300px;font-size:6.6px">0.5</div>

<!-- splitter lines -->
<div class="a" style="left:0;top:353px;width:564px;height:2px;background:#fbfbfb"></div>
<div class="a" style="left:0;top:355px;width:564px;height:1px;background:#dcdcdb"></div>
<div class="a" style="left:0;top:356px;width:564px;height:2px;background:#fbfbfb"></div>

<!-- output -->
<div class="a" style="left:0;top:358px;width:558px;height:36px;background:#002b36"></div>
<div class="a" style="left:0;top:358px;width:558px;height:1px;background:#001c24"></div>
<div class="a" style="left:558px;top:358px;width:6px;height:36px;background:#d3d3d2"></div>
<div class="a" style="left:559.5px;top:372px;width:3px;height:20px;background:#7c7c7c;border-radius:1.5px"></div>
<div class="t" style="left:1px;top:358.5px;color:#93a1a1">2267 points. No explicit std. dev. Set as sqrt(y)</div>
<div class="t" style="left:1px;top:367.7px;color:#859900">=-&gt; @+ &lt; '/home/aleplo/test/Documents/Chem/Master/Data/MoS2-templating/PXRD/R152.raw'</div>
<div class="t" style="left:1px;top:376.9px;color:#93a1a1">2267 points. No explicit std. dev. Set as sqrt(y)</div>

<!-- input -->
<div class="a" style="left:0;top:394px;width:564px;height:17px;background:#fff;border-left:1px solid #c4c4c4;border-bottom:1px solid #c9c9c9"></div>
<div class="a" style="left:555px;top:395px;width:9px;height:15px;background:#fbfbfb;border-left:1px solid #dcdcdc"></div>
<div class="a" style="left:556px;top:402px;width:7px;height:1px;background:#ececec"></div><svg class="a" style="left:556px;top:395px" width="8" height="15"><path d="M1.8,4.5 L3.8,2.5 L5.8,4.5 Z" fill="#444"/><path d="M1.8,10.5 L3.8,12.5 L5.8,10.5 Z" fill="#444"/></svg>

<!-- status bar -->
<div class="a" style="left:534px;top:412px;width:1px;height:11px;background:#cfcfcd"></div>

<div class="a" style="left:657px;top:411px;width:88px;height:1px;background:#d4d4d2"></div>
<div class="a" style="left:644.5px;top:411.5px;width:12.5px;height:12px;background:linear-gradient(#ececeb,#dededd);border:1px solid #c4c4c2;border-radius:2px"></div>
<svg class="a" style="left:646px;top:413px" width="9" height="8"><path d="M1,2 L3,2 L4,5 M3.5,2.5 L5,5.5 L6,2 L8,4" fill="none" stroke="#222" stroke-width="1.1"/></svg>
<div class="t" style="left:679.5px;top:414.6px">zoom</div>
<svg class="a" style="left:697px;top:412px" width="8" height="10"><rect x="1.8" y="2.5" width="5" height="7" rx="1.6" fill="#fafafa" stroke="#444" stroke-width="0.8"/><path d="M4.3,2.5 V5.5 M1.8,5.5 H6.8" stroke="#444" stroke-width="0.5"/><rect x="2.3" y="3" width="1.8" height="2.3" fill="#4a90d9"/><path d="M3,2.5 C3,1 1.5,1 1,0.5" fill="none" stroke="#444" stroke-width="0.6"/></svg>
<div class="t" style="left:705.5px;top:414.6px">menu</div>

<!-- right panel -->
<div class="a" style="left:568px;top:67px;width:184px;height:256px;background:#fff;border:1px solid #d0d0ce;border-top-color:#cdcdcb"></div>
<div class="a" style="left:570px;top:68px;width:180px;height:253px;background:#e8e8e7"></div>
<!-- tabs -->
<div class="a" style="left:591px;top:52.5px;width:36.5px;height:15px;background:#ebebea;border:1px solid #cfcfcd;border-bottom:none;border-radius:2px 2px 0 0"></div>
<div class="a" style="left:627px;top:52.5px;width:35px;height:15px;background:#ebebea;border:1px solid #cfcfcd;border-bottom:none;border-radius:2px 2px 0 0"></div>
<div class="a" style="left:568.5px;top:51.3px;width:23px;height:17.5px;background:#fcfcfc;border:1px solid #cfcfcd;border-bottom:none;border-radius:2px 2px 0 0"></div>
<div class="t" style="left:574px;top:56.5px">data</div>
<div class="t" style="left:595px;top:57.5px">functions</div>
<div class="t" style="left:631px;top:57.5px">variables</div>

<!-- table -->
<div class="a" style="left:571px;top:68px;width:178px;height:149px;background:#fff;border-right:1px solid #d8d8d6;border-left:1px solid #f0f0f0"></div>
<div class="a" style="left:571px;top:68px;width:178px;height:13px;background:#fff;border-bottom:1px solid #e6e6e6"></div>
<div class="a" style="left:591px;top:68px;width:1px;height:13px;background:#e6e6e6"></div>
<div class="a" style="left:611px;top:68px;width:1px;height:13px;background:#e6e6e6"></div>
<div class="a" style="left:663px;top:68px;width:1px;height:13px;background:#e6e6e6"></div>
<div class="t" style="left:574px;top:71.5px">No</div>
<div class="t" style="left:594px;top:71.5px">#F+#</div>
<div class="t" style="left:614px;top:71.5px">Name</div>
<!-- rows -->
<div class="a" style="left:571px;top:81px;width:92px;height:36px;background:#4a90d9"></div>
<div class="a" style="left:571px;top:93px;width:178px;height:1px;background:#e8e8e8"></div>
<div class="a" style="left:571px;top:105px;width:178px;height:1px;background:#e8e8e8"></div>
<div class="a" style="left:571px;top:117px;width:178px;height:1px;background:#e8e8e8"></div>
<div class="a" style="left:571px;top:93px;width:92px;height:1px;background:#82b2e6"></div>
<div class="a" style="left:571px;top:105px;width:92px;height:1px;background:#82b2e6"></div>
<div class="a" style="left:591px;top:81px;width:1px;height:36px;background:#6aa3e0"></div>
<div class="a" style="left:611px;top:81px;width:1px;height:36px;background:#6aa3e0"></div>
<div class="a" style="left:572px;top:83px;width:8px;height:8px;background:#00ff00;border:1px solid #2a1c1c"></div>
<div class="a" style="left:572px;top:95px;width:8px;height:8px;background:#00e0ff;border:1px solid #2a1c1c"></div>
<div class="a" style="left:572px;top:107px;width:8px;height:8px;background:#6a00f0;border:1px solid #2a1c1c"></div>
<div class="t" style="left:582.5px;top:84.5px;color:#fff">0</div>
<div class="t" style="left:582.5px;top:96.5px;color:#fff">1</div>
<div class="t" style="left:582.5px;top:108.5px;color:#fff">2</div>
<div class="t" style="left:592.5px;top:84.5px;color:#fff">0+0</div>
<div class="t" style="left:592.5px;top:96.5px;color:#fff">0+0</div>
<div class="t" style="left:592.5px;top:108.5px;color:#fff">0+0</div>
<div class="t" style="left:613px;top:84.5px;color:#fff">Q738</div>
<div class="t" style="left:613px;top:96.5px;color:#fff">R151</div>
<div class="t" style="left:613px;top:108.5px;color:#fff">R152</div>

<!-- sash -->
<div class="a" style="left:571px;top:219px;width:178px;height:1px;background:#cacac8"></div>
<!-- info -->
<div class="a" style="left:571px;top:222px;width:178px;height:44px;background:#fff;border-bottom:1px solid #d3d3d1;border-left:1px solid #f0f0f0"></div>
<div class="t" style="left:571.5px;top:224.3px;color:#1a1a1a">@2: 2267 points, 2267 active.</div>
<div class="t" style="left:571.5px;top:233.5px;color:#1a1a1a">Filename: /home/aleplo/test/Documents/Chem/Master/</div>
<div class="t" style="left:571.5px;top:242.5px;color:#1a1a1a">Data/MoS2-templating/PXRD/R152.raw</div>
<div class="t" style="left:571.5px;top:251.8px;color:#1a1a1a">Data title: R152</div>

<!-- combo -->
<div class="a" style="left:571px;top:268px;width:178px;height:16px;background:linear-gradient(#e8e8e7,#dededd);border:1px solid #c6c6c4;border-radius:2px"></div>
<div class="t" style="left:575px;top:272.5px;color:#2e3436">show only selected</div>
<svg class="a" style="left:738px;top:273px" width="7" height="5"><path d="M0.5,1 L6,1 L3.25,3.8 Z" fill="#2e3436"/></svg>

<!-- controls row -->
<svg class="a" style="left:572.5px;top:289.5px" width="6.5" height="7.3" viewBox="0 0 8 9"><circle cx="4.5" cy="6" r="2.1" fill="#111"/><circle cx="1.6" cy="3.6" r="0.9" fill="#111"/><circle cx="3.2" cy="1.8" r="0.9" fill="#111"/><circle cx="5.6" cy="1.8" r="0.9" fill="#111"/><circle cx="7.1" cy="3.6" r="0.9" fill="#111"/></svg>
<div class="a" style="left:578px;top:285px;width:18px;height:16px;background:#fff;border:1px solid #e4e4e3;border-radius:2px"></div>
<div class="a" style="left:589px;top:286px;width:1px;height:14px;background:#eeeeee"></div>
<div class="t" style="left:583px;top:290.3px;color:#333">2</div>
<svg class="a" style="left:588px;top:285px" width="8" height="16"><path d="M2,5 L4,3 L6,5 Z" fill="#333"/><path d="M2,11 L4,13 L6,11 Z" fill="#333"/></svg>
<div class="a" style="left:599.5px;top:289px;width:8px;height:8px;background:#f4f4f4;border:1px solid #b8b8b6;border-radius:1.5px"></div>
<svg class="a" style="left:600px;top:289px" width="8" height="8"><path d="M1.3,4 L3,6 L6.8,1.6" fill="none" stroke="#222" stroke-width="1.1"/></svg>
<div class="a" style="left:609px;top:287px;width:12px;height:12px;background:#e2e2e1;border:1px solid #dcdcdb;border-radius:1px"></div>
<div class="t" style="left:611px;top:290.2px;color:#5a5a5a">line</div>
<div class="a" style="left:625px;top:289px;width:8px;height:8px;background:#f4f4f4;border:1px solid #b8b8b6;border-radius:1.5px"></div>
<div class="t" style="left:635.6px;top:289.4px;font-size:7.8px;color:#2a2a2a">σ</div>
<svg class="a" style="left:720.5px;top:288.5px" width="7" height="9"><path d="M0.5,0.3 H6.3 L3.4,3.2 Z M0.5,8.7 H6.3 L3.4,5.8 Z" fill="#10e010"/><path d="M3.4,2 V7" stroke="#222" stroke-width="1.1"/><path d="M2,3 L3.4,1.8 L4.8,3 M2,6 L3.4,7.2 L4.8,6" fill="none" stroke="#222" stroke-width="0.7"/></svg>
<div class="a" style="left:727px;top:285px;width:22px;height:16px;background:#fff;border:1px solid #e4e4e3;border-radius:2px"></div>
<div class="t" style="left:731.5px;top:289.5px;color:#333">0</div>
<div class="a" style="left:742px;top:293px;width:7px;height:8px;background:#f3f3f3"></div>
<svg class="a" style="left:741px;top:285px" width="8" height="16"><path d="M2,5 L4,3 L6,5 Z" fill="#333"/><path d="M2,11 L4,13 L6,11 Z" fill="#999"/></svg>

<!-- buttons row -->
<div class="a" style="left:571px;top:302px;width:18px;height:18px;background:linear-gradient(#e9e9e8,#dcdcdb);border:1px solid #c8c8c6;border-radius:2px"></div>
<div class="a" style="left:590px;top:302px;width:18px;height:18px;background:linear-gradient(#e9e9e8,#dcdcdb);border:1px solid #c8c8c6;border-radius:2px"></div>
<div class="a" style="left:609px;top:302px;width:18px;height:18px;background:linear-gradient(#f4f4f4,#eaeaea);border:1px solid #d4d4d2;border-radius:2px"></div>
<div class="a" style="left:628px;top:302px;width:18px;height:18px;background:linear-gradient(#f4f4f4,#eaeaea);border:1px solid #d4d4d2;border-radius:2px"></div>
<div class="a" style="left:646px;top:302px;width:18px;height:18px;background:linear-gradient(#e9e9e8,#dcdcdb);border:1px solid #c8c8c6;border-radius:2px"></div>
<svg class="a" style="left:575px;top:306px" width="10" height="10" viewBox="0 0 10 10"><rect x="0" y="0" width="10" height="10" fill="#222"/><rect x="1" y="1" width="2.5" height="2.5" fill="#f6d6a0"/><rect x="4" y="1" width="2" height="2.5" fill="#fff"/><rect x="6.5" y="1" width="2.5" height="2.5" fill="#b58b5a"/><rect x="1" y="4" width="2.5" height="2" fill="#e05050"/><rect x="4" y="4" width="2" height="2" fill="#ddd"/><rect x="6.5" y="4" width="2.5" height="2" fill="#aaa"/><rect x="1" y="6.5" width="2.5" height="2.5" fill="#f0a0a0"/><rect x="4" y="6.5" width="2" height="2.5" fill="#1a9a3a"/><rect x="6.5" y="6.5" width="2.5" height="2.5" fill="#2a4ab0"/></svg>
<svg class="a" style="left:593px;top:306px" width="11" height="11" viewBox="0 0 11 11"><path d="M1.2,0.8 H9.3 V3 H8.4 L8,2.2 H4.2 L6.8,5.5 L4,8.8 H8.2 L8.7,7.8 H9.6 L9.2,10.2 H1 V9.4 L4.3,5.5 L1.2,1.6 Z" fill="#111"/></svg>
<svg class="a" style="left:612px;top:305px" width="12" height="12" viewBox="0 0 12 12"><path d="M1,3 h3 v5 h-3z M4,5 h3 v5 h-3z M7,6 h3 v5 h-3z" fill="#999" stroke="#222" stroke-width="0.8"/><path d="M2,1 l1,2 M5,3 l1,2 M9,4 l1,2" stroke="#333" stroke-width="0.7"/></svg>
<svg class="a" style="left:630px;top:307px" width="14" height="9" viewBox="0 0 14 9"><rect x="0.5" y="0.5" width="13" height="8" fill="#f4f4f4" stroke="#444" stroke-width="0.8"/><rect x="1.5" y="1.5" width="2" height="6" fill="#aaa"/><text x="4" y="6.5" font-size="5" font-family="Liberation Sans" fill="#333">run</text></svg>
<svg class="a" style="left:651px;top:307px" width="8" height="8"><path d="M1.5,1.5 L6.5,6.5 M6.5,1.5 L1.5,6.5" stroke="#111" stroke-width="1.5"/></svg>

</body></html>
